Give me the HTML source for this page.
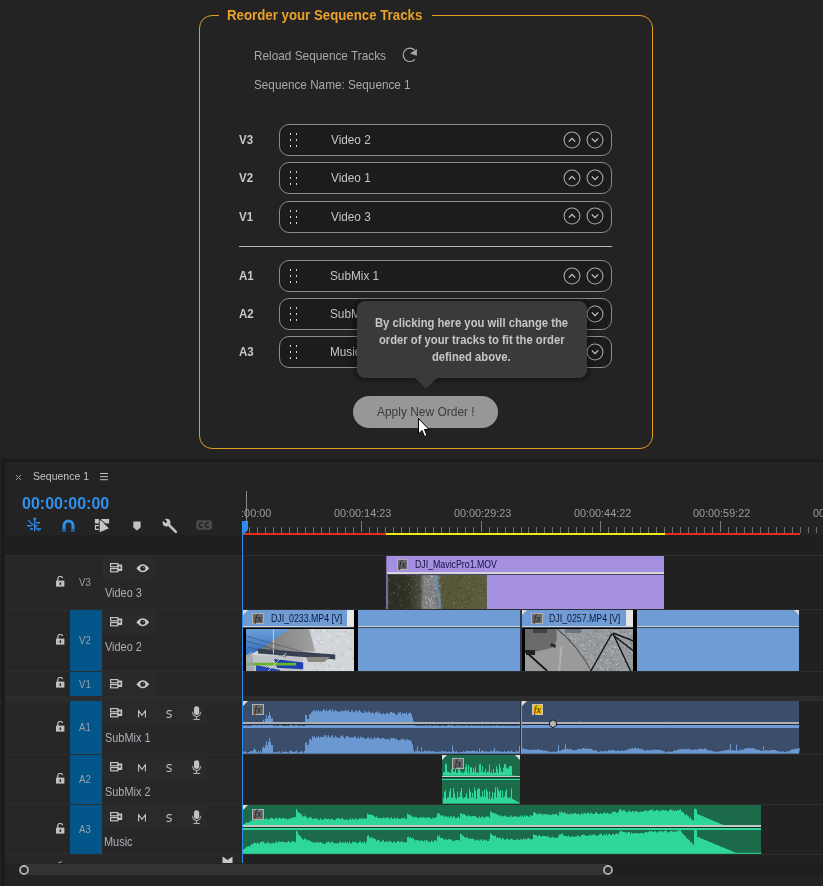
<!DOCTYPE html><html><head><meta charset="utf-8"><style>
*{margin:0;padding:0;box-sizing:border-box}
html,body{width:823px;height:886px;overflow:hidden;background:#232323;font-family:"Liberation Sans",sans-serif}
.a{position:absolute}
.t{position:absolute;white-space:nowrap;line-height:1}
</style></head><body><div class="a" style="left:199px;top:15px;width:454px;height:434px;border:1.4px solid #e49c22;border-radius:13px"></div>
<div class="a" style="left:218.5px;top:12px;width:213px;height:6px;background:#232323"></div>
<div class="t" style="left:227.37px;top:8.97px;font-size:13.91px;font-weight:700;color:#e8a12a;transform:scaleX(0.9533);transform-origin:0 0;">Reorder your Sequence Tracks</div>
<div class="t" style="left:253.85px;top:48.72px;font-size:13.62px;font-weight:400;color:#a8a8a8;transform:scaleX(0.8681);transform-origin:0 0;">Reload Sequence Tracks</div>
<svg class="a" style="left:402px;top:47px" width="17" height="17" viewBox="0 0 17 17"><path d="M12.5 3 A6.7 6.7 0 1 0 12.9 12.3" fill="none" stroke="#b2b2b2" stroke-width="1.1"/><path d="M8 6.5 L14.9 1.9 L14.9 8.7 Z" fill="#a8a8a8"/></svg>
<div class="t" style="left:254.21px;top:77.87px;font-size:13.33px;font-weight:400;color:#a8a8a8;transform:scaleX(0.8809);transform-origin:0 0;">Sequence Name: Sequence 1</div>
<div class="t" style="left:239.18px;top:134.36px;font-size:12.75px;font-weight:700;color:#c8c8c8;transform:scaleX(0.9037);transform-origin:0 0;">V3</div>
<div class="a" style="left:279px;top:124px;width:333px;height:32px;border:1.2px solid #8c8c8c;border-radius:10px;background:#1c1c1c"></div>
<div class="a" style="left:290px;top:133px;width:1.3px;height:2.1px;background:#d4d4d4"></div>
<div class="a" style="left:290px;top:139px;width:1.3px;height:2.1px;background:#d4d4d4"></div>
<div class="a" style="left:290px;top:145px;width:1.3px;height:2.1px;background:#d4d4d4"></div>
<div class="a" style="left:296.2px;top:133px;width:1.3px;height:2.1px;background:#d4d4d4"></div>
<div class="a" style="left:296.2px;top:139px;width:1.3px;height:2.1px;background:#d4d4d4"></div>
<div class="a" style="left:296.2px;top:145px;width:1.3px;height:2.1px;background:#d4d4d4"></div>
<div class="t" style="left:330.88px;top:132.87px;font-size:13.33px;font-weight:400;color:#c4c4c4;transform:scaleX(0.8837);transform-origin:0 0;">Video 2</div>
<svg class="a" style="left:562.4px;top:129.5px" width="20" height="20" viewBox="-10 -10 20 20"><circle cx="0" cy="0" r="7.95" fill="none" stroke="#a6a6a6" stroke-width="1.1"/><path d="M-3.2 1.6 L0 -1.6 L3.2 1.6" fill="none" stroke="#cacaca" stroke-width="1.25"/></svg>
<svg class="a" style="left:585.2px;top:129.5px" width="20" height="20" viewBox="-10 -10 20 20"><circle cx="0" cy="0" r="7.95" fill="none" stroke="#a6a6a6" stroke-width="1.1"/><path d="M-3.2 -1.6 L0 1.6 L3.2 -1.6" fill="none" stroke="#cacaca" stroke-width="1.25"/></svg>
<div class="t" style="left:239.18px;top:172.36px;font-size:12.75px;font-weight:700;color:#c8c8c8;transform:scaleX(0.9037);transform-origin:0 0;">V2</div>
<div class="a" style="left:279px;top:162px;width:333px;height:32px;border:1.2px solid #8c8c8c;border-radius:10px;background:#1c1c1c"></div>
<div class="a" style="left:290px;top:171px;width:1.3px;height:2.1px;background:#d4d4d4"></div>
<div class="a" style="left:290px;top:177px;width:1.3px;height:2.1px;background:#d4d4d4"></div>
<div class="a" style="left:290px;top:183px;width:1.3px;height:2.1px;background:#d4d4d4"></div>
<div class="a" style="left:296.2px;top:171px;width:1.3px;height:2.1px;background:#d4d4d4"></div>
<div class="a" style="left:296.2px;top:177px;width:1.3px;height:2.1px;background:#d4d4d4"></div>
<div class="a" style="left:296.2px;top:183px;width:1.3px;height:2.1px;background:#d4d4d4"></div>
<div class="t" style="left:330.88px;top:170.87px;font-size:13.33px;font-weight:400;color:#c4c4c4;transform:scaleX(0.8837);transform-origin:0 0;">Video 1</div>
<svg class="a" style="left:562.4px;top:167.5px" width="20" height="20" viewBox="-10 -10 20 20"><circle cx="0" cy="0" r="7.95" fill="none" stroke="#a6a6a6" stroke-width="1.1"/><path d="M-3.2 1.6 L0 -1.6 L3.2 1.6" fill="none" stroke="#cacaca" stroke-width="1.25"/></svg>
<svg class="a" style="left:585.2px;top:167.5px" width="20" height="20" viewBox="-10 -10 20 20"><circle cx="0" cy="0" r="7.95" fill="none" stroke="#a6a6a6" stroke-width="1.1"/><path d="M-3.2 -1.6 L0 1.6 L3.2 -1.6" fill="none" stroke="#cacaca" stroke-width="1.25"/></svg>
<div class="t" style="left:239.18px;top:210.86px;font-size:12.75px;font-weight:700;color:#c8c8c8;transform:scaleX(0.9037);transform-origin:0 0;">V1</div>
<div class="a" style="left:279px;top:200.5px;width:333px;height:32px;border:1.2px solid #8c8c8c;border-radius:10px;background:#1c1c1c"></div>
<div class="a" style="left:290px;top:209.5px;width:1.3px;height:2.1px;background:#d4d4d4"></div>
<div class="a" style="left:290px;top:215.5px;width:1.3px;height:2.1px;background:#d4d4d4"></div>
<div class="a" style="left:290px;top:221.5px;width:1.3px;height:2.1px;background:#d4d4d4"></div>
<div class="a" style="left:296.2px;top:209.5px;width:1.3px;height:2.1px;background:#d4d4d4"></div>
<div class="a" style="left:296.2px;top:215.5px;width:1.3px;height:2.1px;background:#d4d4d4"></div>
<div class="a" style="left:296.2px;top:221.5px;width:1.3px;height:2.1px;background:#d4d4d4"></div>
<div class="t" style="left:330.88px;top:210.37px;font-size:13.33px;font-weight:400;color:#c4c4c4;transform:scaleX(0.8837);transform-origin:0 0;">Video 3</div>
<svg class="a" style="left:562.4px;top:206.0px" width="20" height="20" viewBox="-10 -10 20 20"><circle cx="0" cy="0" r="7.95" fill="none" stroke="#a6a6a6" stroke-width="1.1"/><path d="M-3.2 1.6 L0 -1.6 L3.2 1.6" fill="none" stroke="#cacaca" stroke-width="1.25"/></svg>
<svg class="a" style="left:585.2px;top:206.0px" width="20" height="20" viewBox="-10 -10 20 20"><circle cx="0" cy="0" r="7.95" fill="none" stroke="#a6a6a6" stroke-width="1.1"/><path d="M-3.2 -1.6 L0 1.6 L3.2 -1.6" fill="none" stroke="#cacaca" stroke-width="1.25"/></svg>
<div class="t" style="left:238.95px;top:270.36px;font-size:12.75px;font-weight:700;color:#c8c8c8;transform:scaleX(0.9037);transform-origin:0 0;">A1</div>
<div class="a" style="left:279px;top:260px;width:333px;height:32px;border:1.2px solid #8c8c8c;border-radius:10px;background:#1c1c1c"></div>
<div class="a" style="left:290px;top:269px;width:1.3px;height:2.1px;background:#d4d4d4"></div>
<div class="a" style="left:290px;top:275px;width:1.3px;height:2.1px;background:#d4d4d4"></div>
<div class="a" style="left:290px;top:281px;width:1.3px;height:2.1px;background:#d4d4d4"></div>
<div class="a" style="left:296.2px;top:269px;width:1.3px;height:2.1px;background:#d4d4d4"></div>
<div class="a" style="left:296.2px;top:275px;width:1.3px;height:2.1px;background:#d4d4d4"></div>
<div class="a" style="left:296.2px;top:281px;width:1.3px;height:2.1px;background:#d4d4d4"></div>
<div class="t" style="left:330.41px;top:268.87px;font-size:13.33px;font-weight:400;color:#c4c4c4;transform:scaleX(0.8837);transform-origin:0 0;">SubMix 1</div>
<svg class="a" style="left:562.4px;top:265.5px" width="20" height="20" viewBox="-10 -10 20 20"><circle cx="0" cy="0" r="7.95" fill="none" stroke="#a6a6a6" stroke-width="1.1"/><path d="M-3.2 1.6 L0 -1.6 L3.2 1.6" fill="none" stroke="#cacaca" stroke-width="1.25"/></svg>
<svg class="a" style="left:585.2px;top:265.5px" width="20" height="20" viewBox="-10 -10 20 20"><circle cx="0" cy="0" r="7.95" fill="none" stroke="#a6a6a6" stroke-width="1.1"/><path d="M-3.2 -1.6 L0 1.6 L3.2 -1.6" fill="none" stroke="#cacaca" stroke-width="1.25"/></svg>
<div class="t" style="left:238.95px;top:308.36px;font-size:12.75px;font-weight:700;color:#c8c8c8;transform:scaleX(0.9037);transform-origin:0 0;">A2</div>
<div class="a" style="left:279px;top:298px;width:333px;height:32px;border:1.2px solid #8c8c8c;border-radius:10px;background:#1c1c1c"></div>
<div class="a" style="left:290px;top:307px;width:1.3px;height:2.1px;background:#d4d4d4"></div>
<div class="a" style="left:290px;top:313px;width:1.3px;height:2.1px;background:#d4d4d4"></div>
<div class="a" style="left:290px;top:319px;width:1.3px;height:2.1px;background:#d4d4d4"></div>
<div class="a" style="left:296.2px;top:307px;width:1.3px;height:2.1px;background:#d4d4d4"></div>
<div class="a" style="left:296.2px;top:313px;width:1.3px;height:2.1px;background:#d4d4d4"></div>
<div class="a" style="left:296.2px;top:319px;width:1.3px;height:2.1px;background:#d4d4d4"></div>
<div class="t" style="left:330.41px;top:306.87px;font-size:13.33px;font-weight:400;color:#c4c4c4;transform:scaleX(0.8837);transform-origin:0 0;">SubMix 2</div>
<svg class="a" style="left:562.4px;top:303.5px" width="20" height="20" viewBox="-10 -10 20 20"><circle cx="0" cy="0" r="7.95" fill="none" stroke="#a6a6a6" stroke-width="1.1"/><path d="M-3.2 1.6 L0 -1.6 L3.2 1.6" fill="none" stroke="#cacaca" stroke-width="1.25"/></svg>
<svg class="a" style="left:585.2px;top:303.5px" width="20" height="20" viewBox="-10 -10 20 20"><circle cx="0" cy="0" r="7.95" fill="none" stroke="#a6a6a6" stroke-width="1.1"/><path d="M-3.2 -1.6 L0 1.6 L3.2 -1.6" fill="none" stroke="#cacaca" stroke-width="1.25"/></svg>
<div class="t" style="left:238.95px;top:346.36px;font-size:12.75px;font-weight:700;color:#c8c8c8;transform:scaleX(0.9037);transform-origin:0 0;">A3</div>
<div class="a" style="left:279px;top:336px;width:333px;height:32px;border:1.2px solid #8c8c8c;border-radius:10px;background:#1c1c1c"></div>
<div class="a" style="left:290px;top:345px;width:1.3px;height:2.1px;background:#d4d4d4"></div>
<div class="a" style="left:290px;top:351px;width:1.3px;height:2.1px;background:#d4d4d4"></div>
<div class="a" style="left:290px;top:357px;width:1.3px;height:2.1px;background:#d4d4d4"></div>
<div class="a" style="left:296.2px;top:345px;width:1.3px;height:2.1px;background:#d4d4d4"></div>
<div class="a" style="left:296.2px;top:351px;width:1.3px;height:2.1px;background:#d4d4d4"></div>
<div class="a" style="left:296.2px;top:357px;width:1.3px;height:2.1px;background:#d4d4d4"></div>
<div class="t" style="left:330.06px;top:344.87px;font-size:13.33px;font-weight:400;color:#c4c4c4;transform:scaleX(0.8837);transform-origin:0 0;">Music</div>
<svg class="a" style="left:562.4px;top:341.5px" width="20" height="20" viewBox="-10 -10 20 20"><circle cx="0" cy="0" r="7.95" fill="none" stroke="#a6a6a6" stroke-width="1.1"/><path d="M-3.2 1.6 L0 -1.6 L3.2 1.6" fill="none" stroke="#cacaca" stroke-width="1.25"/></svg>
<svg class="a" style="left:585.2px;top:341.5px" width="20" height="20" viewBox="-10 -10 20 20"><circle cx="0" cy="0" r="7.95" fill="none" stroke="#a6a6a6" stroke-width="1.1"/><path d="M-3.2 -1.6 L0 1.6 L3.2 -1.6" fill="none" stroke="#cacaca" stroke-width="1.25"/></svg>
<div class="a" style="left:239px;top:245.8px;width:373px;height:1.1px;background:#b8b8b8"></div>
<div class="a" style="left:354px;top:299px;width:236px;height:82px;border-radius:10px;background:rgba(0,0,0,0.35);filter:blur(2.5px)"></div>
<div class="a" style="left:357px;top:301px;width:230px;height:77px;border-radius:8px;background:#3a3a3a"></div>
<svg class="a" style="left:412px;top:377px" width="28" height="13" viewBox="0 0 28 13"><path d="M2 0 L14 11.5 L26 0 Z" fill="#3a3a3a"/></svg>
<div class="t" style="left:374.66px;top:315.74px;font-size:13.48px;font-weight:700;color:#c6c6c6;transform:scaleX(0.8349);transform-origin:0 0;">By clicking here you will change the</div>
<div class="t" style="left:378.69px;top:332.74px;font-size:13.48px;font-weight:700;color:#c6c6c6;transform:scaleX(0.8349);transform-origin:0 0;">order of your tracks to fit the order</div>
<div class="t" style="left:432.38px;top:350.24px;font-size:13.48px;font-weight:700;color:#c6c6c6;transform:scaleX(0.8349);transform-origin:0 0;">defined above.</div>
<div class="a" style="left:353px;top:396px;width:145px;height:32px;border-radius:16px;background:#979797"></div>
<div class="t" style="left:377.20px;top:404.52px;font-size:13.62px;font-weight:400;color:#3c3c3c;transform:scaleX(0.8785);transform-origin:0 0;">Apply New Order !</div>
<svg class="a" style="left:417px;top:417px" width="14" height="22" viewBox="0 0 14 22"><path d="M1.5 1.5 L1.5 17 L5 13.5 L7.5 19.5 L10 18.5 L7.5 12.5 L12 12.5 Z" fill="#fff" stroke="#000" stroke-width="1"/></svg>
<div class="a" style="left:0;top:459px;width:823px;height:427px;background:#1b1b1b"></div>
<div class="a" style="left:0;top:459px;width:1px;height:427px;background:#222"></div>
<div class="a" style="left:5px;top:462px;width:818px;height:424px;background:#232323"></div>
<svg class="a" style="left:15px;top:474px" width="7" height="7" viewBox="0 0 7 7"><path d="M0.8 0.8 L6.2 6.2 M6.2 0.8 L0.8 6.2" stroke="#9a9a9a" stroke-width="1"/></svg>
<div class="t" style="left:32.68px;top:471.37px;font-size:11.45px;font-weight:400;color:#c4c4c4;transform:scaleX(0.9168);transform-origin:0 0;">Sequence 1</div>
<div class="a" style="left:100.3px;top:473.3px;width:8px;height:1.2px;background:#c0c0c0;box-shadow:0 3.1px 0 #c0c0c0,0 6.2px 0 #c0c0c0"></div>
<div class="t" style="left:22.46px;top:495.26px;font-size:17.10px;font-weight:700;color:#2f90ee;transform:scaleX(0.9365);transform-origin:0 0;">00:00:00:00</div>
<svg class="a" style="left:26px;top:517px" width="17" height="15" viewBox="0 0 17 15"><path d="M8.75 2 V14.2" stroke="#2f8fee" stroke-width="1.3"/><path d="M7.3 0.8 H10.2 V2.2 L8.75 3.4 L7.3 2.2 Z" fill="#2f8fee"/><path d="M10.2 5.7 H13.9 M1 8.7 H5.8 M10.2 8.7 H11.7 M4 12 H7 M11.7 12 H15" stroke="#2f8fee" stroke-width="1.5"/><path d="M2.2 3.2 L13.1 13.9" stroke="#2f8fee" stroke-width="1.15"/></svg><svg class="a" style="left:61.5px;top:518.5px" width="13" height="13" viewBox="0 0 13 13"><path d="M2 12.4 V6.4 A4.5 4.5 0 0 1 11 6.4 V12.4" fill="none" stroke="#2f8fee" stroke-width="3"/><path d="M0.5 9.8 H3.5 V12.4 H0.5 Z M9.5 9.8 H12.5 V12.4 H9.5 Z" fill="#1b5ea6"/></svg><svg class="a" style="left:94px;top:518px" width="16" height="15" viewBox="0 0 16 15"><rect x="0.9" y="1" width="4" height="4.5" fill="#c6c6c6"/><path d="M4.9 7.6 H1.4 V11.4 H4.9" fill="none" stroke="#c6c6c6" stroke-width="1.1"/><path d="M7 1 H15.1 V5.5 H7 Z" fill="#c6c6c6"/><path d="M5.7 1.8 V14.2 L15.1 10.2 Z" fill="#c6c6c6"/><path d="M6.5 1.2 L15 9.4" stroke="#232323" stroke-width="1"/></svg><svg class="a" style="left:132.5px;top:520.5px" width="8" height="10" viewBox="0 0 8 10"><path d="M0.3 0.4 H7.6 V6.4 L3.95 9.6 L0.3 6.4 Z" fill="#c0c0c0"/></svg><svg class="a" style="left:162px;top:517.5px" width="16" height="16" viewBox="0 0 16 16"><path d="M5.6 5.6 L13.8 13.8" stroke="#c4c4c4" stroke-width="2.6" stroke-linecap="round"/><circle cx="4.6" cy="4.6" r="3.9" fill="#c4c4c4"/><path d="M1.6 1.6 L4.4 4.4" stroke="#232323" stroke-width="2.3"/></svg><svg class="a" style="left:196px;top:520px" width="17" height="11" viewBox="0 0 17 11"><rect x="0.2" y="0.2" width="15.8" height="9.6" rx="2.4" fill="#4a4a4a"/><path d="M6.6 3.4 A2.1 2.1 0 1 0 6.6 6.6 M12.8 3.4 A2.1 2.1 0 1 0 12.8 6.6" fill="none" stroke="#232323" stroke-width="1.5"/></svg>
<div class="a" style="left:242px;top:462px;width:581px;height:73px;overflow:hidden"><div class="a" style="left:7.28px;top:65px;width:1px;height:5.7px;background:#6e6e6e"></div><div class="a" style="left:15.25px;top:65px;width:1px;height:5.7px;background:#6e6e6e"></div><div class="a" style="left:23.23px;top:65px;width:1px;height:5.7px;background:#6e6e6e"></div><div class="a" style="left:31.21px;top:65px;width:1px;height:5.7px;background:#6e6e6e"></div><div class="a" style="left:39.19px;top:65px;width:1px;height:5.7px;background:#6e6e6e"></div><div class="a" style="left:47.16px;top:65px;width:1px;height:5.7px;background:#6e6e6e"></div><div class="a" style="left:55.14px;top:65px;width:1px;height:5.7px;background:#6e6e6e"></div><div class="a" style="left:63.12px;top:65px;width:1px;height:5.7px;background:#6e6e6e"></div><div class="a" style="left:71.09px;top:65px;width:1px;height:5.7px;background:#6e6e6e"></div><div class="a" style="left:79.07px;top:65px;width:1px;height:5.7px;background:#6e6e6e"></div><div class="a" style="left:87.05px;top:65px;width:1px;height:5.7px;background:#6e6e6e"></div><div class="a" style="left:95.02px;top:65px;width:1px;height:5.7px;background:#6e6e6e"></div><div class="a" style="left:103.00px;top:65px;width:1px;height:5.7px;background:#6e6e6e"></div><div class="a" style="left:110.98px;top:65px;width:1px;height:5.7px;background:#6e6e6e"></div><div class="a" style="left:118.95px;top:59.3px;width:1px;height:11.2px;background:#7a7a7a"></div><div class="a" style="left:126.93px;top:65px;width:1px;height:5.7px;background:#6e6e6e"></div><div class="a" style="left:134.91px;top:65px;width:1px;height:5.7px;background:#6e6e6e"></div><div class="a" style="left:142.89px;top:65px;width:1px;height:5.7px;background:#6e6e6e"></div><div class="a" style="left:150.86px;top:65px;width:1px;height:5.7px;background:#6e6e6e"></div><div class="a" style="left:158.84px;top:65px;width:1px;height:5.7px;background:#6e6e6e"></div><div class="a" style="left:166.82px;top:65px;width:1px;height:5.7px;background:#6e6e6e"></div><div class="a" style="left:174.79px;top:65px;width:1px;height:5.7px;background:#6e6e6e"></div><div class="a" style="left:182.77px;top:65px;width:1px;height:5.7px;background:#6e6e6e"></div><div class="a" style="left:190.75px;top:65px;width:1px;height:5.7px;background:#6e6e6e"></div><div class="a" style="left:198.73px;top:65px;width:1px;height:5.7px;background:#6e6e6e"></div><div class="a" style="left:206.70px;top:65px;width:1px;height:5.7px;background:#6e6e6e"></div><div class="a" style="left:214.68px;top:65px;width:1px;height:5.7px;background:#6e6e6e"></div><div class="a" style="left:222.66px;top:65px;width:1px;height:5.7px;background:#6e6e6e"></div><div class="a" style="left:230.63px;top:65px;width:1px;height:5.7px;background:#6e6e6e"></div><div class="a" style="left:238.61px;top:59.3px;width:1px;height:11.2px;background:#7a7a7a"></div><div class="a" style="left:246.59px;top:65px;width:1px;height:5.7px;background:#6e6e6e"></div><div class="a" style="left:254.56px;top:65px;width:1px;height:5.7px;background:#6e6e6e"></div><div class="a" style="left:262.54px;top:65px;width:1px;height:5.7px;background:#6e6e6e"></div><div class="a" style="left:270.52px;top:65px;width:1px;height:5.7px;background:#6e6e6e"></div><div class="a" style="left:278.50px;top:65px;width:1px;height:5.7px;background:#6e6e6e"></div><div class="a" style="left:286.47px;top:65px;width:1px;height:5.7px;background:#6e6e6e"></div><div class="a" style="left:294.45px;top:65px;width:1px;height:5.7px;background:#6e6e6e"></div><div class="a" style="left:302.43px;top:65px;width:1px;height:5.7px;background:#6e6e6e"></div><div class="a" style="left:310.40px;top:65px;width:1px;height:5.7px;background:#6e6e6e"></div><div class="a" style="left:318.38px;top:65px;width:1px;height:5.7px;background:#6e6e6e"></div><div class="a" style="left:326.36px;top:65px;width:1px;height:5.7px;background:#6e6e6e"></div><div class="a" style="left:334.33px;top:65px;width:1px;height:5.7px;background:#6e6e6e"></div><div class="a" style="left:342.31px;top:65px;width:1px;height:5.7px;background:#6e6e6e"></div><div class="a" style="left:350.29px;top:65px;width:1px;height:5.7px;background:#6e6e6e"></div><div class="a" style="left:358.27px;top:59.3px;width:1px;height:11.2px;background:#7a7a7a"></div><div class="a" style="left:366.24px;top:65px;width:1px;height:5.7px;background:#6e6e6e"></div><div class="a" style="left:374.22px;top:65px;width:1px;height:5.7px;background:#6e6e6e"></div><div class="a" style="left:382.20px;top:65px;width:1px;height:5.7px;background:#6e6e6e"></div><div class="a" style="left:390.17px;top:65px;width:1px;height:5.7px;background:#6e6e6e"></div><div class="a" style="left:398.15px;top:65px;width:1px;height:5.7px;background:#6e6e6e"></div><div class="a" style="left:406.13px;top:65px;width:1px;height:5.7px;background:#6e6e6e"></div><div class="a" style="left:414.10px;top:65px;width:1px;height:5.7px;background:#6e6e6e"></div><div class="a" style="left:422.08px;top:65px;width:1px;height:5.7px;background:#6e6e6e"></div><div class="a" style="left:430.06px;top:65px;width:1px;height:5.7px;background:#6e6e6e"></div><div class="a" style="left:438.04px;top:65px;width:1px;height:5.7px;background:#6e6e6e"></div><div class="a" style="left:446.01px;top:65px;width:1px;height:5.7px;background:#6e6e6e"></div><div class="a" style="left:453.99px;top:65px;width:1px;height:5.7px;background:#6e6e6e"></div><div class="a" style="left:461.97px;top:65px;width:1px;height:5.7px;background:#6e6e6e"></div><div class="a" style="left:469.94px;top:65px;width:1px;height:5.7px;background:#6e6e6e"></div><div class="a" style="left:477.92px;top:59.3px;width:1px;height:11.2px;background:#7a7a7a"></div><div class="a" style="left:485.90px;top:65px;width:1px;height:5.7px;background:#6e6e6e"></div><div class="a" style="left:493.87px;top:65px;width:1px;height:5.7px;background:#6e6e6e"></div><div class="a" style="left:501.85px;top:65px;width:1px;height:5.7px;background:#6e6e6e"></div><div class="a" style="left:509.83px;top:65px;width:1px;height:5.7px;background:#6e6e6e"></div><div class="a" style="left:517.80px;top:65px;width:1px;height:5.7px;background:#6e6e6e"></div><div class="a" style="left:525.78px;top:65px;width:1px;height:5.7px;background:#6e6e6e"></div><div class="a" style="left:533.76px;top:65px;width:1px;height:5.7px;background:#6e6e6e"></div><div class="a" style="left:541.74px;top:65px;width:1px;height:5.7px;background:#6e6e6e"></div><div class="a" style="left:549.71px;top:65px;width:1px;height:5.7px;background:#6e6e6e"></div><div class="a" style="left:557.69px;top:65px;width:1px;height:5.7px;background:#6e6e6e"></div><div class="a" style="left:565.67px;top:65px;width:1px;height:5.7px;background:#6e6e6e"></div><div class="a" style="left:573.64px;top:65px;width:1px;height:5.7px;background:#6e6e6e"></div><div class="a" style="left:581.62px;top:65px;width:1px;height:5.7px;background:#6e6e6e"></div><div class="a" style="left:589.60px;top:65px;width:1px;height:5.7px;background:#6e6e6e"></div></div><div class="a" style="left:242px;top:462px;width:581px;height:73px;overflow:hidden"><div class="t" style="left:-27.93px;top:46.27px;font-size:11.45px;font-weight:400;color:#9c9c9c;transform:scaleX(0.9473);transform-origin:0 0;">00:00:00:00</div><div class="t" style="left:91.87px;top:46.27px;font-size:11.45px;font-weight:400;color:#9c9c9c;transform:scaleX(0.9473);transform-origin:0 0;">00:00:14:23</div><div class="t" style="left:211.67px;top:46.27px;font-size:11.45px;font-weight:400;color:#9c9c9c;transform:scaleX(0.9473);transform-origin:0 0;">00:00:29:23</div><div class="t" style="left:331.52px;top:46.27px;font-size:11.45px;font-weight:400;color:#9c9c9c;transform:scaleX(0.9473);transform-origin:0 0;">00:00:44:22</div><div class="t" style="left:451.32px;top:46.27px;font-size:11.45px;font-weight:400;color:#9c9c9c;transform:scaleX(0.9473);transform-origin:0 0;">00:00:59:22</div><div class="t" style="left:571.12px;top:46.27px;font-size:11.45px;font-weight:400;color:#9c9c9c;transform:scaleX(0.9473);transform-origin:0 0;">00:01:14:22</div><div class="a" style="left:0.8px;top:71px;width:143px;height:2.2px;background:#e52b1c"></div><div class="a" style="left:143.6px;top:71px;width:279.4px;height:2.2px;background:#eeea16"></div><div class="a" style="left:423px;top:71px;width:134.7px;height:2.2px;background:#e52b1c"></div></div><div class="a" style="left:246px;top:491px;width:1px;height:31px;background:#8c8c8c"></div><svg class="a" style="left:241px;top:520px" width="8" height="16" viewBox="0 0 8 16"><path d="M1 1 H7 V10 L1.8 15 H1 Z" fill="#2d8ceb"/></svg>
<div class="a" style="left:5px;top:535px;width:818px;height:20px;background:#1f1f1f"></div>
<div class="a" style="left:5px;top:555px;width:818px;height:1px;background:#2e2e2e"></div>
<div class="a" style="left:5px;top:556px;width:237px;height:53px;background:#282627"></div>
<div class="a" style="left:242px;top:556px;width:581px;height:53px;background:#212121"></div>
<div class="a" style="left:5px;top:609px;width:818px;height:1px;background:#2d2d2d"></div>
<svg class="a" style="left:55.8px;top:576.4px" width="10" height="11" viewBox="0 0 10 11"><path d="M1.9 5 V3.3 A2.4 2.4 0 0 1 6.6 2.2" fill="none" stroke="#bdbdbd" stroke-width="1.3"/><rect x="0" y="4.6" width="8.4" height="6" fill="#c0c0c0"/><rect x="3.6" y="6.4" width="1.5" height="2.6" fill="#282627"/></svg>
<div class="t" style="left:78.75px;top:578.35px;font-size:10.29px;font-weight:400;color:#98a2ac;transform:scaleX(0.9386);transform-origin:0 0;">V3</div>
<div class="a" style="left:102px;top:557px;width:53px;height:23px;background:#2a2a2a"></div>
<svg class="a" style="left:109.6px;top:563.2px" width="14" height="10" viewBox="0 0 14 10"><rect x="0.6" y="0.6" width="7.2" height="3.2" fill="none" stroke="#c4c4c4" stroke-width="1.2"/><rect x="0.6" y="5.6" width="7.2" height="3.2" fill="none" stroke="#c4c4c4" stroke-width="1.2"/><path d="M7.8 1.4 H12.2 V8 H7.8 Z M8.6 3.6 V5.8 H10.6 V3.6 Z" fill="#c4c4c4" fill-rule="evenodd"/></svg>
<svg class="a" style="left:135.9px;top:564.3px" width="15" height="10" viewBox="0 0 15 10"><path d="M0.4 4.3 Q6.8 -3.6 13.2 4.3 Q6.8 12.2 0.4 4.3 Z" fill="#c8c8c8"/><circle cx="6.8" cy="4.3" r="2.5" fill="#262626"/><circle cx="7.6" cy="3.6" r="0.7" fill="#9a9a9a"/></svg>
<div class="t" style="left:105.09px;top:586.73px;font-size:12.32px;font-weight:400;color:#a9b0b6;transform:scaleX(0.8876);transform-origin:0 0;">Video 3</div>
<div class="a" style="left:5px;top:610px;width:237px;height:61px;background:#282627"></div>
<div class="a" style="left:242px;top:610px;width:581px;height:61px;background:#212121"></div>
<div class="a" style="left:5px;top:671px;width:818px;height:1px;background:#2d2d2d"></div>
<div class="a" style="left:70px;top:610px;width:32px;height:61px;background:#02568a"></div>
<svg class="a" style="left:55.8px;top:634.4px" width="10" height="11" viewBox="0 0 10 11"><path d="M1.9 5 V3.3 A2.4 2.4 0 0 1 6.6 2.2" fill="none" stroke="#bdbdbd" stroke-width="1.3"/><rect x="0" y="4.6" width="8.4" height="6" fill="#c0c0c0"/><rect x="3.6" y="6.4" width="1.5" height="2.6" fill="#282627"/></svg>
<div class="t" style="left:78.80px;top:636.35px;font-size:10.29px;font-weight:400;color:#98a2ac;transform:scaleX(0.9386);transform-origin:0 0;">V2</div>
<div class="a" style="left:102px;top:611px;width:53px;height:23px;background:#2a2a2a"></div>
<svg class="a" style="left:109.6px;top:617.2px" width="14" height="10" viewBox="0 0 14 10"><rect x="0.6" y="0.6" width="7.2" height="3.2" fill="none" stroke="#c4c4c4" stroke-width="1.2"/><rect x="0.6" y="5.6" width="7.2" height="3.2" fill="none" stroke="#c4c4c4" stroke-width="1.2"/><path d="M7.8 1.4 H12.2 V8 H7.8 Z M8.6 3.6 V5.8 H10.6 V3.6 Z" fill="#c4c4c4" fill-rule="evenodd"/></svg>
<svg class="a" style="left:135.9px;top:618.3px" width="15" height="10" viewBox="0 0 15 10"><path d="M0.4 4.3 Q6.8 -3.6 13.2 4.3 Q6.8 12.2 0.4 4.3 Z" fill="#c8c8c8"/><circle cx="6.8" cy="4.3" r="2.5" fill="#262626"/><circle cx="7.6" cy="3.6" r="0.7" fill="#9a9a9a"/></svg>
<div class="t" style="left:105.09px;top:640.73px;font-size:12.32px;font-weight:400;color:#a9b0b6;transform:scaleX(0.8876);transform-origin:0 0;">Video 2</div>
<div class="a" style="left:5px;top:672px;width:237px;height:24px;background:#282627"></div>
<div class="a" style="left:242px;top:672px;width:581px;height:24px;background:#212121"></div>
<div class="a" style="left:5px;top:696px;width:818px;height:1px;background:#2d2d2d"></div>
<div class="a" style="left:70px;top:672px;width:32px;height:24px;background:#02568a"></div>
<svg class="a" style="left:55.8px;top:677px" width="10" height="11" viewBox="0 0 10 11"><path d="M1.9 5 V3.3 A2.4 2.4 0 0 1 6.6 2.2" fill="none" stroke="#bdbdbd" stroke-width="1.3"/><rect x="0" y="4.6" width="8.4" height="6" fill="#c0c0c0"/><rect x="3.6" y="6.4" width="1.5" height="2.6" fill="#282627"/></svg>
<div class="t" style="left:78.80px;top:680.35px;font-size:10.29px;font-weight:400;color:#98a2ac;transform:scaleX(0.9386);transform-origin:0 0;">V1</div>
<div class="a" style="left:102px;top:673px;width:53px;height:23px;background:#2a2a2a"></div>
<svg class="a" style="left:109.6px;top:679.2px" width="14" height="10" viewBox="0 0 14 10"><rect x="0.6" y="0.6" width="7.2" height="3.2" fill="none" stroke="#c4c4c4" stroke-width="1.2"/><rect x="0.6" y="5.6" width="7.2" height="3.2" fill="none" stroke="#c4c4c4" stroke-width="1.2"/><path d="M7.8 1.4 H12.2 V8 H7.8 Z M8.6 3.6 V5.8 H10.6 V3.6 Z" fill="#c4c4c4" fill-rule="evenodd"/></svg>
<svg class="a" style="left:135.9px;top:680.3px" width="15" height="10" viewBox="0 0 15 10"><path d="M0.4 4.3 Q6.8 -3.6 13.2 4.3 Q6.8 12.2 0.4 4.3 Z" fill="#c8c8c8"/><circle cx="6.8" cy="4.3" r="2.5" fill="#262626"/><circle cx="7.6" cy="3.6" r="0.7" fill="#9a9a9a"/></svg>
<div class="a" style="left:5px;top:701px;width:237px;height:53px;background:#282627"></div>
<div class="a" style="left:242px;top:701px;width:581px;height:53px;background:#212121"></div>
<div class="a" style="left:5px;top:754px;width:818px;height:1px;background:#2d2d2d"></div>
<div class="a" style="left:70px;top:701px;width:32px;height:53px;background:#02568a"></div>
<svg class="a" style="left:55.8px;top:721.4px" width="10" height="11" viewBox="0 0 10 11"><path d="M1.9 5 V3.3 A2.4 2.4 0 0 1 6.6 2.2" fill="none" stroke="#bdbdbd" stroke-width="1.3"/><rect x="0" y="4.6" width="8.4" height="6" fill="#c0c0c0"/><rect x="3.6" y="6.4" width="1.5" height="2.6" fill="#282627"/></svg>
<div class="t" style="left:78.85px;top:723.35px;font-size:10.29px;font-weight:400;color:#98a2ac;transform:scaleX(0.9386);transform-origin:0 0;">A1</div>
<div class="a" style="left:102px;top:702px;width:104px;height:23px;background:#2a2a2a"></div>
<svg class="a" style="left:109.6px;top:707.8px" width="14" height="10" viewBox="0 0 14 10"><rect x="0.6" y="0.6" width="7.2" height="3.2" fill="none" stroke="#c4c4c4" stroke-width="1.2"/><rect x="0.6" y="5.6" width="7.2" height="3.2" fill="none" stroke="#c4c4c4" stroke-width="1.2"/><path d="M7.8 1.4 H12.2 V8 H7.8 Z M8.6 3.6 V5.8 H10.6 V3.6 Z" fill="#c4c4c4" fill-rule="evenodd"/></svg>
<svg class="a" style="left:138.2px;top:710.2px" width="9" height="8" viewBox="0 0 9 8"><path d="M0.6 7.6 V0.7 L4 5.4 L7.4 0.7 V7.6" fill="none" stroke="#c6c6c6" stroke-width="1.05"/></svg>
<svg class="a" style="left:166.3px;top:710.2px" width="7" height="8" viewBox="0 0 7 8"><path d="M5.6 1.2 Q4.8 0.5 3 0.5 Q0.8 0.6 0.8 2.2 Q0.9 3.6 3 3.9 Q5.4 4.3 5.4 5.8 Q5.3 7.4 3 7.5 Q1.2 7.5 0.5 6.8" fill="none" stroke="#c6c6c6" stroke-width="1.05"/></svg>
<svg class="a" style="left:192px;top:706.4px" width="10" height="15" viewBox="0 0 10 15"><rect x="2" y="0.3" width="5.2" height="8.6" rx="2.6" fill="#c0c0c0"/><path d="M0.6 5.8 V6.6 A4 4 0 0 0 8.6 6.6 V5.8" fill="none" stroke="#c0c0c0" stroke-width="1"/><path d="M4.6 10.6 V13 M1.4 13.4 H7.8" stroke="#c0c0c0" stroke-width="1"/></svg>
<div class="t" style="left:104.65px;top:731.73px;font-size:12.32px;font-weight:400;color:#a9b0b6;transform:scaleX(0.8876);transform-origin:0 0;">SubMix 1</div>
<div class="a" style="left:5px;top:755px;width:237px;height:49px;background:#282627"></div>
<div class="a" style="left:242px;top:755px;width:581px;height:49px;background:#212121"></div>
<div class="a" style="left:5px;top:804px;width:818px;height:1px;background:#2d2d2d"></div>
<div class="a" style="left:70px;top:755px;width:32px;height:49px;background:#02568a"></div>
<svg class="a" style="left:55.8px;top:773.4px" width="10" height="11" viewBox="0 0 10 11"><path d="M1.9 5 V3.3 A2.4 2.4 0 0 1 6.6 2.2" fill="none" stroke="#bdbdbd" stroke-width="1.3"/><rect x="0" y="4.6" width="8.4" height="6" fill="#c0c0c0"/><rect x="3.6" y="6.4" width="1.5" height="2.6" fill="#282627"/></svg>
<div class="t" style="left:78.85px;top:775.35px;font-size:10.29px;font-weight:400;color:#98a2ac;transform:scaleX(0.9386);transform-origin:0 0;">A2</div>
<div class="a" style="left:102px;top:756px;width:104px;height:23px;background:#2a2a2a"></div>
<svg class="a" style="left:109.6px;top:761.8px" width="14" height="10" viewBox="0 0 14 10"><rect x="0.6" y="0.6" width="7.2" height="3.2" fill="none" stroke="#c4c4c4" stroke-width="1.2"/><rect x="0.6" y="5.6" width="7.2" height="3.2" fill="none" stroke="#c4c4c4" stroke-width="1.2"/><path d="M7.8 1.4 H12.2 V8 H7.8 Z M8.6 3.6 V5.8 H10.6 V3.6 Z" fill="#c4c4c4" fill-rule="evenodd"/></svg>
<svg class="a" style="left:138.2px;top:764.2px" width="9" height="8" viewBox="0 0 9 8"><path d="M0.6 7.6 V0.7 L4 5.4 L7.4 0.7 V7.6" fill="none" stroke="#c6c6c6" stroke-width="1.05"/></svg>
<svg class="a" style="left:166.3px;top:764.2px" width="7" height="8" viewBox="0 0 7 8"><path d="M5.6 1.2 Q4.8 0.5 3 0.5 Q0.8 0.6 0.8 2.2 Q0.9 3.6 3 3.9 Q5.4 4.3 5.4 5.8 Q5.3 7.4 3 7.5 Q1.2 7.5 0.5 6.8" fill="none" stroke="#c6c6c6" stroke-width="1.05"/></svg>
<svg class="a" style="left:192px;top:760.4px" width="10" height="15" viewBox="0 0 10 15"><rect x="2" y="0.3" width="5.2" height="8.6" rx="2.6" fill="#c0c0c0"/><path d="M0.6 5.8 V6.6 A4 4 0 0 0 8.6 6.6 V5.8" fill="none" stroke="#c0c0c0" stroke-width="1"/><path d="M4.6 10.6 V13 M1.4 13.4 H7.8" stroke="#c0c0c0" stroke-width="1"/></svg>
<div class="t" style="left:104.65px;top:785.73px;font-size:12.32px;font-weight:400;color:#a9b0b6;transform:scaleX(0.8876);transform-origin:0 0;">SubMix 2</div>
<div class="a" style="left:5px;top:805px;width:237px;height:49px;background:#282627"></div>
<div class="a" style="left:242px;top:805px;width:581px;height:49px;background:#212121"></div>
<div class="a" style="left:5px;top:854px;width:818px;height:1px;background:#2d2d2d"></div>
<div class="a" style="left:70px;top:805px;width:32px;height:49px;background:#02568a"></div>
<svg class="a" style="left:55.8px;top:823.4px" width="10" height="11" viewBox="0 0 10 11"><path d="M1.9 5 V3.3 A2.4 2.4 0 0 1 6.6 2.2" fill="none" stroke="#bdbdbd" stroke-width="1.3"/><rect x="0" y="4.6" width="8.4" height="6" fill="#c0c0c0"/><rect x="3.6" y="6.4" width="1.5" height="2.6" fill="#282627"/></svg>
<div class="t" style="left:78.80px;top:825.35px;font-size:10.29px;font-weight:400;color:#98a2ac;transform:scaleX(0.9386);transform-origin:0 0;">A3</div>
<div class="a" style="left:102px;top:806px;width:104px;height:23px;background:#2a2a2a"></div>
<svg class="a" style="left:109.6px;top:811.8px" width="14" height="10" viewBox="0 0 14 10"><rect x="0.6" y="0.6" width="7.2" height="3.2" fill="none" stroke="#c4c4c4" stroke-width="1.2"/><rect x="0.6" y="5.6" width="7.2" height="3.2" fill="none" stroke="#c4c4c4" stroke-width="1.2"/><path d="M7.8 1.4 H12.2 V8 H7.8 Z M8.6 3.6 V5.8 H10.6 V3.6 Z" fill="#c4c4c4" fill-rule="evenodd"/></svg>
<svg class="a" style="left:138.2px;top:814.2px" width="9" height="8" viewBox="0 0 9 8"><path d="M0.6 7.6 V0.7 L4 5.4 L7.4 0.7 V7.6" fill="none" stroke="#c6c6c6" stroke-width="1.05"/></svg>
<svg class="a" style="left:166.3px;top:814.2px" width="7" height="8" viewBox="0 0 7 8"><path d="M5.6 1.2 Q4.8 0.5 3 0.5 Q0.8 0.6 0.8 2.2 Q0.9 3.6 3 3.9 Q5.4 4.3 5.4 5.8 Q5.3 7.4 3 7.5 Q1.2 7.5 0.5 6.8" fill="none" stroke="#c6c6c6" stroke-width="1.05"/></svg>
<svg class="a" style="left:192px;top:810.4px" width="10" height="15" viewBox="0 0 10 15"><rect x="2" y="0.3" width="5.2" height="8.6" rx="2.6" fill="#c0c0c0"/><path d="M0.6 5.8 V6.6 A4 4 0 0 0 8.6 6.6 V5.8" fill="none" stroke="#c0c0c0" stroke-width="1"/><path d="M4.6 10.6 V13 M1.4 13.4 H7.8" stroke="#c0c0c0" stroke-width="1"/></svg>
<div class="t" style="left:104.33px;top:835.73px;font-size:12.32px;font-weight:400;color:#a9b0b6;transform:scaleX(0.8876);transform-origin:0 0;">Music</div>
<div class="a" style="left:5px;top:855px;width:237px;height:8px;background:#282627"></div>
<div class="a" style="left:242px;top:855px;width:581px;height:8px;background:#212121"></div>
<div class="a" style="left:5px;top:863px;width:818px;height:1px;background:#2d2d2d"></div>
<svg class="a" style="left:57px;top:860.5px" width="6" height="3"><path d="M0.8 2.8 Q2 1 4.8 0.8" fill="none" stroke="#bbb" stroke-width="1.1"/></svg>
<svg class="a" style="left:222px;top:856px" width="12" height="7"><path d="M0.5 0.5 L5.5 4 L10.5 0.5 V7 H0.5 Z" fill="#c8c8c8"/></svg>
<div class="a" style="left:5px;top:696px;width:818px;height:5px;background:#2c2c2c"></div>
<div class="a" style="left:386px;top:556px;width:278px;height:53px;background:#a48fe1"></div><div class="a" style="left:386px;top:556px;width:1px;height:53px;background:#7f72a8"></div><div class="a" style="left:387px;top:572px;width:277px;height:1.6px;background:#d6d6da"></div><div class="a" style="left:387px;top:573.6px;width:277px;height:1px;background:#4a4560"></div><svg class="a" style="left:387px;top:574.5px" width="100" height="34.5" viewBox="0 0 100 34" preserveAspectRatio="none"><defs><linearGradient id="g3" x1="0" x2="1" y1="0" y2="0"><stop offset="0" stop-color="#2b2d22"/><stop offset="0.2" stop-color="#303226"/><stop offset="0.25" stop-color="#3c3d31"/><stop offset="0.33" stop-color="#4a4c42"/><stop offset="0.36" stop-color="#7a7c7c"/><stop offset="0.47" stop-color="#84868a"/><stop offset="0.53" stop-color="#5e604c"/><stop offset="0.56" stop-color="#55573a"/><stop offset="1" stop-color="#5a5c3a"/></linearGradient></defs><rect width="100" height="34" fill="url(#g3)"/><rect x="49.3" y="27.9" width="1.0" height="1.0" fill="#9a9a9a" opacity="0.7"/><rect x="48.7" y="1.3" width="1.0" height="1.0" fill="#e0e0e0" opacity="0.7"/><rect x="46.9" y="16.0" width="1.0" height="1.0" fill="#505050" opacity="0.7"/><rect x="40.7" y="0.7" width="1.0" height="1.0" fill="#9a9a9a" opacity="0.7"/><rect x="49.4" y="24.8" width="1.0" height="1.0" fill="#9a9a9a" opacity="0.7"/><rect x="51.4" y="18.3" width="1.0" height="1.0" fill="#c8c8c8" opacity="0.7"/><rect x="38.5" y="18.8" width="1.0" height="1.0" fill="#505050" opacity="0.7"/><rect x="46.9" y="20.7" width="1.0" height="1.0" fill="#c8c8c8" opacity="0.7"/><rect x="50.2" y="11.4" width="1.0" height="1.0" fill="#c8c8c8" opacity="0.7"/><rect x="41.5" y="13.9" width="1.0" height="1.0" fill="#505050" opacity="0.7"/><rect x="43.0" y="3.2" width="1.0" height="1.0" fill="#e0e0e0" opacity="0.7"/><rect x="47.6" y="27.1" width="1.0" height="1.0" fill="#c8c8c8" opacity="0.7"/><rect x="52.1" y="20.0" width="1.0" height="1.0" fill="#e0e0e0" opacity="0.7"/><rect x="49.9" y="31.0" width="1.0" height="1.0" fill="#9a9a9a" opacity="0.7"/><rect x="51.8" y="30.9" width="1.0" height="1.0" fill="#c8c8c8" opacity="0.7"/><rect x="46.4" y="8.3" width="1.0" height="1.0" fill="#9a9a9a" opacity="0.7"/><rect x="40.5" y="20.0" width="1.0" height="1.0" fill="#c8c8c8" opacity="0.7"/><rect x="44.0" y="23.1" width="1.0" height="1.0" fill="#e0e0e0" opacity="0.7"/><rect x="37.1" y="22.5" width="1.0" height="1.0" fill="#505050" opacity="0.7"/><rect x="47.9" y="12.9" width="1.0" height="1.0" fill="#e0e0e0" opacity="0.7"/><rect x="37.5" y="7.1" width="1.0" height="1.0" fill="#c8c8c8" opacity="0.7"/><rect x="38.4" y="5.8" width="1.0" height="1.0" fill="#505050" opacity="0.7"/><rect x="45.0" y="22.8" width="1.0" height="1.0" fill="#505050" opacity="0.7"/><rect x="41.7" y="17.9" width="1.0" height="1.0" fill="#505050" opacity="0.7"/><rect x="37.3" y="34.0" width="1.0" height="1.0" fill="#c8c8c8" opacity="0.7"/><rect x="38.3" y="20.2" width="1.0" height="1.0" fill="#9a9a9a" opacity="0.7"/><rect x="36.7" y="15.0" width="1.0" height="1.0" fill="#c8c8c8" opacity="0.7"/><rect x="51.1" y="22.8" width="1.0" height="1.0" fill="#9a9a9a" opacity="0.7"/><rect x="43.0" y="28.3" width="1.0" height="1.0" fill="#c8c8c8" opacity="0.7"/><rect x="44.3" y="16.0" width="1.0" height="1.0" fill="#9a9a9a" opacity="0.7"/><rect x="51.9" y="6.5" width="1.0" height="1.0" fill="#505050" opacity="0.7"/><rect x="43.1" y="24.6" width="1.0" height="1.0" fill="#e0e0e0" opacity="0.7"/><rect x="35.3" y="18.3" width="1.0" height="1.0" fill="#505050" opacity="0.7"/><rect x="45.6" y="12.3" width="1.0" height="1.0" fill="#505050" opacity="0.7"/><rect x="44.0" y="11.2" width="1.0" height="1.0" fill="#505050" opacity="0.7"/><rect x="52.7" y="31.5" width="1.0" height="1.0" fill="#9a9a9a" opacity="0.7"/><rect x="46.0" y="9.1" width="1.0" height="1.0" fill="#9a9a9a" opacity="0.7"/><rect x="46.8" y="16.7" width="1.0" height="1.0" fill="#9a9a9a" opacity="0.7"/><rect x="43.9" y="21.6" width="1.0" height="1.0" fill="#9a9a9a" opacity="0.7"/><rect x="40.8" y="22.4" width="1.0" height="1.0" fill="#9a9a9a" opacity="0.7"/><rect x="47.5" y="9.0" width="1.0" height="1.0" fill="#9a9a9a" opacity="0.7"/><rect x="52.6" y="24.8" width="1.0" height="1.0" fill="#e0e0e0" opacity="0.7"/><rect x="51.9" y="9.9" width="1.0" height="1.0" fill="#c8c8c8" opacity="0.7"/><rect x="46.2" y="32.8" width="1.0" height="1.0" fill="#e0e0e0" opacity="0.7"/><rect x="35.5" y="26.3" width="1.0" height="1.0" fill="#c8c8c8" opacity="0.7"/><rect x="47.3" y="12.6" width="1.0" height="1.0" fill="#9a9a9a" opacity="0.7"/><rect x="50.4" y="2.1" width="1.0" height="1.0" fill="#e0e0e0" opacity="0.7"/><rect x="37.8" y="9.2" width="1.0" height="1.0" fill="#c8c8c8" opacity="0.7"/><rect x="42.6" y="26.6" width="1.0" height="1.0" fill="#9a9a9a" opacity="0.7"/><rect x="36.4" y="7.9" width="1.0" height="1.0" fill="#505050" opacity="0.7"/><rect x="41.5" y="4.9" width="1.0" height="1.0" fill="#e0e0e0" opacity="0.7"/><rect x="45.9" y="4.9" width="1.0" height="1.0" fill="#c8c8c8" opacity="0.7"/><rect x="47.9" y="1.5" width="1.0" height="1.0" fill="#9a9a9a" opacity="0.7"/><rect x="43.3" y="30.6" width="1.0" height="1.0" fill="#c8c8c8" opacity="0.7"/><rect x="47.6" y="4.3" width="1.0" height="1.0" fill="#c8c8c8" opacity="0.7"/><rect x="37.9" y="21.5" width="1.0" height="1.0" fill="#505050" opacity="0.7"/><rect x="51.3" y="30.4" width="1.0" height="1.0" fill="#9a9a9a" opacity="0.7"/><rect x="44.0" y="0.7" width="1.0" height="1.0" fill="#e0e0e0" opacity="0.7"/><rect x="49.7" y="6.4" width="1.0" height="1.0" fill="#9a9a9a" opacity="0.7"/><rect x="43.6" y="14.9" width="1.0" height="1.0" fill="#505050" opacity="0.7"/><rect x="43.6" y="19.7" width="1.0" height="1.0" fill="#505050" opacity="0.7"/><rect x="52.6" y="9.7" width="1.0" height="1.0" fill="#c8c8c8" opacity="0.7"/><rect x="36.5" y="29.2" width="1.0" height="1.0" fill="#505050" opacity="0.7"/><rect x="39.9" y="16.1" width="1.0" height="1.0" fill="#9a9a9a" opacity="0.7"/><rect x="51.6" y="1.1" width="1.0" height="1.0" fill="#c8c8c8" opacity="0.7"/><rect x="39.5" y="20.6" width="1.0" height="1.0" fill="#e0e0e0" opacity="0.7"/><rect x="44.6" y="1.1" width="1.0" height="1.0" fill="#e0e0e0" opacity="0.7"/><rect x="41.1" y="1.1" width="1.0" height="1.0" fill="#e0e0e0" opacity="0.7"/><rect x="47.6" y="11.7" width="1.0" height="1.0" fill="#c8c8c8" opacity="0.7"/><rect x="37.8" y="23.0" width="1.0" height="1.0" fill="#9a9a9a" opacity="0.7"/><rect x="44.8" y="15.8" width="1.0" height="1.0" fill="#9a9a9a" opacity="0.7"/><rect x="46.5" y="4.4" width="1.0" height="1.0" fill="#505050" opacity="0.7"/><rect x="44.4" y="1.0" width="1.0" height="1.0" fill="#e0e0e0" opacity="0.7"/><rect x="38.3" y="25.1" width="1.0" height="1.0" fill="#9a9a9a" opacity="0.7"/><rect x="49.3" y="32.1" width="1.0" height="1.0" fill="#e0e0e0" opacity="0.7"/><rect x="42.5" y="5.5" width="1.0" height="1.0" fill="#505050" opacity="0.7"/><rect x="52.9" y="19.1" width="1.0" height="1.0" fill="#c8c8c8" opacity="0.7"/><rect x="49.2" y="19.3" width="1.0" height="1.0" fill="#e0e0e0" opacity="0.7"/><rect x="48.7" y="29.1" width="1.0" height="1.0" fill="#9a9a9a" opacity="0.7"/><rect x="35.2" y="28.7" width="1.0" height="1.0" fill="#e0e0e0" opacity="0.7"/><rect x="47.9" y="21.9" width="1.0" height="1.0" fill="#505050" opacity="0.7"/><rect x="39.9" y="6.3" width="1.0" height="1.0" fill="#e0e0e0" opacity="0.7"/><rect x="38.0" y="21.3" width="1.0" height="1.0" fill="#9a9a9a" opacity="0.7"/><rect x="36.3" y="0.4" width="1.0" height="1.0" fill="#9a9a9a" opacity="0.7"/><rect x="48.7" y="3.9" width="1.0" height="1.0" fill="#c8c8c8" opacity="0.7"/><rect x="47.1" y="20.3" width="1.0" height="1.0" fill="#c8c8c8" opacity="0.7"/><rect x="44.8" y="26.7" width="1.0" height="1.0" fill="#e0e0e0" opacity="0.7"/><rect x="48.7" y="23.4" width="1.0" height="1.0" fill="#505050" opacity="0.7"/><rect x="36.7" y="2.6" width="1.0" height="1.0" fill="#c8c8c8" opacity="0.7"/><rect x="38.0" y="22.5" width="1.0" height="1.0" fill="#c8c8c8" opacity="0.7"/><rect x="52.2" y="23.9" width="1.0" height="1.0" fill="#e0e0e0" opacity="0.7"/><rect x="35.9" y="31.3" width="1.0" height="1.0" fill="#9a9a9a" opacity="0.7"/><rect x="46.7" y="9.8" width="1.0" height="1.0" fill="#9a9a9a" opacity="0.7"/><rect x="39.2" y="27.7" width="1.0" height="1.0" fill="#e0e0e0" opacity="0.7"/><rect x="40.0" y="0.4" width="1.0" height="1.0" fill="#505050" opacity="0.7"/><rect x="49.0" y="3.2" width="1.0" height="1.0" fill="#c8c8c8" opacity="0.7"/><rect x="41.5" y="23.5" width="1.0" height="1.0" fill="#e0e0e0" opacity="0.7"/><rect x="52.1" y="1.0" width="1.0" height="1.0" fill="#505050" opacity="0.7"/><rect x="42.8" y="28.3" width="1.0" height="1.0" fill="#c8c8c8" opacity="0.7"/><rect x="41.2" y="1.0" width="1.0" height="1.0" fill="#505050" opacity="0.7"/><rect x="36.2" y="0.1" width="1.0" height="1.0" fill="#505050" opacity="0.7"/><rect x="36.6" y="20.1" width="1.0" height="1.0" fill="#505050" opacity="0.7"/><rect x="39.1" y="4.3" width="1.0" height="1.0" fill="#e0e0e0" opacity="0.7"/><rect x="39.4" y="22.5" width="1.0" height="1.0" fill="#9a9a9a" opacity="0.7"/><rect x="45.1" y="21.3" width="1.0" height="1.0" fill="#9a9a9a" opacity="0.7"/><rect x="51.7" y="8.6" width="1.0" height="1.0" fill="#505050" opacity="0.7"/><rect x="51.0" y="6.5" width="1.0" height="1.0" fill="#9a9a9a" opacity="0.7"/><rect x="36.9" y="6.0" width="1.0" height="1.0" fill="#c8c8c8" opacity="0.7"/><rect x="52.1" y="27.5" width="1.0" height="1.0" fill="#e0e0e0" opacity="0.7"/><rect x="37.2" y="20.2" width="1.0" height="1.0" fill="#9a9a9a" opacity="0.7"/><rect x="43.8" y="29.6" width="1.0" height="1.0" fill="#9a9a9a" opacity="0.7"/><rect x="38.9" y="21.9" width="1.0" height="1.0" fill="#9a9a9a" opacity="0.7"/><rect x="37.8" y="31.3" width="1.0" height="1.0" fill="#c8c8c8" opacity="0.7"/><rect x="41.1" y="8.6" width="1.0" height="1.0" fill="#e0e0e0" opacity="0.7"/><rect x="40.1" y="20.0" width="1.0" height="1.0" fill="#505050" opacity="0.7"/><rect x="39.0" y="26.5" width="1.0" height="1.0" fill="#e0e0e0" opacity="0.7"/><rect x="36.5" y="21.2" width="1.0" height="1.0" fill="#e0e0e0" opacity="0.7"/><rect x="51.7" y="3.0" width="1.0" height="1.0" fill="#9a9a9a" opacity="0.7"/><rect x="42.4" y="25.6" width="1.0" height="1.0" fill="#e0e0e0" opacity="0.7"/><rect x="44.4" y="32.4" width="1.0" height="1.0" fill="#9a9a9a" opacity="0.7"/><path d="M46.5 0 Q48.5 10 49.5 17 Q51.5 25 52 34 L54.5 34 Q53.5 24 52.5 16 Q50.5 8 49.5 0 Z" fill="#6a92b4" opacity="0.8"/><rect x="21.8" y="25.2" width="1.0" height="1.0" fill="#1e2018" opacity="0.6"/><rect x="29.4" y="26.4" width="1.0" height="1.0" fill="#6e6c4c" opacity="0.6"/><rect x="22.7" y="30.6" width="1.0" height="1.0" fill="#1e2018" opacity="0.6"/><rect x="13.0" y="29.5" width="1.0" height="1.0" fill="#3a3c28" opacity="0.6"/><rect x="19.0" y="19.5" width="1.0" height="1.0" fill="#1e2018" opacity="0.6"/><rect x="25.6" y="13.9" width="1.0" height="1.0" fill="#6e6c4c" opacity="0.6"/><rect x="32.1" y="26.0" width="1.0" height="1.0" fill="#6e6c4c" opacity="0.6"/><rect x="26.7" y="2.4" width="1.0" height="1.0" fill="#3a3c28" opacity="0.6"/><rect x="4.4" y="0.1" width="1.0" height="1.0" fill="#1e2018" opacity="0.6"/><rect x="7.3" y="7.3" width="1.0" height="1.0" fill="#6e6c4c" opacity="0.6"/><rect x="30.5" y="9.8" width="1.0" height="1.0" fill="#6e6c4c" opacity="0.6"/><rect x="18.9" y="23.0" width="1.0" height="1.0" fill="#6e6c4c" opacity="0.6"/><rect x="6.4" y="32.9" width="1.0" height="1.0" fill="#6e6c4c" opacity="0.6"/><rect x="33.8" y="30.4" width="1.0" height="1.0" fill="#8a8a6a" opacity="0.6"/><rect x="0.8" y="14.1" width="1.0" height="1.0" fill="#6e6c4c" opacity="0.6"/><rect x="9.2" y="11.3" width="1.0" height="1.0" fill="#1e2018" opacity="0.6"/><rect x="20.9" y="24.1" width="1.0" height="1.0" fill="#1e2018" opacity="0.6"/><rect x="10.8" y="27.8" width="1.0" height="1.0" fill="#3a3c28" opacity="0.6"/><rect x="24.4" y="6.3" width="1.0" height="1.0" fill="#3a3c28" opacity="0.6"/><rect x="24.7" y="1.9" width="1.0" height="1.0" fill="#1e2018" opacity="0.6"/><rect x="33.2" y="12.2" width="1.0" height="1.0" fill="#3a3c28" opacity="0.6"/><rect x="0.6" y="26.8" width="1.0" height="1.0" fill="#8a8a6a" opacity="0.6"/><rect x="13.2" y="28.6" width="1.0" height="1.0" fill="#3a3c28" opacity="0.6"/><rect x="1.6" y="6.2" width="1.0" height="1.0" fill="#6e6c4c" opacity="0.6"/><rect x="4.2" y="8.4" width="1.0" height="1.0" fill="#3a3c28" opacity="0.6"/><rect x="12.1" y="12.1" width="1.0" height="1.0" fill="#8a8a6a" opacity="0.6"/><rect x="27.1" y="3.7" width="1.0" height="1.0" fill="#8a8a6a" opacity="0.6"/><rect x="30.1" y="1.2" width="1.0" height="1.0" fill="#1e2018" opacity="0.6"/><rect x="7.3" y="17.4" width="1.0" height="1.0" fill="#8a8a6a" opacity="0.6"/><rect x="32.1" y="11.6" width="1.0" height="1.0" fill="#1e2018" opacity="0.6"/><rect x="10.9" y="10.8" width="1.0" height="1.0" fill="#6e6c4c" opacity="0.6"/><rect x="28.0" y="21.3" width="1.0" height="1.0" fill="#8a8a6a" opacity="0.6"/><rect x="34.9" y="5.5" width="1.0" height="1.0" fill="#1e2018" opacity="0.6"/><rect x="2.8" y="20.4" width="1.0" height="1.0" fill="#3a3c28" opacity="0.6"/><rect x="1.1" y="25.2" width="1.0" height="1.0" fill="#8a8a6a" opacity="0.6"/><rect x="28.9" y="15.5" width="1.0" height="1.0" fill="#3a3c28" opacity="0.6"/><rect x="5.1" y="33.3" width="1.0" height="1.0" fill="#1e2018" opacity="0.6"/><rect x="28.1" y="11.4" width="1.0" height="1.0" fill="#6e6c4c" opacity="0.6"/><rect x="4.6" y="24.9" width="1.0" height="1.0" fill="#6e6c4c" opacity="0.6"/><rect x="22.1" y="26.8" width="1.0" height="1.0" fill="#1e2018" opacity="0.6"/><rect x="5.9" y="12.7" width="1.0" height="1.0" fill="#1e2018" opacity="0.6"/><rect x="29.6" y="10.0" width="1.0" height="1.0" fill="#3a3c28" opacity="0.6"/><rect x="32.3" y="21.1" width="1.0" height="1.0" fill="#6e6c4c" opacity="0.6"/><rect x="34.2" y="15.4" width="1.0" height="1.0" fill="#3a3c28" opacity="0.6"/><rect x="24.1" y="10.8" width="1.0" height="1.0" fill="#8a8a6a" opacity="0.6"/><rect x="10.2" y="13.7" width="1.0" height="1.0" fill="#6e6c4c" opacity="0.6"/><rect x="3.9" y="27.9" width="1.0" height="1.0" fill="#6e6c4c" opacity="0.6"/><rect x="21.9" y="17.0" width="1.0" height="1.0" fill="#8a8a6a" opacity="0.6"/><rect x="6.3" y="16.7" width="1.0" height="1.0" fill="#8a8a6a" opacity="0.6"/><rect x="2.2" y="27.0" width="1.0" height="1.0" fill="#8a8a6a" opacity="0.6"/><rect x="24.3" y="22.6" width="1.0" height="1.0" fill="#8a8a6a" opacity="0.6"/><rect x="12.7" y="24.0" width="1.0" height="1.0" fill="#8a8a6a" opacity="0.6"/><rect x="29.2" y="9.0" width="1.0" height="1.0" fill="#8a8a6a" opacity="0.6"/><rect x="33.5" y="11.6" width="1.0" height="1.0" fill="#6e6c4c" opacity="0.6"/><rect x="20.3" y="0.4" width="1.0" height="1.0" fill="#8a8a6a" opacity="0.6"/><rect x="11.4" y="9.3" width="1.0" height="1.0" fill="#8a8a6a" opacity="0.6"/><rect x="28.6" y="22.0" width="1.0" height="1.0" fill="#8a8a6a" opacity="0.6"/><rect x="12.2" y="21.9" width="1.0" height="1.0" fill="#3a3c28" opacity="0.6"/><rect x="12.3" y="28.7" width="1.0" height="1.0" fill="#3a3c28" opacity="0.6"/><rect x="34.2" y="32.5" width="1.0" height="1.0" fill="#6e6c4c" opacity="0.6"/><rect x="18.5" y="5.6" width="1.0" height="1.0" fill="#8a8a6a" opacity="0.6"/><rect x="32.8" y="16.2" width="1.0" height="1.0" fill="#1e2018" opacity="0.6"/><rect x="25.2" y="24.8" width="1.0" height="1.0" fill="#6e6c4c" opacity="0.6"/><rect x="21.6" y="31.8" width="1.0" height="1.0" fill="#3a3c28" opacity="0.6"/><rect x="10.6" y="18.8" width="1.0" height="1.0" fill="#8a8a6a" opacity="0.6"/><rect x="25.2" y="0.9" width="1.0" height="1.0" fill="#6e6c4c" opacity="0.6"/><rect x="20.5" y="21.2" width="1.0" height="1.0" fill="#6e6c4c" opacity="0.6"/><rect x="7.7" y="23.3" width="1.0" height="1.0" fill="#1e2018" opacity="0.6"/><rect x="34.5" y="33.3" width="1.0" height="1.0" fill="#6e6c4c" opacity="0.6"/><rect x="1.9" y="4.5" width="1.0" height="1.0" fill="#8a8a6a" opacity="0.6"/><rect x="33.9" y="16.4" width="1.0" height="1.0" fill="#1e2018" opacity="0.6"/><rect x="14.5" y="11.9" width="1.0" height="1.0" fill="#1e2018" opacity="0.6"/><rect x="20.7" y="8.1" width="1.0" height="1.0" fill="#8a8a6a" opacity="0.6"/><rect x="0.0" y="13.8" width="1.0" height="1.0" fill="#8a8a6a" opacity="0.6"/><rect x="30.0" y="29.5" width="1.0" height="1.0" fill="#8a8a6a" opacity="0.6"/><rect x="33.8" y="18.7" width="1.0" height="1.0" fill="#8a8a6a" opacity="0.6"/><rect x="3.3" y="18.5" width="1.0" height="1.0" fill="#8a8a6a" opacity="0.6"/><rect x="33.3" y="10.0" width="1.0" height="1.0" fill="#8a8a6a" opacity="0.6"/><rect x="28.6" y="14.2" width="1.0" height="1.0" fill="#8a8a6a" opacity="0.6"/><rect x="16.4" y="5.3" width="1.0" height="1.0" fill="#3a3c28" opacity="0.6"/><rect x="19.7" y="32.5" width="1.0" height="1.0" fill="#6e6c4c" opacity="0.6"/><rect x="21.3" y="11.9" width="1.0" height="1.0" fill="#1e2018" opacity="0.6"/><rect x="13.4" y="11.1" width="1.0" height="1.0" fill="#6e6c4c" opacity="0.6"/><rect x="11.4" y="29.8" width="1.0" height="1.0" fill="#3a3c28" opacity="0.6"/><rect x="15.0" y="33.2" width="1.0" height="1.0" fill="#3a3c28" opacity="0.6"/><rect x="10.2" y="33.1" width="1.0" height="1.0" fill="#3a3c28" opacity="0.6"/><rect x="13.4" y="29.1" width="1.0" height="1.0" fill="#6e6c4c" opacity="0.6"/><rect x="20.9" y="8.8" width="1.0" height="1.0" fill="#8a8a6a" opacity="0.6"/><rect x="17.4" y="14.1" width="1.0" height="1.0" fill="#8a8a6a" opacity="0.6"/><rect x="33.1" y="10.5" width="1.0" height="1.0" fill="#8a8a6a" opacity="0.6"/><rect x="5.0" y="0.8" width="1.0" height="1.0" fill="#3a3c28" opacity="0.6"/><rect x="8.6" y="1.4" width="1.0" height="1.0" fill="#6e6c4c" opacity="0.6"/><rect x="28.9" y="0.4" width="1.0" height="1.0" fill="#8a8a6a" opacity="0.6"/><rect x="8.5" y="16.1" width="1.0" height="1.0" fill="#1e2018" opacity="0.6"/><rect x="8.6" y="9.1" width="1.0" height="1.0" fill="#6e6c4c" opacity="0.6"/><rect x="25.3" y="9.7" width="1.0" height="1.0" fill="#3a3c28" opacity="0.6"/><rect x="21.3" y="16.1" width="1.0" height="1.0" fill="#1e2018" opacity="0.6"/><rect x="0.6" y="4.3" width="1.0" height="1.0" fill="#8a8a6a" opacity="0.6"/><rect x="18.7" y="11.4" width="1.0" height="1.0" fill="#8a8a6a" opacity="0.6"/><rect x="25.6" y="0.9" width="1.0" height="1.0" fill="#8a8a6a" opacity="0.6"/><rect x="12.6" y="25.3" width="1.0" height="1.0" fill="#6e6c4c" opacity="0.6"/><rect x="1.3" y="8.6" width="1.0" height="1.0" fill="#3a3c28" opacity="0.6"/><rect x="24.0" y="3.7" width="1.0" height="1.0" fill="#6e6c4c" opacity="0.6"/><rect x="0.5" y="26.5" width="1.0" height="1.0" fill="#3a3c28" opacity="0.6"/><rect x="20.8" y="23.4" width="1.0" height="1.0" fill="#3a3c28" opacity="0.6"/><rect x="30.1" y="28.6" width="1.0" height="1.0" fill="#3a3c28" opacity="0.6"/><rect x="13.7" y="29.0" width="1.0" height="1.0" fill="#6e6c4c" opacity="0.6"/><rect x="31.5" y="15.8" width="1.0" height="1.0" fill="#1e2018" opacity="0.6"/><rect x="10.6" y="0.1" width="1.0" height="1.0" fill="#3a3c28" opacity="0.6"/><rect x="20.4" y="22.0" width="1.0" height="1.0" fill="#3a3c28" opacity="0.6"/><rect x="68.2" y="5.1" width="1.0" height="1.0" fill="#2e3020" opacity="0.6"/><rect x="56.4" y="18.2" width="1.0" height="1.0" fill="#8e8e6a" opacity="0.6"/><rect x="80.4" y="30.9" width="1.0" height="1.0" fill="#7a7850" opacity="0.6"/><rect x="54.8" y="14.7" width="1.0" height="1.0" fill="#2e3020" opacity="0.6"/><rect x="64.3" y="18.7" width="1.0" height="1.0" fill="#2e3020" opacity="0.6"/><rect x="91.9" y="4.2" width="1.0" height="1.0" fill="#7a7850" opacity="0.6"/><rect x="82.6" y="19.8" width="1.0" height="1.0" fill="#2e3020" opacity="0.6"/><rect x="80.1" y="13.5" width="1.0" height="1.0" fill="#7a7850" opacity="0.6"/><rect x="55.2" y="29.2" width="1.0" height="1.0" fill="#8e8e6a" opacity="0.6"/><rect x="72.7" y="18.4" width="1.0" height="1.0" fill="#6c6a48" opacity="0.6"/><rect x="67.5" y="27.7" width="1.0" height="1.0" fill="#7a7850" opacity="0.6"/><rect x="57.8" y="19.4" width="1.0" height="1.0" fill="#7a7850" opacity="0.6"/><rect x="70.5" y="18.6" width="1.0" height="1.0" fill="#2e3020" opacity="0.6"/><rect x="79.5" y="21.0" width="1.0" height="1.0" fill="#3a3c28" opacity="0.6"/><rect x="85.0" y="14.5" width="1.0" height="1.0" fill="#8e8e6a" opacity="0.6"/><rect x="74.9" y="31.4" width="1.0" height="1.0" fill="#8e8e6a" opacity="0.6"/><rect x="67.1" y="27.0" width="1.0" height="1.0" fill="#7a7850" opacity="0.6"/><rect x="56.8" y="10.2" width="1.0" height="1.0" fill="#3a3c28" opacity="0.6"/><rect x="94.1" y="24.8" width="1.0" height="1.0" fill="#8e8e6a" opacity="0.6"/><rect x="81.6" y="2.5" width="1.0" height="1.0" fill="#6c6a48" opacity="0.6"/><rect x="72.7" y="25.7" width="1.0" height="1.0" fill="#7a7850" opacity="0.6"/><rect x="96.9" y="14.3" width="1.0" height="1.0" fill="#2e3020" opacity="0.6"/><rect x="88.9" y="19.5" width="1.0" height="1.0" fill="#8e8e6a" opacity="0.6"/><rect x="69.0" y="11.9" width="1.0" height="1.0" fill="#3a3c28" opacity="0.6"/><rect x="80.3" y="15.5" width="1.0" height="1.0" fill="#2e3020" opacity="0.6"/><rect x="97.4" y="16.1" width="1.0" height="1.0" fill="#2e3020" opacity="0.6"/><rect x="55.9" y="23.9" width="1.0" height="1.0" fill="#6c6a48" opacity="0.6"/><rect x="99.7" y="27.9" width="1.0" height="1.0" fill="#8e8e6a" opacity="0.6"/><rect x="86.7" y="30.2" width="1.0" height="1.0" fill="#8e8e6a" opacity="0.6"/><rect x="54.1" y="15.7" width="1.0" height="1.0" fill="#7a7850" opacity="0.6"/><rect x="81.7" y="16.8" width="1.0" height="1.0" fill="#7a7850" opacity="0.6"/><rect x="89.1" y="4.4" width="1.0" height="1.0" fill="#7a7850" opacity="0.6"/><rect x="71.7" y="31.2" width="1.0" height="1.0" fill="#3a3c28" opacity="0.6"/><rect x="56.8" y="15.3" width="1.0" height="1.0" fill="#6c6a48" opacity="0.6"/><rect x="66.1" y="4.7" width="1.0" height="1.0" fill="#3a3c28" opacity="0.6"/><rect x="93.6" y="9.5" width="1.0" height="1.0" fill="#3a3c28" opacity="0.6"/><rect x="99.4" y="23.2" width="1.0" height="1.0" fill="#3a3c28" opacity="0.6"/><rect x="98.0" y="5.1" width="1.0" height="1.0" fill="#7a7850" opacity="0.6"/><rect x="60.1" y="22.4" width="1.0" height="1.0" fill="#2e3020" opacity="0.6"/><rect x="75.8" y="20.0" width="1.0" height="1.0" fill="#8e8e6a" opacity="0.6"/><rect x="66.3" y="5.0" width="1.0" height="1.0" fill="#6c6a48" opacity="0.6"/><rect x="70.4" y="19.3" width="1.0" height="1.0" fill="#7a7850" opacity="0.6"/><rect x="85.5" y="17.5" width="1.0" height="1.0" fill="#6c6a48" opacity="0.6"/><rect x="83.8" y="25.2" width="1.0" height="1.0" fill="#3a3c28" opacity="0.6"/><rect x="95.3" y="26.5" width="1.0" height="1.0" fill="#6c6a48" opacity="0.6"/><rect x="71.4" y="13.6" width="1.0" height="1.0" fill="#2e3020" opacity="0.6"/><rect x="75.6" y="13.6" width="1.0" height="1.0" fill="#7a7850" opacity="0.6"/><rect x="56.2" y="7.1" width="1.0" height="1.0" fill="#7a7850" opacity="0.6"/><rect x="58.2" y="20.4" width="1.0" height="1.0" fill="#2e3020" opacity="0.6"/><rect x="53.0" y="5.1" width="1.0" height="1.0" fill="#2e3020" opacity="0.6"/><rect x="97.6" y="20.9" width="1.0" height="1.0" fill="#2e3020" opacity="0.6"/><rect x="94.1" y="20.9" width="1.0" height="1.0" fill="#7a7850" opacity="0.6"/><rect x="82.8" y="32.5" width="1.0" height="1.0" fill="#6c6a48" opacity="0.6"/><rect x="70.1" y="4.2" width="1.0" height="1.0" fill="#3a3c28" opacity="0.6"/><rect x="99.7" y="15.8" width="1.0" height="1.0" fill="#3a3c28" opacity="0.6"/><rect x="67.7" y="4.9" width="1.0" height="1.0" fill="#8e8e6a" opacity="0.6"/><rect x="87.8" y="16.3" width="1.0" height="1.0" fill="#7a7850" opacity="0.6"/><rect x="77.3" y="7.0" width="1.0" height="1.0" fill="#6c6a48" opacity="0.6"/><rect x="70.0" y="23.5" width="1.0" height="1.0" fill="#2e3020" opacity="0.6"/><rect x="88.6" y="10.1" width="1.0" height="1.0" fill="#2e3020" opacity="0.6"/><rect x="85.7" y="8.9" width="1.0" height="1.0" fill="#8e8e6a" opacity="0.6"/><rect x="95.7" y="12.1" width="1.0" height="1.0" fill="#7a7850" opacity="0.6"/><rect x="78.0" y="26.5" width="1.0" height="1.0" fill="#8e8e6a" opacity="0.6"/><rect x="82.9" y="20.8" width="1.0" height="1.0" fill="#7a7850" opacity="0.6"/><rect x="90.9" y="27.8" width="1.0" height="1.0" fill="#7a7850" opacity="0.6"/><rect x="62.4" y="16.8" width="1.0" height="1.0" fill="#2e3020" opacity="0.6"/><rect x="99.5" y="26.9" width="1.0" height="1.0" fill="#3a3c28" opacity="0.6"/><rect x="65.2" y="23.5" width="1.0" height="1.0" fill="#8e8e6a" opacity="0.6"/><rect x="74.0" y="31.9" width="1.0" height="1.0" fill="#8e8e6a" opacity="0.6"/><rect x="97.9" y="12.4" width="1.0" height="1.0" fill="#7a7850" opacity="0.6"/><rect x="57.8" y="16.0" width="1.0" height="1.0" fill="#8e8e6a" opacity="0.6"/><rect x="62.6" y="21.2" width="1.0" height="1.0" fill="#6c6a48" opacity="0.6"/><rect x="92.5" y="16.3" width="1.0" height="1.0" fill="#8e8e6a" opacity="0.6"/><rect x="90.6" y="2.9" width="1.0" height="1.0" fill="#2e3020" opacity="0.6"/><rect x="95.8" y="26.6" width="1.0" height="1.0" fill="#7a7850" opacity="0.6"/><rect x="75.5" y="6.1" width="1.0" height="1.0" fill="#8e8e6a" opacity="0.6"/><rect x="57.1" y="32.2" width="1.0" height="1.0" fill="#3a3c28" opacity="0.6"/><rect x="74.8" y="25.3" width="1.0" height="1.0" fill="#2e3020" opacity="0.6"/><rect x="87.1" y="5.8" width="1.0" height="1.0" fill="#7a7850" opacity="0.6"/><rect x="54.3" y="20.1" width="1.0" height="1.0" fill="#3a3c28" opacity="0.6"/><rect x="90.9" y="5.0" width="1.0" height="1.0" fill="#6c6a48" opacity="0.6"/><rect x="99.1" y="22.3" width="1.0" height="1.0" fill="#8e8e6a" opacity="0.6"/><rect x="60.3" y="18.6" width="1.0" height="1.0" fill="#2e3020" opacity="0.6"/><rect x="53.7" y="33.0" width="1.0" height="1.0" fill="#2e3020" opacity="0.6"/><rect x="77.7" y="31.7" width="1.0" height="1.0" fill="#3a3c28" opacity="0.6"/><rect x="99.4" y="6.6" width="1.0" height="1.0" fill="#7a7850" opacity="0.6"/><rect x="54.3" y="7.2" width="1.0" height="1.0" fill="#6c6a48" opacity="0.6"/><rect x="64.3" y="19.9" width="1.0" height="1.0" fill="#8e8e6a" opacity="0.6"/><rect x="78.6" y="28.4" width="1.0" height="1.0" fill="#2e3020" opacity="0.6"/><rect x="95.8" y="12.0" width="1.0" height="1.0" fill="#3a3c28" opacity="0.6"/><rect x="84.1" y="27.7" width="1.0" height="1.0" fill="#6c6a48" opacity="0.6"/><rect x="72.8" y="31.2" width="1.0" height="1.0" fill="#6c6a48" opacity="0.6"/><rect x="59.1" y="5.2" width="1.0" height="1.0" fill="#6c6a48" opacity="0.6"/><rect x="53.9" y="15.0" width="1.0" height="1.0" fill="#7a7850" opacity="0.6"/><rect x="81.6" y="26.4" width="1.0" height="1.0" fill="#7a7850" opacity="0.6"/><rect x="61.1" y="16.1" width="1.0" height="1.0" fill="#2e3020" opacity="0.6"/><rect x="79.2" y="11.1" width="1.0" height="1.0" fill="#6c6a48" opacity="0.6"/><rect x="77.9" y="16.4" width="1.0" height="1.0" fill="#2e3020" opacity="0.6"/><rect x="94.5" y="1.9" width="1.0" height="1.0" fill="#7a7850" opacity="0.6"/><rect x="66.0" y="26.3" width="1.0" height="1.0" fill="#6c6a48" opacity="0.6"/><rect x="74.3" y="0.9" width="1.0" height="1.0" fill="#2e3020" opacity="0.6"/><rect x="73.8" y="20.8" width="1.0" height="1.0" fill="#6c6a48" opacity="0.6"/><rect x="81.5" y="6.8" width="1.0" height="1.0" fill="#8e8e6a" opacity="0.6"/><rect x="74.3" y="18.1" width="1.0" height="1.0" fill="#3a3c28" opacity="0.6"/><rect x="76.9" y="8.4" width="1.0" height="1.0" fill="#6c6a48" opacity="0.6"/><rect x="94.2" y="32.0" width="1.0" height="1.0" fill="#8e8e6a" opacity="0.6"/><rect x="96.4" y="30.4" width="1.0" height="1.0" fill="#7a7850" opacity="0.6"/><rect x="92.5" y="4.7" width="1.0" height="1.0" fill="#2e3020" opacity="0.6"/><rect x="71.4" y="10.7" width="1.0" height="1.0" fill="#7a7850" opacity="0.6"/><rect x="73.1" y="7.2" width="1.0" height="1.0" fill="#8e8e6a" opacity="0.6"/><rect x="89.8" y="30.5" width="1.0" height="1.0" fill="#7a7850" opacity="0.6"/><rect x="97.2" y="21.9" width="1.0" height="1.0" fill="#8e8e6a" opacity="0.6"/><rect x="59.7" y="30.0" width="1.0" height="1.0" fill="#3a3c28" opacity="0.6"/><rect x="63.3" y="32.4" width="1.0" height="1.0" fill="#3a3c28" opacity="0.6"/><rect x="94.6" y="5.5" width="1.0" height="1.0" fill="#7a7850" opacity="0.6"/><rect x="60.6" y="14.7" width="1.0" height="1.0" fill="#6c6a48" opacity="0.6"/><rect x="72.0" y="14.3" width="1.0" height="1.0" fill="#8e8e6a" opacity="0.6"/><rect x="68.0" y="24.6" width="1.0" height="1.0" fill="#2e3020" opacity="0.6"/><rect x="68.9" y="15.6" width="1.0" height="1.0" fill="#2e3020" opacity="0.6"/><rect x="71.1" y="17.6" width="1.0" height="1.0" fill="#8e8e6a" opacity="0.6"/><rect x="77.1" y="2.2" width="1.0" height="1.0" fill="#7a7850" opacity="0.6"/><rect x="98.7" y="3.6" width="1.0" height="1.0" fill="#8e8e6a" opacity="0.6"/><rect x="65.8" y="30.8" width="1.0" height="1.0" fill="#7a7850" opacity="0.6"/><rect x="65.7" y="4.4" width="1.0" height="1.0" fill="#3a3c28" opacity="0.6"/><rect x="92.9" y="23.0" width="1.0" height="1.0" fill="#8e8e6a" opacity="0.6"/><rect x="72.1" y="18.2" width="1.0" height="1.0" fill="#6c6a48" opacity="0.6"/><rect x="79.8" y="23.8" width="1.0" height="1.0" fill="#2e3020" opacity="0.6"/><rect x="66.1" y="27.2" width="1.0" height="1.0" fill="#7a7850" opacity="0.6"/><rect x="73.0" y="2.5" width="1.0" height="1.0" fill="#2e3020" opacity="0.6"/><rect x="82.8" y="27.3" width="1.0" height="1.0" fill="#2e3020" opacity="0.6"/><rect x="81.6" y="7.6" width="1.0" height="1.0" fill="#8e8e6a" opacity="0.6"/><rect x="93.6" y="15.4" width="1.0" height="1.0" fill="#8e8e6a" opacity="0.6"/><rect x="99.7" y="14.2" width="1.0" height="1.0" fill="#8e8e6a" opacity="0.6"/><rect x="82.2" y="1.5" width="1.0" height="1.0" fill="#7a7850" opacity="0.6"/><rect x="97.1" y="33.0" width="1.0" height="1.0" fill="#8e8e6a" opacity="0.6"/><rect x="55.4" y="6.9" width="1.0" height="1.0" fill="#8e8e6a" opacity="0.6"/><rect x="82.5" y="18.1" width="1.0" height="1.0" fill="#7a7850" opacity="0.6"/><rect x="66.6" y="17.0" width="1.0" height="1.0" fill="#7a7850" opacity="0.6"/><rect x="65.7" y="27.3" width="1.0" height="1.0" fill="#8e8e6a" opacity="0.6"/><rect x="54.7" y="0.6" width="1.0" height="1.0" fill="#6c6a48" opacity="0.6"/><rect x="78.9" y="6.4" width="1.0" height="1.0" fill="#3a3c28" opacity="0.6"/><rect x="64.5" y="15.2" width="1.0" height="1.0" fill="#3a3c28" opacity="0.6"/><rect x="83.9" y="18.6" width="1.0" height="1.0" fill="#3a3c28" opacity="0.6"/><rect x="98.6" y="10.5" width="1.0" height="1.0" fill="#7a7850" opacity="0.6"/><rect x="99.2" y="11.7" width="1.0" height="1.0" fill="#7a7850" opacity="0.6"/><rect x="72.0" y="11.8" width="1.0" height="1.0" fill="#2e3020" opacity="0.6"/><rect x="92.3" y="0.5" width="1.0" height="1.0" fill="#8e8e6a" opacity="0.6"/><rect x="73.2" y="1.9" width="1.0" height="1.0" fill="#3a3c28" opacity="0.6"/><rect x="93.9" y="22.8" width="1.0" height="1.0" fill="#8e8e6a" opacity="0.6"/><rect x="81.1" y="23.6" width="1.0" height="1.0" fill="#2e3020" opacity="0.6"/><rect x="74.6" y="5.4" width="1.0" height="1.0" fill="#3a3c28" opacity="0.6"/><rect x="53.2" y="12.4" width="1.0" height="1.0" fill="#8e8e6a" opacity="0.6"/><rect x="98.7" y="18.6" width="1.0" height="1.0" fill="#7a7850" opacity="0.6"/><rect x="54.6" y="30.0" width="1.0" height="1.0" fill="#7a7850" opacity="0.6"/><rect x="69.8" y="0.0" width="1.0" height="1.0" fill="#3a3c28" opacity="0.6"/><rect x="56.9" y="9.5" width="1.0" height="1.0" fill="#7a7850" opacity="0.6"/><rect x="64.7" y="26.4" width="1.0" height="1.0" fill="#2e3020" opacity="0.6"/><rect x="65.4" y="3.1" width="1.0" height="1.0" fill="#3a3c28" opacity="0.6"/><rect x="80.6" y="13.4" width="1.0" height="1.0" fill="#8e8e6a" opacity="0.6"/><rect x="67.3" y="7.9" width="1.0" height="1.0" fill="#6c6a48" opacity="0.6"/><rect x="98.0" y="29.0" width="1.0" height="1.0" fill="#7a7850" opacity="0.6"/><rect x="83.9" y="24.3" width="1.0" height="1.0" fill="#6c6a48" opacity="0.6"/><rect x="71.3" y="11.1" width="1.0" height="1.0" fill="#3a3c28" opacity="0.6"/><rect x="60.0" y="24.6" width="1.0" height="1.0" fill="#7a7850" opacity="0.6"/><rect x="55.1" y="28.4" width="1.0" height="1.0" fill="#6c6a48" opacity="0.6"/><rect x="82.5" y="25.0" width="1.0" height="1.0" fill="#6c6a48" opacity="0.6"/><rect x="59.5" y="17.8" width="1.0" height="1.0" fill="#6c6a48" opacity="0.6"/><rect x="79.7" y="27.6" width="1.0" height="1.0" fill="#2e3020" opacity="0.6"/><rect x="91.8" y="19.9" width="1.0" height="1.0" fill="#7a7850" opacity="0.6"/><rect x="57.0" y="1.4" width="1.0" height="1.0" fill="#8e8e6a" opacity="0.6"/><rect x="98.1" y="12.8" width="1.0" height="1.0" fill="#3a3c28" opacity="0.6"/><rect x="79.3" y="21.3" width="1.0" height="1.0" fill="#6c6a48" opacity="0.6"/><rect x="85.0" y="16.6" width="1.0" height="1.0" fill="#2e3020" opacity="0.6"/><rect x="74.5" y="2.4" width="1.0" height="1.0" fill="#6c6a48" opacity="0.6"/><rect x="95.2" y="3.1" width="1.0" height="1.0" fill="#6c6a48" opacity="0.6"/><rect x="56.1" y="25.1" width="1.0" height="1.0" fill="#8e8e6a" opacity="0.6"/><rect x="91.0" y="28.8" width="1.0" height="1.0" fill="#7a7850" opacity="0.6"/><rect x="87.3" y="7.0" width="1.0" height="1.0" fill="#3a3c28" opacity="0.6"/><rect x="76.2" y="13.0" width="1.0" height="1.0" fill="#3a3c28" opacity="0.6"/><rect x="95.8" y="9.8" width="1.0" height="1.0" fill="#2e3020" opacity="0.6"/><rect x="82.0" y="21.9" width="1.0" height="1.0" fill="#2e3020" opacity="0.6"/><rect x="81.2" y="11.3" width="1.0" height="1.0" fill="#8e8e6a" opacity="0.6"/><rect x="82.2" y="4.5" width="1.0" height="1.0" fill="#3a3c28" opacity="0.6"/><rect x="55.9" y="9.1" width="1.0" height="1.0" fill="#2e3020" opacity="0.6"/><rect x="85.5" y="23.0" width="1.0" height="1.0" fill="#8e8e6a" opacity="0.6"/><rect x="86.3" y="9.7" width="1.0" height="1.0" fill="#3a3c28" opacity="0.6"/><rect x="74.9" y="4.0" width="1.0" height="1.0" fill="#6c6a48" opacity="0.6"/><rect x="62.4" y="33.3" width="1.0" height="1.0" fill="#3a3c28" opacity="0.6"/><rect x="53.8" y="15.6" width="1.0" height="1.0" fill="#6c6a48" opacity="0.6"/><rect x="98.5" y="15.3" width="1.0" height="1.0" fill="#8e8e6a" opacity="0.6"/><rect x="71.2" y="31.2" width="1.0" height="1.0" fill="#7a7850" opacity="0.6"/><rect x="56.5" y="3.1" width="1.0" height="1.0" fill="#6c6a48" opacity="0.6"/><rect x="65.3" y="12.2" width="1.0" height="1.0" fill="#6c6a48" opacity="0.6"/><rect x="91.6" y="17.3" width="1.0" height="1.0" fill="#2e3020" opacity="0.6"/><rect x="86.1" y="7.9" width="1.0" height="1.0" fill="#3a3c28" opacity="0.6"/><rect x="71.5" y="5.4" width="1.0" height="1.0" fill="#3a3c28" opacity="0.6"/><rect x="85.0" y="13.8" width="1.0" height="1.0" fill="#7a7850" opacity="0.6"/><rect x="72.6" y="12.8" width="1.0" height="1.0" fill="#2e3020" opacity="0.6"/><rect x="92.5" y="0.1" width="1.0" height="1.0" fill="#8e8e6a" opacity="0.6"/><rect x="92.4" y="4.1" width="1.0" height="1.0" fill="#7a7850" opacity="0.6"/><rect x="0" y="0" width="1.2" height="34" fill="#6a6a6a"/></svg><div class="a" style="left:396.5px;top:559.2px;width:11.8px;height:11px;background:#6a6a6a;border:1px solid #b0b0b0"></div><div class="t" style="left:398.8px;top:559.8000000000001px;font-size:10px;font-style:italic;color:#1e1e1e;font-family:'Liberation Serif'">fx</div><div class="t" style="left:414.60px;top:560.33px;font-size:10.43px;font-weight:400;color:#12123e;transform:scaleX(0.8423);transform-origin:0 0;">DJI_MavicPro1.MOV</div><div class="a" style="left:242.7px;top:610px;width:277.3px;height:61px;background:#709cd5"></div><div class="a" style="left:347.3px;top:610px;width:7px;height:15.5px;background:#e4e6e8"></div><div class="a" style="left:242.7px;top:625.8px;width:277.3px;height:1.6px;background:#cfd3d8"></div><div class="a" style="left:242.7px;top:627.4px;width:277.3px;height:1px;background:#3c4a5c"></div><div class="a" style="left:242.7px;top:628px;width:115.30000000000001px;height:43px;background:#000"></div><div class="a" style="left:354.3px;top:610px;width:3.7px;height:61px;background:#000"></div><svg class="a" style="left:246px;top:628.5px" width="108.3" height="42" viewBox="0 0 108 42" preserveAspectRatio="none"><defs><linearGradient id="sl" x1="0" x2="1"><stop offset="0" stop-color="#767676"/><stop offset="1" stop-color="#a2a2a2"/></linearGradient><linearGradient id="sk" x1="0" x2="0" y1="0" y2="1"><stop offset="0" stop-color="#6a9ed6"/><stop offset="1" stop-color="#2f6cc0"/></linearGradient></defs><rect width="108" height="42" fill="#d2d6da"/><rect x="73.7" y="22.9" width="2" height="2" fill="#eceef0" opacity="0.6"/><rect x="104.2" y="19.9" width="2" height="2" fill="#c0c4c8" opacity="0.6"/><rect x="65.9" y="0.6" width="2" height="2" fill="#eceef0" opacity="0.6"/><rect x="74.7" y="9.8" width="2" height="2" fill="#c0c4c8" opacity="0.6"/><rect x="84.2" y="35.1" width="2" height="2" fill="#eceef0" opacity="0.6"/><rect x="80.9" y="36.2" width="2" height="2" fill="#b4b8bc" opacity="0.6"/><rect x="91.6" y="36.5" width="2" height="2" fill="#c0c4c8" opacity="0.6"/><rect x="80.5" y="0.6" width="2" height="2" fill="#b4b8bc" opacity="0.6"/><rect x="70.2" y="40.2" width="2" height="2" fill="#b4b8bc" opacity="0.6"/><rect x="76.6" y="1.3" width="2" height="2" fill="#eceef0" opacity="0.6"/><rect x="84.3" y="30.2" width="2" height="2" fill="#eceef0" opacity="0.6"/><rect x="95.1" y="38.7" width="2" height="2" fill="#eceef0" opacity="0.6"/><rect x="95.8" y="24.2" width="2" height="2" fill="#b4b8bc" opacity="0.6"/><rect x="102.5" y="4.1" width="2" height="2" fill="#b4b8bc" opacity="0.6"/><rect x="85.3" y="10.8" width="2" height="2" fill="#c0c4c8" opacity="0.6"/><rect x="82.6" y="26.3" width="2" height="2" fill="#eceef0" opacity="0.6"/><rect x="82.0" y="35.0" width="2" height="2" fill="#c0c4c8" opacity="0.6"/><rect x="78.8" y="24.6" width="2" height="2" fill="#c0c4c8" opacity="0.6"/><rect x="73.5" y="14.1" width="2" height="2" fill="#b4b8bc" opacity="0.6"/><rect x="101.5" y="41.6" width="2" height="2" fill="#c0c4c8" opacity="0.6"/><rect x="94.3" y="29.3" width="2" height="2" fill="#eceef0" opacity="0.6"/><rect x="106.4" y="38.0" width="2" height="2" fill="#c0c4c8" opacity="0.6"/><rect x="67.7" y="27.5" width="2" height="2" fill="#c0c4c8" opacity="0.6"/><rect x="100.4" y="24.1" width="2" height="2" fill="#eceef0" opacity="0.6"/><rect x="68.6" y="20.2" width="2" height="2" fill="#c0c4c8" opacity="0.6"/><rect x="107.5" y="3.7" width="2" height="2" fill="#b4b8bc" opacity="0.6"/><rect x="81.5" y="6.3" width="2" height="2" fill="#eceef0" opacity="0.6"/><rect x="82.2" y="17.4" width="2" height="2" fill="#b4b8bc" opacity="0.6"/><rect x="65.0" y="25.8" width="2" height="2" fill="#b4b8bc" opacity="0.6"/><rect x="80.0" y="24.6" width="2" height="2" fill="#c0c4c8" opacity="0.6"/><rect x="102.6" y="41.2" width="2" height="2" fill="#c0c4c8" opacity="0.6"/><rect x="73.6" y="1.5" width="2" height="2" fill="#b4b8bc" opacity="0.6"/><rect x="66.5" y="25.2" width="2" height="2" fill="#b4b8bc" opacity="0.6"/><rect x="105.7" y="40.8" width="2" height="2" fill="#eceef0" opacity="0.6"/><rect x="90.5" y="6.6" width="2" height="2" fill="#b4b8bc" opacity="0.6"/><rect x="107.1" y="14.3" width="2" height="2" fill="#eceef0" opacity="0.6"/><rect x="106.1" y="37.7" width="2" height="2" fill="#eceef0" opacity="0.6"/><rect x="80.0" y="36.5" width="2" height="2" fill="#eceef0" opacity="0.6"/><rect x="92.0" y="25.0" width="2" height="2" fill="#c0c4c8" opacity="0.6"/><rect x="67.6" y="40.9" width="2" height="2" fill="#c0c4c8" opacity="0.6"/><rect x="75.2" y="26.6" width="2" height="2" fill="#c0c4c8" opacity="0.6"/><rect x="73.7" y="12.6" width="2" height="2" fill="#eceef0" opacity="0.6"/><rect x="86.5" y="23.0" width="2" height="2" fill="#b4b8bc" opacity="0.6"/><rect x="98.5" y="41.5" width="2" height="2" fill="#eceef0" opacity="0.6"/><rect x="63.9" y="25.9" width="2" height="2" fill="#c0c4c8" opacity="0.6"/><rect x="69.0" y="26.6" width="2" height="2" fill="#eceef0" opacity="0.6"/><rect x="84.0" y="28.5" width="2" height="2" fill="#eceef0" opacity="0.6"/><rect x="90.4" y="11.7" width="2" height="2" fill="#eceef0" opacity="0.6"/><rect x="64.0" y="2.5" width="2" height="2" fill="#c0c4c8" opacity="0.6"/><rect x="64.0" y="15.5" width="2" height="2" fill="#c0c4c8" opacity="0.6"/><rect x="83.5" y="24.9" width="2" height="2" fill="#eceef0" opacity="0.6"/><rect x="71.0" y="7.8" width="2" height="2" fill="#eceef0" opacity="0.6"/><rect x="101.0" y="11.1" width="2" height="2" fill="#eceef0" opacity="0.6"/><rect x="67.7" y="34.1" width="2" height="2" fill="#c0c4c8" opacity="0.6"/><rect x="93.8" y="5.5" width="2" height="2" fill="#c0c4c8" opacity="0.6"/><rect x="73.0" y="33.8" width="2" height="2" fill="#b4b8bc" opacity="0.6"/><rect x="77.8" y="28.5" width="2" height="2" fill="#c0c4c8" opacity="0.6"/><rect x="94.4" y="4.3" width="2" height="2" fill="#eceef0" opacity="0.6"/><rect x="105.7" y="28.3" width="2" height="2" fill="#b4b8bc" opacity="0.6"/><rect x="82.7" y="35.9" width="2" height="2" fill="#b4b8bc" opacity="0.6"/><rect x="66.6" y="31.2" width="2" height="2" fill="#b4b8bc" opacity="0.6"/><rect x="102.8" y="18.9" width="2" height="2" fill="#b4b8bc" opacity="0.6"/><rect x="98.4" y="1.4" width="2" height="2" fill="#b4b8bc" opacity="0.6"/><rect x="77.2" y="35.1" width="2" height="2" fill="#c0c4c8" opacity="0.6"/><rect x="71.3" y="11.7" width="2" height="2" fill="#c0c4c8" opacity="0.6"/><rect x="66.8" y="26.0" width="2" height="2" fill="#c0c4c8" opacity="0.6"/><rect x="68.8" y="12.3" width="2" height="2" fill="#eceef0" opacity="0.6"/><rect x="83.9" y="26.6" width="2" height="2" fill="#eceef0" opacity="0.6"/><rect x="81.9" y="17.2" width="2" height="2" fill="#eceef0" opacity="0.6"/><rect x="70.0" y="0.2" width="2" height="2" fill="#c0c4c8" opacity="0.6"/><path d="M0 0 H46 L26 16 L0 27 Z" fill="url(#sk)"/><path d="M42.7 0 H63 L69 22.5 H12 Z" fill="url(#sl)"/><path d="M0 26 L57 27 V42 H0 Z" fill="#bec2c6"/><path d="M12 19.5 L89 25.5 V30.5 L12 24.5 Z" fill="#3a4256"/><path d="M60 28 H84 L78 33 L62 33 Z" fill="#8a8a80"/><path d="M28 30 L57 33.5 V40.2 L31 38.8 Z" fill="#1d3db2"/><path d="M10 36 L34 41 V42 H10 Z" fill="#2446b0"/><path d="M0 33.8 H50 V36.6 H0 Z" fill="#6ab52e"/><path d="M27.4 0 V34" stroke="#c6c6be" stroke-width="1.1"/><path d="M0 7 L68 26 M0 12 L52 27 M2 18 L40 28" stroke="#2a2a2a" stroke-width="0.6" stroke-dasharray="1.2 0.8"/><path d="M22 42 L40 24" stroke="#d8d8d0" stroke-width="0.9"/><path d="M0 26 L6 22 L8 42 H0 Z" fill="#9aa0a6" opacity="0.7"/></svg><div class="a" style="left:252.2px;top:613.2px;width:11.8px;height:11px;background:#6a6a6a;border:1px solid #b0b0b0"></div><div class="t" style="left:254.5px;top:613.8000000000001px;font-size:10px;font-style:italic;color:#1e1e1e;font-family:'Liberation Serif'">fx</div><div class="t" style="left:270.80px;top:614.23px;font-size:10.43px;font-weight:400;color:#0e1838;transform:scaleX(0.8428);transform-origin:0 0;">DJI_0233.MP4 [V]</div><div class="a" style="left:520px;top:610px;width:279.20000000000005px;height:61px;background:#709cd5"></div><div class="a" style="left:626.2px;top:610px;width:7px;height:15.5px;background:#e4e6e8"></div><div class="a" style="left:520px;top:625.8px;width:279.20000000000005px;height:1.6px;background:#cfd3d8"></div><div class="a" style="left:520px;top:627.4px;width:279.20000000000005px;height:1px;background:#3c4a5c"></div><div class="a" style="left:521.3000000000001px;top:628px;width:115.60000000000002px;height:43px;background:#000"></div><div class="a" style="left:633.2px;top:610px;width:3.7px;height:61px;background:#000"></div><svg class="a" style="left:524.6px;top:628.5px" width="108.6" height="42" viewBox="0 0 108 42" preserveAspectRatio="none"><rect width="108" height="42" fill="#96999c"/><rect x="71.5" y="15.7" width="1.0" height="1.0" fill="#50545a" opacity="0.6"/><rect x="52.7" y="28.4" width="1.0" height="1.0" fill="#eef0f2" opacity="0.6"/><rect x="74.2" y="37.7" width="1.0" height="1.0" fill="#d8dcdf" opacity="0.6"/><rect x="62.7" y="39.3" width="1.0" height="1.0" fill="#d8dcdf" opacity="0.6"/><rect x="89.5" y="7.1" width="1.0" height="1.0" fill="#6e7276" opacity="0.6"/><rect x="104.7" y="17.7" width="1.0" height="1.0" fill="#50545a" opacity="0.6"/><rect x="56.2" y="4.7" width="1.0" height="1.0" fill="#b8bcc0" opacity="0.6"/><rect x="99.3" y="41.6" width="1.0" height="1.0" fill="#d8dcdf" opacity="0.6"/><rect x="92.6" y="16.1" width="1.0" height="1.0" fill="#d8dcdf" opacity="0.6"/><rect x="102.5" y="8.6" width="1.0" height="1.0" fill="#50545a" opacity="0.6"/><rect x="89.3" y="17.7" width="1.0" height="1.0" fill="#d8dcdf" opacity="0.6"/><rect x="92.5" y="38.3" width="1.0" height="1.0" fill="#6e7276" opacity="0.6"/><rect x="59.1" y="34.0" width="1.0" height="1.0" fill="#50545a" opacity="0.6"/><rect x="88.2" y="0.2" width="1.0" height="1.0" fill="#6e7276" opacity="0.6"/><rect x="43.7" y="15.9" width="1.0" height="1.0" fill="#6e7276" opacity="0.6"/><rect x="49.5" y="9.9" width="1.0" height="1.0" fill="#d8dcdf" opacity="0.6"/><rect x="105.6" y="0.2" width="1.0" height="1.0" fill="#b8bcc0" opacity="0.6"/><rect x="53.4" y="35.8" width="1.0" height="1.0" fill="#eef0f2" opacity="0.6"/><rect x="40.6" y="3.5" width="1.0" height="1.0" fill="#b8bcc0" opacity="0.6"/><rect x="102.4" y="21.0" width="1.0" height="1.0" fill="#b8bcc0" opacity="0.6"/><rect x="73.8" y="38.7" width="1.0" height="1.0" fill="#6e7276" opacity="0.6"/><rect x="44.7" y="8.1" width="1.0" height="1.0" fill="#d8dcdf" opacity="0.6"/><rect x="87.7" y="6.1" width="1.0" height="1.0" fill="#b8bcc0" opacity="0.6"/><rect x="88.9" y="1.7" width="1.0" height="1.0" fill="#eef0f2" opacity="0.6"/><rect x="77.7" y="25.5" width="1.0" height="1.0" fill="#50545a" opacity="0.6"/><rect x="90.7" y="30.9" width="1.0" height="1.0" fill="#b8bcc0" opacity="0.6"/><rect x="107.9" y="5.1" width="1.0" height="1.0" fill="#6e7276" opacity="0.6"/><rect x="104.7" y="9.9" width="1.0" height="1.0" fill="#b8bcc0" opacity="0.6"/><rect x="74.3" y="30.9" width="1.0" height="1.0" fill="#b8bcc0" opacity="0.6"/><rect x="80.1" y="32.5" width="1.0" height="1.0" fill="#d8dcdf" opacity="0.6"/><rect x="99.0" y="4.6" width="1.0" height="1.0" fill="#b8bcc0" opacity="0.6"/><rect x="64.9" y="8.8" width="1.0" height="1.0" fill="#50545a" opacity="0.6"/><rect x="107.1" y="24.1" width="1.0" height="1.0" fill="#d8dcdf" opacity="0.6"/><rect x="65.8" y="25.5" width="1.0" height="1.0" fill="#d8dcdf" opacity="0.6"/><rect x="69.5" y="9.0" width="1.0" height="1.0" fill="#6e7276" opacity="0.6"/><rect x="58.3" y="34.2" width="1.0" height="1.0" fill="#eef0f2" opacity="0.6"/><rect x="82.8" y="4.3" width="1.0" height="1.0" fill="#d8dcdf" opacity="0.6"/><rect x="41.7" y="32.8" width="1.0" height="1.0" fill="#6e7276" opacity="0.6"/><rect x="73.8" y="29.8" width="1.0" height="1.0" fill="#50545a" opacity="0.6"/><rect x="78.5" y="2.8" width="1.0" height="1.0" fill="#50545a" opacity="0.6"/><rect x="46.5" y="32.0" width="1.0" height="1.0" fill="#b8bcc0" opacity="0.6"/><rect x="65.4" y="36.1" width="1.0" height="1.0" fill="#eef0f2" opacity="0.6"/><rect x="49.5" y="12.2" width="1.0" height="1.0" fill="#eef0f2" opacity="0.6"/><rect x="42.0" y="39.5" width="1.0" height="1.0" fill="#50545a" opacity="0.6"/><rect x="57.9" y="6.9" width="1.0" height="1.0" fill="#d8dcdf" opacity="0.6"/><rect x="81.2" y="0.5" width="1.0" height="1.0" fill="#d8dcdf" opacity="0.6"/><rect x="70.6" y="33.0" width="1.0" height="1.0" fill="#eef0f2" opacity="0.6"/><rect x="81.6" y="40.6" width="1.0" height="1.0" fill="#eef0f2" opacity="0.6"/><rect x="59.4" y="20.2" width="1.0" height="1.0" fill="#eef0f2" opacity="0.6"/><rect x="49.3" y="3.6" width="1.0" height="1.0" fill="#b8bcc0" opacity="0.6"/><rect x="60.1" y="5.0" width="1.0" height="1.0" fill="#6e7276" opacity="0.6"/><rect x="70.7" y="29.6" width="1.0" height="1.0" fill="#6e7276" opacity="0.6"/><rect x="80.0" y="33.7" width="1.0" height="1.0" fill="#eef0f2" opacity="0.6"/><rect x="92.5" y="37.0" width="1.0" height="1.0" fill="#6e7276" opacity="0.6"/><rect x="63.7" y="38.8" width="1.0" height="1.0" fill="#eef0f2" opacity="0.6"/><rect x="76.0" y="7.3" width="1.0" height="1.0" fill="#d8dcdf" opacity="0.6"/><rect x="51.0" y="33.2" width="1.0" height="1.0" fill="#d8dcdf" opacity="0.6"/><rect x="53.8" y="19.9" width="1.0" height="1.0" fill="#b8bcc0" opacity="0.6"/><rect x="78.0" y="16.3" width="1.0" height="1.0" fill="#50545a" opacity="0.6"/><rect x="77.3" y="24.9" width="1.0" height="1.0" fill="#eef0f2" opacity="0.6"/><rect x="76.4" y="39.5" width="1.0" height="1.0" fill="#d8dcdf" opacity="0.6"/><rect x="79.5" y="24.6" width="1.0" height="1.0" fill="#6e7276" opacity="0.6"/><rect x="77.0" y="22.0" width="1.0" height="1.0" fill="#b8bcc0" opacity="0.6"/><rect x="83.6" y="33.4" width="1.0" height="1.0" fill="#b8bcc0" opacity="0.6"/><rect x="76.9" y="12.6" width="1.0" height="1.0" fill="#50545a" opacity="0.6"/><rect x="89.0" y="4.3" width="1.0" height="1.0" fill="#6e7276" opacity="0.6"/><rect x="70.8" y="20.6" width="1.0" height="1.0" fill="#d8dcdf" opacity="0.6"/><rect x="86.2" y="1.2" width="1.0" height="1.0" fill="#50545a" opacity="0.6"/><rect x="99.8" y="9.7" width="1.0" height="1.0" fill="#b8bcc0" opacity="0.6"/><rect x="82.5" y="36.8" width="1.0" height="1.0" fill="#d8dcdf" opacity="0.6"/><rect x="82.3" y="3.6" width="1.0" height="1.0" fill="#d8dcdf" opacity="0.6"/><rect x="86.1" y="17.1" width="1.0" height="1.0" fill="#d8dcdf" opacity="0.6"/><rect x="45.5" y="1.4" width="1.0" height="1.0" fill="#50545a" opacity="0.6"/><rect x="45.7" y="1.3" width="1.0" height="1.0" fill="#b8bcc0" opacity="0.6"/><rect x="72.0" y="22.5" width="1.0" height="1.0" fill="#d8dcdf" opacity="0.6"/><rect x="87.8" y="3.2" width="1.0" height="1.0" fill="#d8dcdf" opacity="0.6"/><rect x="93.2" y="0.4" width="1.0" height="1.0" fill="#6e7276" opacity="0.6"/><rect x="80.1" y="41.0" width="1.0" height="1.0" fill="#6e7276" opacity="0.6"/><rect x="96.6" y="4.5" width="1.0" height="1.0" fill="#eef0f2" opacity="0.6"/><rect x="85.6" y="19.0" width="1.0" height="1.0" fill="#50545a" opacity="0.6"/><rect x="53.1" y="9.3" width="1.0" height="1.0" fill="#d8dcdf" opacity="0.6"/><rect x="43.6" y="3.1" width="1.0" height="1.0" fill="#d8dcdf" opacity="0.6"/><rect x="65.3" y="31.1" width="1.0" height="1.0" fill="#6e7276" opacity="0.6"/><rect x="82.6" y="8.4" width="1.0" height="1.0" fill="#d8dcdf" opacity="0.6"/><rect x="56.1" y="10.8" width="1.0" height="1.0" fill="#b8bcc0" opacity="0.6"/><rect x="86.4" y="0.7" width="1.0" height="1.0" fill="#eef0f2" opacity="0.6"/><rect x="104.2" y="0.9" width="1.0" height="1.0" fill="#d8dcdf" opacity="0.6"/><rect x="75.3" y="17.5" width="1.0" height="1.0" fill="#eef0f2" opacity="0.6"/><rect x="72.3" y="13.2" width="1.0" height="1.0" fill="#50545a" opacity="0.6"/><rect x="83.4" y="28.6" width="1.0" height="1.0" fill="#50545a" opacity="0.6"/><rect x="60.4" y="33.6" width="1.0" height="1.0" fill="#eef0f2" opacity="0.6"/><rect x="93.5" y="37.9" width="1.0" height="1.0" fill="#d8dcdf" opacity="0.6"/><rect x="99.6" y="38.6" width="1.0" height="1.0" fill="#d8dcdf" opacity="0.6"/><rect x="42.0" y="18.5" width="1.0" height="1.0" fill="#6e7276" opacity="0.6"/><rect x="81.1" y="20.7" width="1.0" height="1.0" fill="#eef0f2" opacity="0.6"/><rect x="99.9" y="37.5" width="1.0" height="1.0" fill="#6e7276" opacity="0.6"/><rect x="54.2" y="11.6" width="1.0" height="1.0" fill="#6e7276" opacity="0.6"/><rect x="71.7" y="38.8" width="1.0" height="1.0" fill="#6e7276" opacity="0.6"/><rect x="69.9" y="7.8" width="1.0" height="1.0" fill="#6e7276" opacity="0.6"/><rect x="44.0" y="3.9" width="1.0" height="1.0" fill="#eef0f2" opacity="0.6"/><rect x="77.0" y="7.9" width="1.0" height="1.0" fill="#eef0f2" opacity="0.6"/><rect x="84.8" y="5.8" width="1.0" height="1.0" fill="#d8dcdf" opacity="0.6"/><rect x="63.0" y="18.8" width="1.0" height="1.0" fill="#b8bcc0" opacity="0.6"/><rect x="80.8" y="39.5" width="1.0" height="1.0" fill="#6e7276" opacity="0.6"/><rect x="54.4" y="22.8" width="1.0" height="1.0" fill="#eef0f2" opacity="0.6"/><rect x="45.2" y="28.1" width="1.0" height="1.0" fill="#6e7276" opacity="0.6"/><rect x="72.0" y="36.4" width="1.0" height="1.0" fill="#eef0f2" opacity="0.6"/><rect x="91.9" y="33.6" width="1.0" height="1.0" fill="#b8bcc0" opacity="0.6"/><rect x="46.7" y="30.1" width="1.0" height="1.0" fill="#eef0f2" opacity="0.6"/><rect x="102.4" y="8.6" width="1.0" height="1.0" fill="#50545a" opacity="0.6"/><rect x="40.7" y="38.7" width="1.0" height="1.0" fill="#d8dcdf" opacity="0.6"/><rect x="46.2" y="13.8" width="1.0" height="1.0" fill="#d8dcdf" opacity="0.6"/><rect x="74.7" y="33.2" width="1.0" height="1.0" fill="#6e7276" opacity="0.6"/><rect x="84.1" y="16.6" width="1.0" height="1.0" fill="#b8bcc0" opacity="0.6"/><rect x="74.4" y="5.7" width="1.0" height="1.0" fill="#eef0f2" opacity="0.6"/><rect x="64.4" y="11.3" width="1.0" height="1.0" fill="#eef0f2" opacity="0.6"/><rect x="102.2" y="23.8" width="1.0" height="1.0" fill="#b8bcc0" opacity="0.6"/><rect x="92.8" y="7.5" width="1.0" height="1.0" fill="#50545a" opacity="0.6"/><rect x="40.6" y="28.7" width="1.0" height="1.0" fill="#d8dcdf" opacity="0.6"/><rect x="58.9" y="21.9" width="1.0" height="1.0" fill="#6e7276" opacity="0.6"/><rect x="101.8" y="31.7" width="1.0" height="1.0" fill="#eef0f2" opacity="0.6"/><rect x="59.4" y="21.7" width="1.0" height="1.0" fill="#6e7276" opacity="0.6"/><rect x="86.2" y="9.7" width="1.0" height="1.0" fill="#eef0f2" opacity="0.6"/><rect x="50.0" y="28.5" width="1.0" height="1.0" fill="#b8bcc0" opacity="0.6"/><rect x="43.5" y="11.7" width="1.0" height="1.0" fill="#eef0f2" opacity="0.6"/><rect x="41.8" y="7.8" width="1.0" height="1.0" fill="#d8dcdf" opacity="0.6"/><rect x="70.8" y="14.3" width="1.0" height="1.0" fill="#b8bcc0" opacity="0.6"/><rect x="49.1" y="17.8" width="1.0" height="1.0" fill="#b8bcc0" opacity="0.6"/><rect x="53.8" y="28.8" width="1.0" height="1.0" fill="#6e7276" opacity="0.6"/><rect x="40.7" y="23.3" width="1.0" height="1.0" fill="#d8dcdf" opacity="0.6"/><rect x="103.7" y="30.1" width="1.0" height="1.0" fill="#6e7276" opacity="0.6"/><rect x="65.3" y="15.6" width="1.0" height="1.0" fill="#6e7276" opacity="0.6"/><rect x="100.3" y="18.4" width="1.0" height="1.0" fill="#50545a" opacity="0.6"/><rect x="77.8" y="38.6" width="1.0" height="1.0" fill="#b8bcc0" opacity="0.6"/><rect x="45.8" y="14.9" width="1.0" height="1.0" fill="#50545a" opacity="0.6"/><rect x="92.2" y="40.7" width="1.0" height="1.0" fill="#50545a" opacity="0.6"/><rect x="91.7" y="0.5" width="1.0" height="1.0" fill="#b8bcc0" opacity="0.6"/><rect x="62.8" y="9.4" width="1.0" height="1.0" fill="#50545a" opacity="0.6"/><rect x="41.9" y="30.1" width="1.0" height="1.0" fill="#b8bcc0" opacity="0.6"/><rect x="79.5" y="8.4" width="1.0" height="1.0" fill="#eef0f2" opacity="0.6"/><rect x="59.3" y="5.5" width="1.0" height="1.0" fill="#eef0f2" opacity="0.6"/><rect x="66.9" y="3.2" width="1.0" height="1.0" fill="#50545a" opacity="0.6"/><rect x="70.9" y="40.5" width="1.0" height="1.0" fill="#d8dcdf" opacity="0.6"/><rect x="61.4" y="35.2" width="1.0" height="1.0" fill="#b8bcc0" opacity="0.6"/><rect x="88.3" y="26.8" width="1.0" height="1.0" fill="#b8bcc0" opacity="0.6"/><rect x="102.9" y="16.0" width="1.0" height="1.0" fill="#b8bcc0" opacity="0.6"/><rect x="50.3" y="15.9" width="1.0" height="1.0" fill="#6e7276" opacity="0.6"/><rect x="49.5" y="17.5" width="1.0" height="1.0" fill="#50545a" opacity="0.6"/><rect x="96.9" y="28.0" width="1.0" height="1.0" fill="#b8bcc0" opacity="0.6"/><rect x="46.4" y="40.5" width="1.0" height="1.0" fill="#b8bcc0" opacity="0.6"/><rect x="57.7" y="15.7" width="1.0" height="1.0" fill="#eef0f2" opacity="0.6"/><rect x="76.5" y="41.9" width="1.0" height="1.0" fill="#d8dcdf" opacity="0.6"/><rect x="84.0" y="19.5" width="1.0" height="1.0" fill="#d8dcdf" opacity="0.6"/><rect x="54.0" y="0.6" width="1.0" height="1.0" fill="#6e7276" opacity="0.6"/><rect x="89.0" y="10.7" width="1.0" height="1.0" fill="#eef0f2" opacity="0.6"/><rect x="55.3" y="7.5" width="1.0" height="1.0" fill="#6e7276" opacity="0.6"/><rect x="103.7" y="15.5" width="1.0" height="1.0" fill="#eef0f2" opacity="0.6"/><rect x="62.0" y="38.4" width="1.0" height="1.0" fill="#b8bcc0" opacity="0.6"/><rect x="86.3" y="5.6" width="1.0" height="1.0" fill="#50545a" opacity="0.6"/><rect x="46.1" y="8.8" width="1.0" height="1.0" fill="#eef0f2" opacity="0.6"/><rect x="97.1" y="29.8" width="1.0" height="1.0" fill="#eef0f2" opacity="0.6"/><rect x="64.0" y="32.4" width="1.0" height="1.0" fill="#d8dcdf" opacity="0.6"/><rect x="46.4" y="17.1" width="1.0" height="1.0" fill="#6e7276" opacity="0.6"/><rect x="104.1" y="2.5" width="1.0" height="1.0" fill="#b8bcc0" opacity="0.6"/><rect x="50.6" y="24.1" width="1.0" height="1.0" fill="#6e7276" opacity="0.6"/><rect x="64.8" y="27.8" width="1.0" height="1.0" fill="#eef0f2" opacity="0.6"/><rect x="89.2" y="21.7" width="1.0" height="1.0" fill="#6e7276" opacity="0.6"/><rect x="42.3" y="40.9" width="1.0" height="1.0" fill="#eef0f2" opacity="0.6"/><rect x="58.8" y="12.2" width="1.0" height="1.0" fill="#6e7276" opacity="0.6"/><rect x="94.2" y="22.4" width="1.0" height="1.0" fill="#d8dcdf" opacity="0.6"/><rect x="43.9" y="15.1" width="1.0" height="1.0" fill="#50545a" opacity="0.6"/><rect x="68.1" y="15.3" width="1.0" height="1.0" fill="#eef0f2" opacity="0.6"/><rect x="44.4" y="40.1" width="1.0" height="1.0" fill="#6e7276" opacity="0.6"/><rect x="74.6" y="30.7" width="1.0" height="1.0" fill="#d8dcdf" opacity="0.6"/><rect x="84.1" y="33.5" width="1.0" height="1.0" fill="#eef0f2" opacity="0.6"/><rect x="68.8" y="0.8" width="1.0" height="1.0" fill="#6e7276" opacity="0.6"/><rect x="45.4" y="10.9" width="1.0" height="1.0" fill="#50545a" opacity="0.6"/><rect x="106.2" y="40.2" width="1.0" height="1.0" fill="#6e7276" opacity="0.6"/><rect x="51.5" y="1.2" width="1.0" height="1.0" fill="#eef0f2" opacity="0.6"/><rect x="88.3" y="21.8" width="1.0" height="1.0" fill="#b8bcc0" opacity="0.6"/><rect x="79.2" y="8.4" width="1.0" height="1.0" fill="#b8bcc0" opacity="0.6"/><rect x="46.9" y="21.3" width="1.0" height="1.0" fill="#50545a" opacity="0.6"/><rect x="106.1" y="3.1" width="1.0" height="1.0" fill="#b8bcc0" opacity="0.6"/><rect x="85.1" y="6.0" width="1.0" height="1.0" fill="#6e7276" opacity="0.6"/><rect x="100.5" y="8.3" width="1.0" height="1.0" fill="#6e7276" opacity="0.6"/><rect x="59.3" y="30.6" width="1.0" height="1.0" fill="#b8bcc0" opacity="0.6"/><rect x="83.8" y="13.2" width="1.0" height="1.0" fill="#b8bcc0" opacity="0.6"/><rect x="92.6" y="19.5" width="1.0" height="1.0" fill="#b8bcc0" opacity="0.6"/><rect x="76.1" y="29.8" width="1.0" height="1.0" fill="#d8dcdf" opacity="0.6"/><rect x="45.5" y="31.7" width="1.0" height="1.0" fill="#eef0f2" opacity="0.6"/><rect x="45.0" y="20.1" width="1.0" height="1.0" fill="#b8bcc0" opacity="0.6"/><rect x="104.8" y="25.6" width="1.0" height="1.0" fill="#6e7276" opacity="0.6"/><rect x="87.4" y="22.5" width="1.0" height="1.0" fill="#d8dcdf" opacity="0.6"/><rect x="79.3" y="0.5" width="1.0" height="1.0" fill="#eef0f2" opacity="0.6"/><rect x="69.8" y="24.5" width="1.0" height="1.0" fill="#b8bcc0" opacity="0.6"/><rect x="87.5" y="32.1" width="1.0" height="1.0" fill="#50545a" opacity="0.6"/><rect x="58.7" y="35.5" width="1.0" height="1.0" fill="#eef0f2" opacity="0.6"/><rect x="74.7" y="18.6" width="1.0" height="1.0" fill="#b8bcc0" opacity="0.6"/><rect x="104.8" y="42.0" width="1.0" height="1.0" fill="#eef0f2" opacity="0.6"/><rect x="92.5" y="6.8" width="1.0" height="1.0" fill="#eef0f2" opacity="0.6"/><rect x="87.3" y="13.4" width="1.0" height="1.0" fill="#6e7276" opacity="0.6"/><rect x="45.6" y="32.9" width="1.0" height="1.0" fill="#eef0f2" opacity="0.6"/><rect x="101.8" y="40.3" width="1.0" height="1.0" fill="#eef0f2" opacity="0.6"/><rect x="60.4" y="2.5" width="1.0" height="1.0" fill="#6e7276" opacity="0.6"/><rect x="95.0" y="2.9" width="1.0" height="1.0" fill="#6e7276" opacity="0.6"/><rect x="55.8" y="12.4" width="1.0" height="1.0" fill="#6e7276" opacity="0.6"/><rect x="70.7" y="1.8" width="1.0" height="1.0" fill="#50545a" opacity="0.6"/><rect x="51.2" y="28.8" width="1.0" height="1.0" fill="#d8dcdf" opacity="0.6"/><rect x="79.0" y="3.4" width="1.0" height="1.0" fill="#eef0f2" opacity="0.6"/><rect x="40.6" y="37.3" width="1.0" height="1.0" fill="#d8dcdf" opacity="0.6"/><rect x="70.4" y="7.2" width="1.0" height="1.0" fill="#d8dcdf" opacity="0.6"/><rect x="58.1" y="41.4" width="1.0" height="1.0" fill="#d8dcdf" opacity="0.6"/><rect x="91.7" y="34.2" width="1.0" height="1.0" fill="#eef0f2" opacity="0.6"/><rect x="82.8" y="10.9" width="1.0" height="1.0" fill="#50545a" opacity="0.6"/><rect x="88.2" y="40.9" width="1.0" height="1.0" fill="#50545a" opacity="0.6"/><rect x="73.5" y="22.6" width="1.0" height="1.0" fill="#6e7276" opacity="0.6"/><rect x="105.7" y="27.9" width="1.0" height="1.0" fill="#6e7276" opacity="0.6"/><rect x="56.7" y="29.2" width="1.0" height="1.0" fill="#eef0f2" opacity="0.6"/><rect x="58.1" y="6.4" width="1.0" height="1.0" fill="#50545a" opacity="0.6"/><rect x="91.1" y="25.4" width="1.0" height="1.0" fill="#6e7276" opacity="0.6"/><rect x="49.1" y="21.0" width="1.0" height="1.0" fill="#b8bcc0" opacity="0.6"/><rect x="47.2" y="25.9" width="1.0" height="1.0" fill="#6e7276" opacity="0.6"/><rect x="77.1" y="34.2" width="1.0" height="1.0" fill="#50545a" opacity="0.6"/><rect x="55.0" y="33.9" width="1.0" height="1.0" fill="#50545a" opacity="0.6"/><rect x="64.4" y="39.1" width="1.0" height="1.0" fill="#d8dcdf" opacity="0.6"/><rect x="47.3" y="0.0" width="1.0" height="1.0" fill="#b8bcc0" opacity="0.6"/><rect x="71.6" y="15.4" width="1.0" height="1.0" fill="#50545a" opacity="0.6"/><rect x="86.1" y="22.9" width="1.0" height="1.0" fill="#d8dcdf" opacity="0.6"/><rect x="82.6" y="10.8" width="1.0" height="1.0" fill="#b8bcc0" opacity="0.6"/><rect x="63.1" y="15.5" width="1.0" height="1.0" fill="#eef0f2" opacity="0.6"/><rect x="94.1" y="11.2" width="1.0" height="1.0" fill="#50545a" opacity="0.6"/><rect x="67.5" y="35.3" width="1.0" height="1.0" fill="#d8dcdf" opacity="0.6"/><rect x="56.1" y="6.4" width="1.0" height="1.0" fill="#d8dcdf" opacity="0.6"/><rect x="86.3" y="7.6" width="1.0" height="1.0" fill="#d8dcdf" opacity="0.6"/><rect x="82.6" y="16.9" width="1.0" height="1.0" fill="#6e7276" opacity="0.6"/><rect x="88.6" y="29.0" width="1.0" height="1.0" fill="#b8bcc0" opacity="0.6"/><rect x="84.4" y="3.1" width="1.0" height="1.0" fill="#50545a" opacity="0.6"/><rect x="59.1" y="27.2" width="1.0" height="1.0" fill="#50545a" opacity="0.6"/><rect x="49.7" y="22.3" width="1.0" height="1.0" fill="#d8dcdf" opacity="0.6"/><rect x="65.0" y="37.4" width="1.0" height="1.0" fill="#b8bcc0" opacity="0.6"/><rect x="79.3" y="11.8" width="1.0" height="1.0" fill="#d8dcdf" opacity="0.6"/><rect x="40.1" y="32.9" width="1.0" height="1.0" fill="#b8bcc0" opacity="0.6"/><rect x="90.7" y="21.9" width="1.0" height="1.0" fill="#eef0f2" opacity="0.6"/><rect x="104.2" y="11.6" width="1.0" height="1.0" fill="#50545a" opacity="0.6"/><rect x="86.0" y="28.0" width="1.0" height="1.0" fill="#50545a" opacity="0.6"/><rect x="97.7" y="8.0" width="1.0" height="1.0" fill="#6e7276" opacity="0.6"/><rect x="88.2" y="30.5" width="1.0" height="1.0" fill="#d8dcdf" opacity="0.6"/><rect x="97.8" y="29.9" width="1.0" height="1.0" fill="#d8dcdf" opacity="0.6"/><rect x="90.5" y="35.2" width="1.0" height="1.0" fill="#eef0f2" opacity="0.6"/><rect x="94.8" y="27.0" width="1.0" height="1.0" fill="#b8bcc0" opacity="0.6"/><rect x="44.9" y="23.1" width="1.0" height="1.0" fill="#50545a" opacity="0.6"/><rect x="85.7" y="21.5" width="1.0" height="1.0" fill="#d8dcdf" opacity="0.6"/><rect x="46.4" y="9.1" width="1.0" height="1.0" fill="#d8dcdf" opacity="0.6"/><rect x="71.2" y="27.9" width="1.0" height="1.0" fill="#b8bcc0" opacity="0.6"/><rect x="85.1" y="24.9" width="1.0" height="1.0" fill="#d8dcdf" opacity="0.6"/><rect x="93.4" y="23.1" width="1.0" height="1.0" fill="#eef0f2" opacity="0.6"/><rect x="92.2" y="10.8" width="1.0" height="1.0" fill="#d8dcdf" opacity="0.6"/><rect x="42.8" y="29.2" width="1.0" height="1.0" fill="#50545a" opacity="0.6"/><rect x="92.0" y="29.3" width="1.0" height="1.0" fill="#eef0f2" opacity="0.6"/><rect x="103.0" y="23.8" width="1.0" height="1.0" fill="#50545a" opacity="0.6"/><rect x="41.7" y="2.2" width="1.0" height="1.0" fill="#d8dcdf" opacity="0.6"/><rect x="88.2" y="14.7" width="1.0" height="1.0" fill="#d8dcdf" opacity="0.6"/><rect x="48.9" y="41.7" width="1.0" height="1.0" fill="#b8bcc0" opacity="0.6"/><rect x="86.8" y="22.4" width="1.0" height="1.0" fill="#eef0f2" opacity="0.6"/><rect x="107.6" y="25.2" width="1.0" height="1.0" fill="#b8bcc0" opacity="0.6"/><rect x="73.6" y="8.3" width="1.0" height="1.0" fill="#eef0f2" opacity="0.6"/><rect x="70.1" y="19.8" width="1.0" height="1.0" fill="#50545a" opacity="0.6"/><rect x="49.6" y="6.7" width="1.0" height="1.0" fill="#d8dcdf" opacity="0.6"/><rect x="68.9" y="31.3" width="1.0" height="1.0" fill="#eef0f2" opacity="0.6"/><rect x="71.6" y="4.0" width="1.0" height="1.0" fill="#d8dcdf" opacity="0.6"/><rect x="49.2" y="34.6" width="1.0" height="1.0" fill="#d8dcdf" opacity="0.6"/><rect x="105.7" y="21.6" width="1.0" height="1.0" fill="#eef0f2" opacity="0.6"/><rect x="48.1" y="11.6" width="1.0" height="1.0" fill="#6e7276" opacity="0.6"/><rect x="54.5" y="33.0" width="1.0" height="1.0" fill="#6e7276" opacity="0.6"/><rect x="54.8" y="26.9" width="1.0" height="1.0" fill="#b8bcc0" opacity="0.6"/><rect x="101.2" y="14.8" width="1.0" height="1.0" fill="#50545a" opacity="0.6"/><rect x="44.7" y="1.9" width="1.0" height="1.0" fill="#d8dcdf" opacity="0.6"/><rect x="62.6" y="37.5" width="1.0" height="1.0" fill="#d8dcdf" opacity="0.6"/><rect x="93.6" y="19.0" width="1.0" height="1.0" fill="#6e7276" opacity="0.6"/><rect x="82.9" y="30.0" width="1.0" height="1.0" fill="#b8bcc0" opacity="0.6"/><rect x="85.2" y="31.3" width="1.0" height="1.0" fill="#50545a" opacity="0.6"/><rect x="91.7" y="39.5" width="1.0" height="1.0" fill="#eef0f2" opacity="0.6"/><rect x="43.8" y="2.0" width="1.0" height="1.0" fill="#eef0f2" opacity="0.6"/><rect x="71.1" y="1.1" width="1.0" height="1.0" fill="#6e7276" opacity="0.6"/><rect x="43.5" y="18.0" width="1.0" height="1.0" fill="#eef0f2" opacity="0.6"/><rect x="43.8" y="17.0" width="1.0" height="1.0" fill="#6e7276" opacity="0.6"/><rect x="81.1" y="38.8" width="1.0" height="1.0" fill="#eef0f2" opacity="0.6"/><rect x="63.4" y="0.8" width="1.0" height="1.0" fill="#6e7276" opacity="0.6"/><rect x="98.9" y="17.3" width="1.0" height="1.0" fill="#d8dcdf" opacity="0.6"/><rect x="91.1" y="18.0" width="1.0" height="1.0" fill="#eef0f2" opacity="0.6"/><rect x="59.9" y="23.2" width="1.0" height="1.0" fill="#d8dcdf" opacity="0.6"/><rect x="82.6" y="39.9" width="1.0" height="1.0" fill="#6e7276" opacity="0.6"/><rect x="63.2" y="40.0" width="1.0" height="1.0" fill="#d8dcdf" opacity="0.6"/><rect x="61.4" y="9.9" width="1.0" height="1.0" fill="#6e7276" opacity="0.6"/><rect x="107.8" y="30.2" width="1.0" height="1.0" fill="#b8bcc0" opacity="0.6"/><rect x="83.0" y="14.6" width="1.0" height="1.0" fill="#6e7276" opacity="0.6"/><rect x="85.1" y="40.6" width="1.0" height="1.0" fill="#50545a" opacity="0.6"/><rect x="105.1" y="15.5" width="1.0" height="1.0" fill="#6e7276" opacity="0.6"/><rect x="56.7" y="23.8" width="1.0" height="1.0" fill="#eef0f2" opacity="0.6"/><rect x="99.7" y="4.8" width="1.0" height="1.0" fill="#eef0f2" opacity="0.6"/><rect x="44.6" y="24.9" width="1.0" height="1.0" fill="#eef0f2" opacity="0.6"/><rect x="71.5" y="39.6" width="1.0" height="1.0" fill="#6e7276" opacity="0.6"/><rect x="54.0" y="28.6" width="1.0" height="1.0" fill="#6e7276" opacity="0.6"/><rect x="80.0" y="22.9" width="1.0" height="1.0" fill="#50545a" opacity="0.6"/><rect x="92.4" y="3.2" width="1.0" height="1.0" fill="#d8dcdf" opacity="0.6"/><rect x="96.5" y="14.2" width="1.0" height="1.0" fill="#50545a" opacity="0.6"/><rect x="101.4" y="32.9" width="1.0" height="1.0" fill="#50545a" opacity="0.6"/><rect x="79.3" y="39.3" width="1.0" height="1.0" fill="#50545a" opacity="0.6"/><rect x="79.0" y="25.0" width="1.0" height="1.0" fill="#eef0f2" opacity="0.6"/><rect x="102.6" y="7.0" width="1.0" height="1.0" fill="#d8dcdf" opacity="0.6"/><rect x="74.0" y="37.6" width="1.0" height="1.0" fill="#d8dcdf" opacity="0.6"/><rect x="97.9" y="40.5" width="1.0" height="1.0" fill="#b8bcc0" opacity="0.6"/><rect x="55.7" y="27.1" width="1.0" height="1.0" fill="#6e7276" opacity="0.6"/><rect x="55.1" y="2.6" width="1.0" height="1.0" fill="#d8dcdf" opacity="0.6"/><rect x="66.1" y="30.4" width="1.0" height="1.0" fill="#eef0f2" opacity="0.6"/><rect x="93.1" y="35.8" width="1.0" height="1.0" fill="#6e7276" opacity="0.6"/><rect x="55.4" y="15.3" width="1.0" height="1.0" fill="#eef0f2" opacity="0.6"/><rect x="91.3" y="2.0" width="1.0" height="1.0" fill="#eef0f2" opacity="0.6"/><rect x="60.7" y="27.4" width="1.0" height="1.0" fill="#b8bcc0" opacity="0.6"/><rect x="40.2" y="4.7" width="1.0" height="1.0" fill="#50545a" opacity="0.6"/><rect x="61.2" y="27.7" width="1.0" height="1.0" fill="#d8dcdf" opacity="0.6"/><rect x="92.7" y="41.8" width="1.0" height="1.0" fill="#eef0f2" opacity="0.6"/><rect x="71.0" y="41.0" width="1.0" height="1.0" fill="#6e7276" opacity="0.6"/><rect x="56.8" y="21.6" width="1.0" height="1.0" fill="#b8bcc0" opacity="0.6"/><rect x="61.5" y="0.6" width="1.0" height="1.0" fill="#d8dcdf" opacity="0.6"/><rect x="88.9" y="2.1" width="1.0" height="1.0" fill="#b8bcc0" opacity="0.6"/><rect x="95.9" y="0.2" width="1.0" height="1.0" fill="#d8dcdf" opacity="0.6"/><rect x="47.3" y="29.7" width="1.0" height="1.0" fill="#d8dcdf" opacity="0.6"/><rect x="62.5" y="4.9" width="1.0" height="1.0" fill="#50545a" opacity="0.6"/><rect x="103.4" y="23.0" width="1.0" height="1.0" fill="#6e7276" opacity="0.6"/><rect x="81.2" y="9.1" width="1.0" height="1.0" fill="#b8bcc0" opacity="0.6"/><rect x="58.0" y="41.6" width="1.0" height="1.0" fill="#b8bcc0" opacity="0.6"/><rect x="107.0" y="30.3" width="1.0" height="1.0" fill="#50545a" opacity="0.6"/><rect x="43.7" y="10.0" width="1.0" height="1.0" fill="#6e7276" opacity="0.6"/><rect x="45.8" y="23.2" width="1.0" height="1.0" fill="#50545a" opacity="0.6"/><rect x="100.6" y="20.9" width="1.0" height="1.0" fill="#6e7276" opacity="0.6"/><rect x="45.6" y="11.9" width="1.0" height="1.0" fill="#d8dcdf" opacity="0.6"/><rect x="104.0" y="3.8" width="1.0" height="1.0" fill="#eef0f2" opacity="0.6"/><rect x="61.5" y="30.1" width="1.0" height="1.0" fill="#50545a" opacity="0.6"/><rect x="66.1" y="3.0" width="1.0" height="1.0" fill="#d8dcdf" opacity="0.6"/><rect x="82.4" y="4.9" width="1.0" height="1.0" fill="#6e7276" opacity="0.6"/><rect x="92.3" y="5.1" width="1.0" height="1.0" fill="#b8bcc0" opacity="0.6"/><rect x="50.9" y="27.6" width="1.0" height="1.0" fill="#b8bcc0" opacity="0.6"/><rect x="94.9" y="41.0" width="1.0" height="1.0" fill="#d8dcdf" opacity="0.6"/><rect x="98.3" y="3.1" width="1.0" height="1.0" fill="#6e7276" opacity="0.6"/><rect x="105.1" y="38.2" width="1.0" height="1.0" fill="#50545a" opacity="0.6"/><rect x="75.2" y="39.4" width="1.0" height="1.0" fill="#eef0f2" opacity="0.6"/><rect x="87.9" y="17.6" width="1.0" height="1.0" fill="#eef0f2" opacity="0.6"/><rect x="104.8" y="3.8" width="1.0" height="1.0" fill="#d8dcdf" opacity="0.6"/><rect x="62.5" y="15.1" width="1.0" height="1.0" fill="#50545a" opacity="0.6"/><rect x="60.4" y="28.7" width="1.0" height="1.0" fill="#50545a" opacity="0.6"/><rect x="71.2" y="20.8" width="1.0" height="1.0" fill="#b8bcc0" opacity="0.6"/><rect x="63.4" y="9.0" width="1.0" height="1.0" fill="#d8dcdf" opacity="0.6"/><rect x="57.8" y="0.9" width="1.0" height="1.0" fill="#b8bcc0" opacity="0.6"/><rect x="46.7" y="33.7" width="1.0" height="1.0" fill="#d8dcdf" opacity="0.6"/><rect x="69.1" y="25.6" width="1.0" height="1.0" fill="#50545a" opacity="0.6"/><rect x="95.7" y="21.6" width="1.0" height="1.0" fill="#d8dcdf" opacity="0.6"/><rect x="91.0" y="32.3" width="1.0" height="1.0" fill="#6e7276" opacity="0.6"/><rect x="68.1" y="0.6" width="1.0" height="1.0" fill="#b8bcc0" opacity="0.6"/><rect x="105.2" y="13.3" width="1.0" height="1.0" fill="#50545a" opacity="0.6"/><rect x="46.1" y="40.8" width="1.0" height="1.0" fill="#d8dcdf" opacity="0.6"/><rect x="44.3" y="29.4" width="1.0" height="1.0" fill="#6e7276" opacity="0.6"/><rect x="69.6" y="24.6" width="1.0" height="1.0" fill="#6e7276" opacity="0.6"/><rect x="76.2" y="14.9" width="1.0" height="1.0" fill="#eef0f2" opacity="0.6"/><rect x="92.8" y="23.3" width="1.0" height="1.0" fill="#50545a" opacity="0.6"/><rect x="92.6" y="21.0" width="1.0" height="1.0" fill="#6e7276" opacity="0.6"/><rect x="99.9" y="6.1" width="1.0" height="1.0" fill="#b8bcc0" opacity="0.6"/><rect x="89.4" y="17.3" width="1.0" height="1.0" fill="#d8dcdf" opacity="0.6"/><rect x="103.2" y="37.9" width="1.0" height="1.0" fill="#50545a" opacity="0.6"/><rect x="84.0" y="6.4" width="1.0" height="1.0" fill="#6e7276" opacity="0.6"/><rect x="94.4" y="6.2" width="1.0" height="1.0" fill="#eef0f2" opacity="0.6"/><rect x="106.6" y="22.2" width="1.0" height="1.0" fill="#b8bcc0" opacity="0.6"/><rect x="106.2" y="7.3" width="1.0" height="1.0" fill="#50545a" opacity="0.6"/><rect x="97.2" y="17.9" width="1.0" height="1.0" fill="#6e7276" opacity="0.6"/><rect x="79.1" y="27.4" width="1.0" height="1.0" fill="#50545a" opacity="0.6"/><rect x="76.5" y="0.3" width="1.0" height="1.0" fill="#b8bcc0" opacity="0.6"/><rect x="99.5" y="33.9" width="1.0" height="1.0" fill="#d8dcdf" opacity="0.6"/><rect x="52.9" y="23.7" width="1.0" height="1.0" fill="#d8dcdf" opacity="0.6"/><rect x="42.2" y="37.1" width="1.0" height="1.0" fill="#50545a" opacity="0.6"/><rect x="105.9" y="38.4" width="1.0" height="1.0" fill="#d8dcdf" opacity="0.6"/><rect x="60.2" y="27.4" width="1.0" height="1.0" fill="#eef0f2" opacity="0.6"/><rect x="40.5" y="3.1" width="1.0" height="1.0" fill="#d8dcdf" opacity="0.6"/><rect x="87.9" y="33.3" width="1.0" height="1.0" fill="#50545a" opacity="0.6"/><rect x="56.6" y="15.8" width="1.0" height="1.0" fill="#eef0f2" opacity="0.6"/><rect x="84.0" y="5.2" width="1.0" height="1.0" fill="#6e7276" opacity="0.6"/><rect x="63.6" y="34.7" width="1.0" height="1.0" fill="#b8bcc0" opacity="0.6"/><rect x="81.4" y="30.9" width="1.0" height="1.0" fill="#eef0f2" opacity="0.6"/><rect x="89.0" y="17.0" width="1.0" height="1.0" fill="#b8bcc0" opacity="0.6"/><rect x="86.8" y="9.4" width="1.0" height="1.0" fill="#eef0f2" opacity="0.6"/><rect x="58.5" y="39.1" width="1.0" height="1.0" fill="#6e7276" opacity="0.6"/><rect x="98.8" y="33.0" width="1.0" height="1.0" fill="#50545a" opacity="0.6"/><rect x="102.7" y="11.6" width="1.0" height="1.0" fill="#d8dcdf" opacity="0.6"/><rect x="66.9" y="7.2" width="1.0" height="1.0" fill="#b8bcc0" opacity="0.6"/><rect x="62.9" y="14.9" width="1.0" height="1.0" fill="#eef0f2" opacity="0.6"/><rect x="78.9" y="6.3" width="1.0" height="1.0" fill="#b8bcc0" opacity="0.6"/><rect x="40.4" y="9.1" width="1.0" height="1.0" fill="#d8dcdf" opacity="0.6"/><rect x="69.7" y="31.7" width="1.0" height="1.0" fill="#b8bcc0" opacity="0.6"/><rect x="71.1" y="41.0" width="1.0" height="1.0" fill="#50545a" opacity="0.6"/><rect x="86.7" y="36.4" width="1.0" height="1.0" fill="#b8bcc0" opacity="0.6"/><rect x="94.5" y="40.7" width="1.0" height="1.0" fill="#b8bcc0" opacity="0.6"/><rect x="86.0" y="14.9" width="1.0" height="1.0" fill="#6e7276" opacity="0.6"/><rect x="85.7" y="3.0" width="1.0" height="1.0" fill="#b8bcc0" opacity="0.6"/><rect x="62.9" y="17.8" width="1.0" height="1.0" fill="#6e7276" opacity="0.6"/><rect x="80.6" y="25.8" width="1.0" height="1.0" fill="#6e7276" opacity="0.6"/><rect x="66.8" y="28.3" width="1.0" height="1.0" fill="#b8bcc0" opacity="0.6"/><rect x="46.0" y="36.0" width="1.0" height="1.0" fill="#b8bcc0" opacity="0.6"/><rect x="69.9" y="1.6" width="1.0" height="1.0" fill="#6e7276" opacity="0.6"/><rect x="84.6" y="37.1" width="1.0" height="1.0" fill="#6e7276" opacity="0.6"/><rect x="74.3" y="26.3" width="1.0" height="1.0" fill="#b8bcc0" opacity="0.6"/><rect x="92.2" y="22.9" width="1.0" height="1.0" fill="#d8dcdf" opacity="0.6"/><rect x="105.2" y="7.9" width="1.0" height="1.0" fill="#6e7276" opacity="0.6"/><rect x="81.2" y="12.8" width="1.0" height="1.0" fill="#b8bcc0" opacity="0.6"/><rect x="47.1" y="38.2" width="1.0" height="1.0" fill="#50545a" opacity="0.6"/><rect x="97.9" y="4.3" width="1.0" height="1.0" fill="#b8bcc0" opacity="0.6"/><rect x="96.1" y="16.8" width="1.0" height="1.0" fill="#6e7276" opacity="0.6"/><rect x="101.6" y="26.5" width="1.0" height="1.0" fill="#50545a" opacity="0.6"/><rect x="63.7" y="11.6" width="1.0" height="1.0" fill="#d8dcdf" opacity="0.6"/><rect x="83.6" y="18.8" width="1.0" height="1.0" fill="#d8dcdf" opacity="0.6"/><rect x="58.3" y="19.4" width="1.0" height="1.0" fill="#eef0f2" opacity="0.6"/><rect x="57.4" y="9.3" width="1.0" height="1.0" fill="#d8dcdf" opacity="0.6"/><path d="M0 0 H32 Q52 16 66 42 H0 Z" fill="#9a9a9a"/><path d="M0 0 H31 Q34 14 26 19 Q12 23 0 24 Z" fill="#6a6a6a"/><path d="M32 0 Q52 16 66 42" fill="none" stroke="#505050" stroke-width="1"/><path d="M36 18 L34 42" stroke="#b2b2b2" stroke-width="2"/><path d="M0 22 L22 42" stroke="#151515" stroke-width="1.8"/><path d="M1 21 H10 V26 H1 Z" fill="#222"/><path d="M26 14 L31 16 L30 19 L25 17 Z" fill="#2a2a2a"/><path d="M86.5 4.5 L65.5 42 M87.5 4.5 L105 42 M87.5 4 L108 12 M87.5 6 L108 22" stroke="#141414" stroke-width="1.4"/><path d="M8 0 H22 V4 H8 Z" fill="#3a3a3a" opacity="0.8"/><path d="M40 0 H56 V4 H40 Z" fill="#4a5a70" opacity="0.6"/></svg><div class="a" style="left:531.3px;top:613.2px;width:11.8px;height:11px;background:#6a6a6a;border:1px solid #b0b0b0"></div><div class="t" style="left:533.5999999999999px;top:613.8000000000001px;font-size:10px;font-style:italic;color:#1e1e1e;font-family:'Liberation Serif'">fx</div><div class="t" style="left:549.40px;top:614.23px;font-size:10.43px;font-weight:400;color:#0e1838;transform:scaleX(0.8428);transform-origin:0 0;">DJI_0257.MP4 [V]</div><div class="a" style="left:520px;top:610px;width:1.6px;height:61px;background:#2f3a4a"></div><svg class="a" style="left:243px;top:610px" width="5" height="5"><path d="M0 0 H5 L0 5 Z" fill="#dcdcdc"/></svg><svg class="a" style="left:521.5px;top:610px" width="5" height="5"><path d="M0 0 H5 L0 5 Z" fill="#dcdcdc"/></svg><svg class="a" style="left:794.2px;top:610px" width="5" height="5"><path d="M0 0 H5 V5 Z" fill="#dcdcdc"/></svg><div class="a" style="left:242.7px;top:701px;width:556.5px;height:53px;background:#3a4e6b"></div><svg class="a" style="left:0;top:0" width="823" height="886"><path d="M243 726.8L243.0 725.8L244.0 725.8L244.0 725.7L245.0 725.7L245.0 725.1L246.0 725.1L246.0 725.8L247.0 725.8L247.0 725.7L248.0 725.7L248.0 725.6L249.0 725.6L249.0 726.2L250.0 726.2L250.0 725.7L251.0 725.7L251.0 725.6L252.0 725.6L252.0 725.3L253.0 725.3L253.0 723.5L254.0 723.5L254.0 721.8L255.0 721.8L255.0 723.5L256.0 723.5L256.0 725.3L257.0 725.3L257.0 725.5L258.0 725.5L258.0 723.8L259.0 723.8L259.0 725.0L260.0 725.0L260.0 725.1L261.0 725.1L261.0 725.5L262.0 725.5L262.0 721.5L263.0 721.5L263.0 719.8L264.0 719.8L264.0 721.5L265.0 721.5L265.0 718.8L266.0 718.8L266.0 714.8L267.0 714.8L267.0 718.8L268.0 718.8L268.0 715.8L269.0 715.8L269.0 711.8L270.0 711.8L270.0 715.8L271.0 715.8L271.0 718.5L272.0 718.5L272.0 718.5L273.0 718.5L273.0 725.7L274.0 725.7L274.0 725.5L275.0 725.5L275.0 725.8L276.0 725.8L276.0 725.5L277.0 725.5L277.0 725.8L278.0 725.8L278.0 726.1L279.0 726.1L279.0 725.0L280.0 725.0L280.0 725.0L281.0 725.0L281.0 725.2L282.0 725.2L282.0 725.4L283.0 725.4L283.0 726.0L284.0 726.0L284.0 726.2L285.0 726.2L285.0 726.1L286.0 726.1L286.0 726.4L287.0 726.4L287.0 725.4L288.0 725.4L288.0 725.9L289.0 725.9L289.0 725.2L290.0 725.2L290.0 723.8L291.0 723.8L291.0 725.1L292.0 725.1L292.0 725.2L293.0 725.2L293.0 726.5L294.0 726.5L294.0 726.2L295.0 726.2L295.0 725.1L296.0 725.1L296.0 723.8L297.0 723.8L297.0 725.0L298.0 725.0L298.0 725.9L299.0 725.9L299.0 726.4L300.0 726.4L300.0 725.6L301.0 725.6L301.0 725.3L302.0 725.3L302.0 726.1L303.0 726.1L303.0 726.4L304.0 726.4L304.0 726.0L305.0 726.0L305.0 714.7L306.0 714.7L306.0 715.3L307.0 715.3L307.0 719.1L308.0 719.1L308.0 718.7L309.0 718.7L309.0 714.1L310.0 714.1L310.0 714.2L311.0 714.2L311.0 712.2L312.0 712.2L312.0 711.4L313.0 711.4L313.0 710.3L314.0 710.3L314.0 710.6L315.0 710.6L315.0 711.4L316.0 711.4L316.0 709.9L317.0 709.9L317.0 711.5L318.0 711.5L318.0 710.1L319.0 710.1L319.0 711.6L320.0 711.6L320.0 710.7L321.0 710.7L321.0 711.3L322.0 711.3L322.0 711.1L323.0 711.1L323.0 709.2L324.0 709.2L324.0 709.7L325.0 709.7L325.0 711.0L326.0 711.0L326.0 709.4L327.0 709.4L327.0 711.3L328.0 711.3L328.0 710.8L329.0 710.8L329.0 709.5L330.0 709.5L330.0 710.1L331.0 710.1L331.0 711.6L332.0 711.6L332.0 709.1L333.0 709.1L333.0 711.3L334.0 711.3L334.0 711.2L335.0 711.2L335.0 709.7L336.0 709.7L336.0 711.0L337.0 711.0L337.0 711.2L338.0 711.2L338.0 711.8L339.0 711.8L339.0 711.8L340.0 711.8L340.0 710.5L341.0 710.5L341.0 711.5L342.0 711.5L342.0 710.6L343.0 710.6L343.0 711.3L344.0 711.3L344.0 711.1L345.0 711.1L345.0 709.7L346.0 709.7L346.0 711.1L347.0 711.1L347.0 710.9L348.0 710.9L348.0 710.1L349.0 710.1L349.0 712.1L350.0 712.1L350.0 712.2L351.0 712.2L351.0 710.2L352.0 710.2L352.0 710.5L353.0 710.5L353.0 712.1L354.0 712.1L354.0 712.3L355.0 712.3L355.0 710.8L356.0 710.8L356.0 710.3L357.0 710.3L357.0 712.4L358.0 712.4L358.0 710.4L359.0 710.4L359.0 710.6L360.0 710.6L360.0 711.5L361.0 711.5L361.0 712.0L362.0 712.0L362.0 713.0L363.0 713.0L363.0 713.2L364.0 713.2L364.0 710.7L365.0 710.7L365.0 712.7L366.0 712.7L366.0 711.5L367.0 711.5L367.0 712.8L368.0 712.8L368.0 711.2L369.0 711.2L369.0 711.9L370.0 711.9L370.0 712.8L371.0 712.8L371.0 713.2L372.0 713.2L372.0 711.7L373.0 711.7L373.0 713.6L374.0 713.6L374.0 713.2L375.0 713.2L375.0 712.3L376.0 712.3L376.0 711.6L377.0 711.6L377.0 712.3L378.0 712.3L378.0 713.3L379.0 713.3L379.0 711.5L380.0 711.5L380.0 713.6L381.0 713.6L381.0 714.2L382.0 714.2L382.0 713.5L383.0 713.5L383.0 713.0L384.0 713.0L384.0 714.2L385.0 714.2L385.0 713.9L386.0 713.9L386.0 713.3L387.0 713.3L387.0 712.8L388.0 712.8L388.0 714.1L389.0 714.1L389.0 713.5L390.0 713.5L390.0 712.0L391.0 712.0L391.0 711.8L392.0 711.8L392.0 712.7L393.0 712.7L393.0 712.7L394.0 712.7L394.0 713.0L395.0 713.0L395.0 714.3L396.0 714.3L396.0 714.6L397.0 714.6L397.0 714.7L398.0 714.7L398.0 712.2L399.0 712.2L399.0 712.8L400.0 712.8L400.0 712.1L401.0 712.1L401.0 714.8L402.0 714.8L402.0 713.1L403.0 713.1L403.0 713.5L404.0 713.5L404.0 712.9L405.0 712.9L405.0 714.1L406.0 714.1L406.0 712.2L407.0 712.2L407.0 714.8L408.0 714.8L408.0 713.5L409.0 713.5L409.0 713.0L410.0 713.0L410.0 712.6L411.0 712.6L411.0 714.4L412.0 714.4L412.0 717.8L413.0 717.8L413.0 720.9L414.0 720.9L414.0 725.3L415.0 725.3L415.0 725.6L416.0 725.6L416.0 725.4L417.0 725.4L417.0 725.5L418.0 725.5L418.0 725.8L419.0 725.8L419.0 726.0L420.0 726.0L420.0 725.7L421.0 725.7L421.0 725.7L422.0 725.7L422.0 725.4L423.0 725.4L423.0 726.0L424.0 726.0L424.0 725.7L425.0 725.7L425.0 725.4L426.0 725.4L426.0 722.0L427.0 722.0L427.0 725.9L428.0 725.9L428.0 725.6L429.0 725.6L429.0 725.7L430.0 725.7L430.0 722.9L431.0 722.9L431.0 725.6L432.0 725.6L432.0 726.3L433.0 726.3L433.0 725.6L434.0 725.6L434.0 725.3L435.0 725.3L435.0 725.6L436.0 725.6L436.0 725.9L437.0 725.9L437.0 725.3L438.0 725.3L438.0 726.0L439.0 726.0L439.0 726.1L440.0 726.1L440.0 725.9L441.0 725.9L441.0 725.4L442.0 725.4L442.0 725.3L443.0 725.3L443.0 726.3L444.0 726.3L444.0 726.1L445.0 726.1L445.0 726.0L446.0 726.0L446.0 725.9L447.0 725.9L447.0 725.4L448.0 725.4L448.0 723.7L449.0 723.7L449.0 721.7L450.0 721.7L450.0 725.8L451.0 725.8L451.0 723.4L452.0 723.4L452.0 721.3L453.0 721.3L453.0 726.2L454.0 726.2L454.0 726.4L455.0 726.4L455.0 725.9L456.0 725.9L456.0 725.6L457.0 725.6L457.0 725.3L458.0 725.3L458.0 726.2L459.0 726.2L459.0 722.4L460.0 722.4L460.0 725.6L461.0 725.6L461.0 726.1L462.0 726.1L462.0 725.6L463.0 725.6L463.0 725.7L464.0 725.7L464.0 726.0L465.0 726.0L465.0 725.3L466.0 725.3L466.0 725.3L467.0 725.3L467.0 726.3L468.0 726.3L468.0 725.7L469.0 725.7L469.0 726.0L470.0 726.0L470.0 725.4L471.0 725.4L471.0 725.3L472.0 725.3L472.0 725.7L473.0 725.7L473.0 725.6L474.0 725.6L474.0 725.7L475.0 725.7L475.0 726.2L476.0 726.2L476.0 725.2L477.0 725.2L477.0 725.8L478.0 725.8L478.0 726.1L479.0 726.1L479.0 725.4L480.0 725.4L480.0 726.4L481.0 726.4L481.0 725.8L482.0 725.8L482.0 721.4L483.0 721.4L483.0 726.4L484.0 726.4L484.0 726.3L485.0 726.3L485.0 725.5L486.0 725.5L486.0 726.3L487.0 726.3L487.0 725.6L488.0 725.6L488.0 725.6L489.0 725.6L489.0 725.9L490.0 725.9L490.0 726.4L491.0 726.4L491.0 725.8L492.0 725.8L492.0 725.6L493.0 725.6L493.0 725.8L494.0 725.8L494.0 725.8L495.0 725.8L495.0 726.0L496.0 726.0L496.0 725.3L497.0 725.3L497.0 725.4L498.0 725.4L498.0 725.8L499.0 725.8L499.0 726.2L500.0 726.2L500.0 725.8L501.0 725.8L501.0 726.5L502.0 726.5L502.0 725.8L503.0 725.8L503.0 725.5L504.0 725.5L504.0 725.9L505.0 725.9L505.0 726.4L506.0 726.4L506.0 726.0L507.0 726.0L507.0 725.3L508.0 725.3L508.0 725.9L509.0 725.9L509.0 725.9L510.0 725.9L510.0 725.3L511.0 725.3L511.0 726.1L512.0 726.1L512.0 725.7L513.0 725.7L513.0 726.3L514.0 726.3L514.0 726.5L515.0 726.5L515.0 726.2L516.0 726.2L516.0 726.1L517.0 726.1L517.0 725.7L518.0 725.7L518.0 725.5L519.0 725.5L519.0 725.8L520.0 725.8L520.0 726.6L521.0 726.6L521.0 726.5L522.0 726.5L522.0 726.5L523.0 726.5L523.0 726.7L524.0 726.7L524.0 726.3L525.0 726.3L525.0 726.4L526.0 726.4L526.0 726.3L527.0 726.3L527.0 726.6L528.0 726.6L528.0 726.2L529.0 726.2L529.0 726.5L530.0 726.5L530.0 726.1L531.0 726.1L531.0 726.0L532.0 726.0L532.0 726.7L533.0 726.7L533.0 726.2L534.0 726.2L534.0 726.7L535.0 726.7L535.0 726.5L536.0 726.5L536.0 726.7L537.0 726.7L537.0 723.0L538.0 723.0L538.0 726.3L539.0 726.3L539.0 726.0L540.0 726.0L540.0 726.4L541.0 726.4L541.0 726.4L542.0 726.4L542.0 726.6L543.0 726.6L543.0 726.7L544.0 726.7L544.0 726.4L545.0 726.4L545.0 726.3L546.0 726.3L546.0 726.7L547.0 726.7L547.0 726.1L548.0 726.1L548.0 726.1L549.0 726.1L549.0 726.8L550.0 726.8L550.0 726.4L551.0 726.4L551.0 726.5L552.0 726.5L552.0 726.4L553.0 726.4L553.0 721.0L554.0 721.0L554.0 726.1L555.0 726.1L555.0 726.4L556.0 726.4L556.0 726.5L557.0 726.5L557.0 726.7L558.0 726.7L558.0 726.8L559.0 726.8L559.0 726.2L560.0 726.2L560.0 726.1L561.0 726.1L561.0 726.5L562.0 726.5L562.0 726.4L563.0 726.4L563.0 726.2L564.0 726.2L564.0 726.1L565.0 726.1L565.0 726.2L566.0 726.2L566.0 726.5L567.0 726.5L567.0 726.1L568.0 726.1L568.0 726.2L569.0 726.2L569.0 726.5L570.0 726.5L570.0 726.7L571.0 726.7L571.0 722.4L572.0 722.4L572.0 726.3L573.0 726.3L573.0 726.6L574.0 726.6L574.0 726.3L575.0 726.3L575.0 726.3L576.0 726.3L576.0 726.4L577.0 726.4L577.0 726.0L578.0 726.0L578.0 726.2L579.0 726.2L579.0 721.3L580.0 721.3L580.0 726.2L581.0 726.2L581.0 726.5L582.0 726.5L582.0 726.6L583.0 726.6L583.0 726.7L584.0 726.7L584.0 726.1L585.0 726.1L585.0 726.4L586.0 726.4L586.0 726.3L587.0 726.3L587.0 726.3L588.0 726.3L588.0 726.7L589.0 726.7L589.0 726.2L590.0 726.2L590.0 726.1L591.0 726.1L591.0 726.4L592.0 726.4L592.0 726.4L593.0 726.4L593.0 726.8L594.0 726.8L594.0 726.5L595.0 726.5L595.0 726.3L596.0 726.3L596.0 726.6L597.0 726.6L597.0 726.4L598.0 726.4L598.0 726.2L599.0 726.2L599.0 726.8L600.0 726.8L600.0 726.8L601.0 726.8L601.0 726.2L602.0 726.2L602.0 726.1L603.0 726.1L603.0 726.8L604.0 726.8L604.0 726.0L605.0 726.0L605.0 726.1L606.0 726.1L606.0 726.4L607.0 726.4L607.0 726.6L608.0 726.6L608.0 726.1L609.0 726.1L609.0 726.4L610.0 726.4L610.0 726.1L611.0 726.1L611.0 726.7L612.0 726.7L612.0 726.4L613.0 726.4L613.0 726.8L614.0 726.8L614.0 726.7L615.0 726.7L615.0 726.3L616.0 726.3L616.0 726.6L617.0 726.6L617.0 726.5L618.0 726.5L618.0 726.4L619.0 726.4L619.0 726.0L620.0 726.0L620.0 726.6L621.0 726.6L621.0 726.1L622.0 726.1L622.0 726.3L623.0 726.3L623.0 726.6L624.0 726.6L624.0 726.3L625.0 726.3L625.0 726.3L626.0 726.3L626.0 726.6L627.0 726.6L627.0 726.0L628.0 726.0L628.0 726.1L629.0 726.1L629.0 726.8L630.0 726.8L630.0 726.5L631.0 726.5L631.0 726.7L632.0 726.7L632.0 726.7L633.0 726.7L633.0 726.3L634.0 726.3L634.0 726.3L635.0 726.3L635.0 726.4L636.0 726.4L636.0 726.5L637.0 726.5L637.0 726.1L638.0 726.1L638.0 726.7L639.0 726.7L639.0 726.3L640.0 726.3L640.0 726.6L641.0 726.6L641.0 726.6L642.0 726.6L642.0 726.5L643.0 726.5L643.0 726.0L644.0 726.0L644.0 726.4L645.0 726.4L645.0 726.1L646.0 726.1L646.0 726.5L647.0 726.5L647.0 726.1L648.0 726.1L648.0 726.7L649.0 726.7L649.0 726.4L650.0 726.4L650.0 726.6L651.0 726.6L651.0 726.7L652.0 726.7L652.0 726.3L653.0 726.3L653.0 726.6L654.0 726.6L654.0 726.2L655.0 726.2L655.0 726.7L656.0 726.7L656.0 726.2L657.0 726.2L657.0 726.7L658.0 726.7L658.0 726.3L659.0 726.3L659.0 726.0L660.0 726.0L660.0 726.4L661.0 726.4L661.0 726.6L662.0 726.6L662.0 726.5L663.0 726.5L663.0 726.1L664.0 726.1L664.0 726.5L665.0 726.5L665.0 726.5L666.0 726.5L666.0 726.5L667.0 726.5L667.0 726.3L668.0 726.3L668.0 726.4L669.0 726.4L669.0 726.3L670.0 726.3L670.0 726.2L671.0 726.2L671.0 721.7L672.0 721.7L672.0 726.4L673.0 726.4L673.0 726.0L674.0 726.0L674.0 726.2L675.0 726.2L675.0 726.4L676.0 726.4L676.0 726.7L677.0 726.7L677.0 726.2L678.0 726.2L678.0 726.7L679.0 726.7L679.0 726.7L680.0 726.7L680.0 726.3L681.0 726.3L681.0 726.6L682.0 726.6L682.0 726.4L683.0 726.4L683.0 726.5L684.0 726.5L684.0 726.0L685.0 726.0L685.0 726.4L686.0 726.4L686.0 726.2L687.0 726.2L687.0 726.1L688.0 726.1L688.0 726.1L689.0 726.1L689.0 726.1L690.0 726.1L690.0 726.1L691.0 726.1L691.0 726.0L692.0 726.0L692.0 726.4L693.0 726.4L693.0 726.2L694.0 726.2L694.0 726.5L695.0 726.5L695.0 726.2L696.0 726.2L696.0 726.5L697.0 726.5L697.0 726.6L698.0 726.6L698.0 726.6L699.0 726.6L699.0 726.8L700.0 726.8L700.0 726.7L701.0 726.7L701.0 726.2L702.0 726.2L702.0 726.8L703.0 726.8L703.0 726.3L704.0 726.3L704.0 726.8L705.0 726.8L705.0 726.7L706.0 726.7L706.0 726.6L707.0 726.6L707.0 726.3L708.0 726.3L708.0 726.7L709.0 726.7L709.0 726.7L710.0 726.7L710.0 726.6L711.0 726.6L711.0 726.1L712.0 726.1L712.0 726.6L713.0 726.6L713.0 726.1L714.0 726.1L714.0 726.4L715.0 726.4L715.0 726.4L716.0 726.4L716.0 726.8L717.0 726.8L717.0 726.2L718.0 726.2L718.0 726.4L719.0 726.4L719.0 726.6L720.0 726.6L720.0 726.3L721.0 726.3L721.0 726.8L722.0 726.8L722.0 726.5L723.0 726.5L723.0 726.2L724.0 726.2L724.0 726.7L725.0 726.7L725.0 726.5L726.0 726.5L726.0 726.1L727.0 726.1L727.0 726.3L728.0 726.3L728.0 726.6L729.0 726.6L729.0 726.7L730.0 726.7L730.0 726.8L731.0 726.8L731.0 726.1L732.0 726.1L732.0 726.7L733.0 726.7L733.0 726.2L734.0 726.2L734.0 726.4L735.0 726.4L735.0 726.0L736.0 726.0L736.0 726.1L737.0 726.1L737.0 726.2L738.0 726.2L738.0 726.1L739.0 726.1L739.0 726.1L740.0 726.1L740.0 726.4L741.0 726.4L741.0 726.7L742.0 726.7L742.0 726.6L743.0 726.6L743.0 726.7L744.0 726.7L744.0 726.4L745.0 726.4L745.0 726.5L746.0 726.5L746.0 726.7L747.0 726.7L747.0 726.4L748.0 726.4L748.0 726.1L749.0 726.1L749.0 726.8L750.0 726.8L750.0 726.2L751.0 726.2L751.0 726.3L752.0 726.3L752.0 726.8L753.0 726.8L753.0 726.2L754.0 726.2L754.0 726.3L755.0 726.3L755.0 726.5L756.0 726.5L756.0 726.6L757.0 726.6L757.0 726.5L758.0 726.5L758.0 726.6L759.0 726.6L759.0 726.2L760.0 726.2L760.0 726.0L761.0 726.0L761.0 726.2L762.0 726.2L762.0 726.1L763.0 726.1L763.0 726.7L764.0 726.7L764.0 726.3L765.0 726.3L765.0 726.7L766.0 726.7L766.0 726.1L767.0 726.1L767.0 726.7L768.0 726.7L768.0 726.7L769.0 726.7L769.0 726.5L770.0 726.5L770.0 726.1L771.0 726.1L771.0 726.4L772.0 726.4L772.0 726.2L773.0 726.2L773.0 726.5L774.0 726.5L774.0 722.2L775.0 722.2L775.0 726.2L776.0 726.2L776.0 726.2L777.0 726.2L777.0 722.5L778.0 722.5L778.0 726.5L779.0 726.5L779.0 726.7L780.0 726.7L780.0 726.4L781.0 726.4L781.0 726.1L782.0 726.1L782.0 726.7L783.0 726.7L783.0 726.1L784.0 726.1L784.0 726.5L785.0 726.5L785.0 726.7L786.0 726.7L786.0 726.0L787.0 726.0L787.0 726.2L788.0 726.2L788.0 726.6L789.0 726.6L789.0 726.3L790.0 726.3L790.0 726.7L791.0 726.7L791.0 726.3L792.0 726.3L792.0 726.5L793.0 726.5L793.0 726.5L794.0 726.5L794.0 726.7L795.0 726.7L795.0 726.7L796.0 726.7L796.0 726.4L797.0 726.4L797.0 726.4L798.0 726.4L798.0 726.1L799.0 726.1L799.0 726.1L800.0 726.1L799 726.8 Z" fill="#6c98d1"/><path d="M243 753.6L243.0 751.8L244.0 751.8L244.0 751.4L245.0 751.4L245.0 751.4L246.0 751.4L246.0 752.5L247.0 752.5L247.0 752.7L248.0 752.7L248.0 752.0L249.0 752.0L249.0 752.2L250.0 752.2L250.0 751.1L251.0 751.1L251.0 751.3L252.0 751.3L252.0 751.5L253.0 751.5L253.0 750.1L254.0 750.1L254.0 748.4L255.0 748.4L255.0 750.1L256.0 750.1L256.0 751.8L257.0 751.8L257.0 752.4L258.0 752.4L258.0 750.5L259.0 750.5L259.0 752.6L260.0 752.6L260.0 751.0L261.0 751.0L261.0 752.6L262.0 752.6L262.0 748.1L263.0 748.1L263.0 746.2L264.0 746.2L264.0 748.1L265.0 748.1L265.0 745.2L266.0 745.2L266.0 741.0L267.0 741.0L267.0 745.2L268.0 745.2L268.0 742.1L269.0 742.1L269.0 737.9L270.0 737.9L270.0 742.1L271.0 742.1L271.0 744.9L272.0 744.9L272.0 744.9L273.0 744.9L273.0 752.5L274.0 752.5L274.0 751.9L275.0 751.9L275.0 752.5L276.0 752.5L276.0 752.1L277.0 752.1L277.0 751.5L278.0 751.5L278.0 752.4L279.0 752.4L279.0 751.3L280.0 751.3L280.0 752.7L281.0 752.7L281.0 752.4L282.0 752.4L282.0 751.0L283.0 751.0L283.0 751.9L284.0 751.9L284.0 751.9L285.0 751.9L285.0 751.5L286.0 751.5L286.0 751.8L287.0 751.8L287.0 752.0L288.0 752.0L288.0 752.7L289.0 752.7L289.0 751.2L290.0 751.2L290.0 750.5L291.0 750.5L291.0 750.7L292.0 750.7L292.0 751.4L293.0 751.4L293.0 752.0L294.0 752.0L294.0 752.0L295.0 752.0L295.0 751.3L296.0 751.3L296.0 750.5L297.0 750.5L297.0 752.5L298.0 752.5L298.0 752.3L299.0 752.3L299.0 752.0L300.0 752.0L300.0 751.7L301.0 751.7L301.0 751.1L302.0 751.1L302.0 751.7L303.0 751.7L303.0 752.7L304.0 752.7L304.0 751.0L305.0 751.0L305.0 742.5L306.0 742.5L306.0 742.2L307.0 742.2L307.0 745.2L308.0 745.2L308.0 744.6L309.0 744.6L309.0 739.4L310.0 739.4L310.0 738.3L311.0 738.3L311.0 740.3L312.0 740.3L312.0 736.3L313.0 736.3L313.0 737.4L314.0 737.4L314.0 735.9L315.0 735.9L315.0 737.8L316.0 737.8L316.0 737.1L317.0 737.1L317.0 736.9L318.0 736.9L318.0 736.1L319.0 736.1L319.0 737.8L320.0 737.8L320.0 736.6L321.0 736.6L321.0 737.3L322.0 737.3L322.0 737.1L323.0 737.1L323.0 736.6L324.0 736.6L324.0 735.1L325.0 735.1L325.0 736.5L326.0 736.5L326.0 735.1L327.0 735.1L327.0 737.5L328.0 737.5L328.0 735.2L329.0 735.2L329.0 736.9L330.0 736.9L330.0 737.4L331.0 737.4L331.0 735.8L332.0 735.8L332.0 735.3L333.0 735.3L333.0 737.9L334.0 737.9L334.0 737.2L335.0 737.2L335.0 735.7L336.0 735.7L336.0 737.0L337.0 737.0L337.0 737.3L338.0 737.3L338.0 738.1L339.0 738.1L339.0 738.0L340.0 738.0L340.0 736.4L341.0 736.4L341.0 735.4L342.0 735.4L342.0 735.4L343.0 735.4L343.0 736.9L344.0 736.9L344.0 738.4L345.0 738.4L345.0 737.5L346.0 737.5L346.0 736.2L347.0 736.2L347.0 736.1L348.0 736.1L348.0 736.8L349.0 736.8L349.0 738.0L350.0 738.0L350.0 737.2L351.0 737.2L351.0 737.4L352.0 737.4L352.0 737.0L353.0 737.0L353.0 738.1L354.0 738.1L354.0 736.2L355.0 736.2L355.0 736.4L356.0 736.4L356.0 738.6L357.0 738.6L357.0 738.3L358.0 738.3L358.0 736.6L359.0 736.6L359.0 738.4L360.0 738.4L360.0 736.5L361.0 736.5L361.0 737.8L362.0 737.8L362.0 737.3L363.0 737.3L363.0 737.4L364.0 737.4L364.0 738.8L365.0 738.8L365.0 738.7L366.0 738.7L366.0 738.8L367.0 738.8L367.0 737.6L368.0 737.6L368.0 737.6L369.0 737.6L369.0 739.4L370.0 739.4L370.0 737.2L371.0 737.2L371.0 738.6L372.0 738.6L372.0 739.2L373.0 739.2L373.0 738.7L374.0 738.7L374.0 737.1L375.0 737.1L375.0 738.4L376.0 738.4L376.0 738.3L377.0 738.3L377.0 737.5L378.0 737.5L378.0 737.4L379.0 737.4L379.0 738.0L380.0 738.0L380.0 739.1L381.0 739.1L381.0 738.7L382.0 738.7L382.0 737.8L383.0 737.8L383.0 738.1L384.0 738.1L384.0 738.8L385.0 738.8L385.0 739.5L386.0 739.5L386.0 739.5L387.0 739.5L387.0 738.4L388.0 738.4L388.0 739.0L389.0 739.0L389.0 740.6L390.0 740.6L390.0 738.6L391.0 738.6L391.0 738.1L392.0 738.1L392.0 738.4L393.0 738.4L393.0 738.1L394.0 738.1L394.0 738.1L395.0 738.1L395.0 739.3L396.0 739.3L396.0 738.6L397.0 738.6L397.0 739.8L398.0 739.8L398.0 740.6L399.0 740.6L399.0 739.9L400.0 739.9L400.0 740.1L401.0 740.1L401.0 738.3L402.0 738.3L402.0 739.0L403.0 739.0L403.0 739.5L404.0 739.5L404.0 739.3L405.0 739.3L405.0 740.8L406.0 740.8L406.0 739.6L407.0 739.6L407.0 739.2L408.0 739.2L408.0 740.1L409.0 740.1L409.0 740.6L410.0 740.6L410.0 740.1L411.0 740.1L411.0 741.8L412.0 741.8L412.0 744.2L413.0 744.2L413.0 749.3L414.0 749.3L414.0 752.2L415.0 752.2L415.0 751.0L416.0 751.0L416.0 751.1L417.0 751.1L417.0 746.6L418.0 746.6L418.0 751.5L419.0 751.5L419.0 751.1L420.0 751.1L420.0 751.9L421.0 751.9L421.0 747.2L422.0 747.2L422.0 751.8L423.0 751.8L423.0 751.5L424.0 751.5L424.0 750.6L425.0 750.6L425.0 751.0L426.0 751.0L426.0 751.5L427.0 751.5L427.0 750.7L428.0 750.7L428.0 751.5L429.0 751.5L429.0 750.7L430.0 750.7L430.0 751.3L431.0 751.3L431.0 751.6L432.0 751.6L432.0 751.1L433.0 751.1L433.0 751.3L434.0 751.3L434.0 751.7L435.0 751.7L435.0 751.8L436.0 751.8L436.0 751.7L437.0 751.7L437.0 752.1L438.0 752.1L438.0 751.3L439.0 751.3L439.0 752.3L440.0 752.3L440.0 751.8L441.0 751.8L441.0 751.2L442.0 751.2L442.0 750.7L443.0 750.7L443.0 751.8L444.0 751.8L444.0 751.1L445.0 751.1L445.0 751.2L446.0 751.2L446.0 751.6L447.0 751.6L447.0 751.9L448.0 751.9L448.0 751.6L449.0 751.6L449.0 751.6L450.0 751.6L450.0 752.1L451.0 752.1L451.0 751.9L452.0 751.9L452.0 745.3L453.0 745.3L453.0 750.7L454.0 750.7L454.0 751.7L455.0 751.7L455.0 751.8L456.0 751.8L456.0 750.7L457.0 750.7L457.0 752.0L458.0 752.0L458.0 752.4L459.0 752.4L459.0 752.4L460.0 752.4L460.0 752.1L461.0 752.1L461.0 751.8L462.0 751.8L462.0 752.0L463.0 752.0L463.0 750.7L464.0 750.7L464.0 752.2L465.0 752.2L465.0 751.3L466.0 751.3L466.0 751.3L467.0 751.3L467.0 750.8L468.0 750.8L468.0 751.1L469.0 751.1L469.0 751.1L470.0 751.1L470.0 751.6L471.0 751.6L471.0 751.0L472.0 751.0L472.0 750.6L473.0 750.6L473.0 750.7L474.0 750.7L474.0 750.5L475.0 750.5L475.0 751.5L476.0 751.5L476.0 751.2L477.0 751.2L477.0 750.7L478.0 750.7L478.0 752.3L479.0 752.3L479.0 748.6L480.0 748.6L480.0 751.9L481.0 751.9L481.0 751.0L482.0 751.0L482.0 750.5L483.0 750.5L483.0 750.9L484.0 750.9L484.0 752.3L485.0 752.3L485.0 750.5L486.0 750.5L486.0 752.0L487.0 752.0L487.0 751.6L488.0 751.6L488.0 751.8L489.0 751.8L489.0 752.2L490.0 752.2L490.0 750.5L491.0 750.5L491.0 750.9L492.0 750.9L492.0 751.7L493.0 751.7L493.0 750.6L494.0 750.6L494.0 747.7L495.0 747.7L495.0 751.4L496.0 751.4L496.0 750.7L497.0 750.7L497.0 751.7L498.0 751.7L498.0 750.7L499.0 750.7L499.0 751.4L500.0 751.4L500.0 751.2L501.0 751.2L501.0 751.7L502.0 751.7L502.0 751.6L503.0 751.6L503.0 752.1L504.0 752.1L504.0 750.5L505.0 750.5L505.0 751.9L506.0 751.9L506.0 752.2L507.0 752.2L507.0 751.1L508.0 751.1L508.0 751.3L509.0 751.3L509.0 751.2L510.0 751.2L510.0 751.8L511.0 751.8L511.0 750.4L512.0 750.4L512.0 751.4L513.0 751.4L513.0 752.1L514.0 752.1L514.0 752.0L515.0 752.0L515.0 751.7L516.0 751.7L516.0 750.5L517.0 750.5L517.0 751.7L518.0 751.7L518.0 751.6L519.0 751.6L519.0 745.9L520.0 745.9L520.0 748.8L521.0 748.8L521.0 748.0L522.0 748.0L522.0 748.4L523.0 748.4L523.0 748.9L524.0 748.9L524.0 748.6L525.0 748.6L525.0 749.6L526.0 749.6L526.0 749.3L527.0 749.3L527.0 749.6L528.0 749.6L528.0 749.8L529.0 749.8L529.0 750.0L530.0 750.0L530.0 750.1L531.0 750.1L531.0 749.6L532.0 749.6L532.0 749.8L533.0 749.8L533.0 749.8L534.0 749.8L534.0 749.6L535.0 749.6L535.0 749.8L536.0 749.8L536.0 750.1L537.0 750.1L537.0 749.2L538.0 749.2L538.0 748.9L539.0 748.9L539.0 749.9L540.0 749.9L540.0 749.7L541.0 749.7L541.0 750.0L542.0 750.0L542.0 750.4L543.0 750.4L543.0 750.6L544.0 750.6L544.0 750.8L545.0 750.8L545.0 750.2L546.0 750.2L546.0 750.9L547.0 750.9L547.0 750.7L548.0 750.7L548.0 751.8L549.0 751.8L549.0 751.2L550.0 751.2L550.0 751.8L551.0 751.8L551.0 752.3L552.0 752.3L552.0 751.7L553.0 751.7L553.0 751.6L554.0 751.6L554.0 751.8L555.0 751.8L555.0 752.1L556.0 752.1L556.0 751.8L557.0 751.8L557.0 750.8L558.0 750.8L558.0 745.1L559.0 745.1L559.0 750.7L560.0 750.7L560.0 750.8L561.0 750.8L561.0 750.0L562.0 750.0L562.0 749.3L563.0 749.3L563.0 749.5L564.0 749.5L564.0 749.0L565.0 749.0L565.0 744.2L566.0 744.2L566.0 749.2L567.0 749.2L567.0 748.7L568.0 748.7L568.0 749.5L569.0 749.5L569.0 749.1L570.0 749.1L570.0 749.2L571.0 749.2L571.0 749.2L572.0 749.2L572.0 749.9L573.0 749.9L573.0 750.3L574.0 750.3L574.0 750.3L575.0 750.3L575.0 750.2L576.0 750.2L576.0 750.1L577.0 750.1L577.0 749.5L578.0 749.5L578.0 749.0L579.0 749.0L579.0 748.7L580.0 748.7L580.0 749.2L581.0 749.2L581.0 749.1L582.0 749.1L582.0 748.4L583.0 748.4L583.0 748.1L584.0 748.1L584.0 748.6L585.0 748.6L585.0 748.4L586.0 748.4L586.0 748.9L587.0 748.9L587.0 748.6L588.0 748.6L588.0 748.5L589.0 748.5L589.0 748.9L590.0 748.9L590.0 748.9L591.0 748.9L591.0 748.7L592.0 748.7L592.0 749.8L593.0 749.8L593.0 750.2L594.0 750.2L594.0 750.8L595.0 750.8L595.0 750.1L596.0 750.1L596.0 750.7L597.0 750.7L597.0 751.6L598.0 751.6L598.0 751.9L599.0 751.9L599.0 751.5L600.0 751.5L600.0 751.3L601.0 751.3L601.0 751.2L602.0 751.2L602.0 750.9L603.0 750.9L603.0 751.9L604.0 751.9L604.0 750.7L605.0 750.7L605.0 751.0L606.0 751.0L606.0 751.2L607.0 751.2L607.0 751.2L608.0 751.2L608.0 750.1L609.0 750.1L609.0 750.4L610.0 750.4L610.0 750.4L611.0 750.4L611.0 750.1L612.0 750.1L612.0 750.0L613.0 750.0L613.0 750.3L614.0 750.3L614.0 750.5L615.0 750.5L615.0 751.0L616.0 751.0L616.0 750.8L617.0 750.8L617.0 750.7L618.0 750.7L618.0 750.3L619.0 750.3L619.0 750.9L620.0 750.9L620.0 751.1L621.0 751.1L621.0 750.4L622.0 750.4L622.0 750.6L623.0 750.6L623.0 751.1L624.0 751.1L624.0 750.8L625.0 750.8L625.0 750.0L626.0 750.0L626.0 750.2L627.0 750.2L627.0 749.5L628.0 749.5L628.0 749.6L629.0 749.6L629.0 748.4L630.0 748.4L630.0 748.4L631.0 748.4L631.0 748.8L632.0 748.8L632.0 748.2L633.0 748.2L633.0 748.5L634.0 748.5L634.0 748.0L635.0 748.0L635.0 747.6L636.0 747.6L636.0 748.7L637.0 748.7L637.0 748.6L638.0 748.6L638.0 748.1L639.0 748.1L639.0 748.9L640.0 748.9L640.0 748.7L641.0 748.7L641.0 749.7L642.0 749.7L642.0 749.1L643.0 749.1L643.0 750.3L644.0 750.3L644.0 750.6L645.0 750.6L645.0 750.6L646.0 750.6L646.0 750.6L647.0 750.6L647.0 749.8L648.0 749.8L648.0 750.2L649.0 750.2L649.0 750.6L650.0 750.6L650.0 749.8L651.0 749.8L651.0 750.6L652.0 750.6L652.0 749.4L653.0 749.4L653.0 750.4L654.0 750.4L654.0 749.4L655.0 749.4L655.0 749.6L656.0 749.6L656.0 749.7L657.0 749.7L657.0 749.9L658.0 749.9L658.0 749.7L659.0 749.7L659.0 749.7L660.0 749.7L660.0 750.0L661.0 750.0L661.0 750.2L662.0 750.2L662.0 751.3L663.0 751.3L663.0 750.8L664.0 750.8L664.0 751.2L665.0 751.2L665.0 752.3L666.0 752.3L666.0 752.4L667.0 752.4L667.0 751.4L668.0 751.4L668.0 751.5L669.0 751.5L669.0 752.0L670.0 752.0L670.0 751.5L671.0 751.5L671.0 752.0L672.0 752.0L672.0 751.7L673.0 751.7L673.0 750.7L674.0 750.7L674.0 750.2L675.0 750.2L675.0 750.5L676.0 750.5L676.0 750.5L677.0 750.5L677.0 749.9L678.0 749.9L678.0 749.6L679.0 749.6L679.0 749.6L680.0 749.6L680.0 749.5L681.0 749.5L681.0 748.8L682.0 748.8L682.0 749.5L683.0 749.5L683.0 749.1L684.0 749.1L684.0 749.1L685.0 749.1L685.0 749.1L686.0 749.1L686.0 749.7L687.0 749.7L687.0 748.8L688.0 748.8L688.0 748.8L689.0 748.8L689.0 749.2L690.0 749.2L690.0 750.0L691.0 750.0L691.0 749.4L692.0 749.4L692.0 750.0L693.0 750.0L693.0 749.5L694.0 749.5L694.0 749.8L695.0 749.8L695.0 749.2L696.0 749.2L696.0 749.7L697.0 749.7L697.0 749.2L698.0 749.2L698.0 749.3L699.0 749.3L699.0 748.8L700.0 748.8L700.0 749.0L701.0 749.0L701.0 748.7L702.0 748.7L702.0 749.2L703.0 749.2L703.0 749.2L704.0 749.2L704.0 748.5L705.0 748.5L705.0 748.5L706.0 748.5L706.0 749.4L707.0 749.4L707.0 750.1L708.0 750.1L708.0 750.5L709.0 750.5L709.0 750.1L710.0 750.1L710.0 751.1L711.0 751.1L711.0 750.4L712.0 750.4L712.0 751.1L713.0 751.1L713.0 751.5L714.0 751.5L714.0 751.5L715.0 751.5L715.0 751.9L716.0 751.9L716.0 751.7L717.0 751.7L717.0 751.4L718.0 751.4L718.0 751.4L719.0 751.4L719.0 751.5L720.0 751.5L720.0 751.1L721.0 751.1L721.0 751.6L722.0 751.6L722.0 750.8L723.0 750.8L723.0 750.6L724.0 750.6L724.0 750.6L725.0 750.6L725.0 750.2L726.0 750.2L726.0 750.3L727.0 750.3L727.0 749.9L728.0 749.9L728.0 749.5L729.0 749.5L729.0 749.9L730.0 749.9L730.0 743.8L731.0 743.8L731.0 750.7L732.0 750.7L732.0 750.0L733.0 750.0L733.0 750.2L734.0 750.2L734.0 750.6L735.0 750.6L735.0 750.6L736.0 750.6L736.0 744.7L737.0 744.7L737.0 750.3L738.0 750.3L738.0 750.4L739.0 750.4L739.0 750.7L740.0 750.7L740.0 749.6L741.0 749.6L741.0 749.4L742.0 749.4L742.0 749.7L743.0 749.7L743.0 749.8L744.0 749.8L744.0 748.6L745.0 748.6L745.0 749.1L746.0 749.1L746.0 747.9L747.0 747.9L747.0 748.0L748.0 748.0L748.0 748.4L749.0 748.4L749.0 747.8L750.0 747.8L750.0 748.3L751.0 748.3L751.0 748.4L752.0 748.4L752.0 748.3L753.0 748.3L753.0 748.0L754.0 748.0L754.0 748.5L755.0 748.5L755.0 749.4L756.0 749.4L756.0 749.3L757.0 749.3L757.0 749.7L758.0 749.7L758.0 750.0L759.0 750.0L759.0 750.1L760.0 750.1L760.0 750.8L761.0 750.8L761.0 750.8L762.0 750.8L762.0 751.1L763.0 751.1L763.0 745.9L764.0 745.9L764.0 750.7L765.0 750.7L765.0 750.3L766.0 750.3L766.0 750.0L767.0 750.0L767.0 750.5L768.0 750.5L768.0 750.6L769.0 750.6L769.0 750.9L770.0 750.9L770.0 749.8L771.0 749.8L771.0 750.1L772.0 750.1L772.0 750.0L773.0 750.0L773.0 749.9L774.0 749.9L774.0 750.2L775.0 750.2L775.0 750.1L776.0 750.1L776.0 751.0L777.0 751.0L777.0 751.0L778.0 751.0L778.0 750.7L779.0 750.7L779.0 751.7L780.0 751.7L780.0 751.6L781.0 751.6L781.0 751.7L782.0 751.7L782.0 751.3L783.0 751.3L783.0 751.4L784.0 751.4L784.0 752.2L785.0 752.2L785.0 752.0L786.0 752.0L786.0 751.6L787.0 751.6L787.0 751.0L788.0 751.0L788.0 751.4L789.0 751.4L789.0 751.0L790.0 751.0L790.0 750.0L791.0 750.0L791.0 749.9L792.0 749.9L792.0 749.2L793.0 749.2L793.0 749.2L794.0 749.2L794.0 749.3L795.0 749.3L795.0 748.6L796.0 748.6L796.0 748.9L797.0 748.9L797.0 748.1L798.0 748.1L798.0 748.9L799.0 748.9L799.0 748.1L800.0 748.1L799 753.6 Z" fill="#6c98d1"/></svg><div class="a" style="left:242.7px;top:726.3px;width:556.5px;height:1.7px;background:#6e9ad3"></div><div class="a" style="left:520px;top:724.8px;width:279.2px;height:1.6px;background:#6e9ad3"></div><div class="a" style="left:242.7px;top:721.8px;width:556.5px;height:2px;background:#aeb0b3"></div><div class="a" style="left:242.7px;top:723.8px;width:556.5px;height:1px;background:#222a38"></div><div class="a" style="left:520px;top:701px;width:1px;height:53px;background:#2a3242"></div><div class="a" style="left:521px;top:701px;width:1px;height:53px;background:#8c949e"></div><svg class="a" style="left:548.5px;top:718.6px" width="8" height="9.5" viewBox="-0.5 -0.5 8 9"><path d="M3.5 0 L7 2.3 V5.7 L3.5 8 L0 5.7 V2.3 Z" fill="#b2b2b2" stroke="#181818" stroke-width="1"/></svg><div class="a" style="left:252px;top:704px;width:11.8px;height:11px;background:#6a6a6a;border:1px solid #b0b0b0"></div><div class="t" style="left:254.3px;top:704.6px;font-size:10px;font-style:italic;color:#1e1e1e;font-family:'Liberation Serif'">fx</div><div class="a" style="left:531.5px;top:704px;width:11.8px;height:11px;background:#f2c200;border:1px solid #cfc8a8"></div><div class="t" style="left:533.8px;top:704.6px;font-size:10px;font-style:italic;color:#3a2a00;font-family:'Liberation Serif'">fx</div><svg class="a" style="left:243px;top:701px" width="5" height="5"><path d="M0 0 H5 L0 5 Z" fill="#dcdcdc"/></svg><svg class="a" style="left:521.5px;top:701px" width="5" height="5"><path d="M0 0 H5 L0 5 Z" fill="#dcdcdc"/></svg><div class="a" style="left:442px;top:755px;width:78.2px;height:49.3px;background:#1b6a4a"></div><svg class="a" style="left:0;top:0" width="823" height="886"><path d="M443 775.8L443.0 772.4L444.0 772.4L444.0 771.7L445.0 771.7L445.0 763.7L446.0 763.7L446.0 763.7L447.0 763.7L447.0 771.6L448.0 771.6L448.0 771.8L449.0 771.8L449.0 772.4L450.0 772.4L450.0 773.2L451.0 773.2L451.0 769.2L452.0 769.2L452.0 764.0L453.0 764.0L453.0 771.8L454.0 771.8L454.0 771.4L455.0 771.4L455.0 763.7L456.0 763.7L456.0 773.0L457.0 773.0L457.0 772.2L458.0 772.2L458.0 764.5L459.0 764.5L459.0 765.5L460.0 765.5L460.0 771.4L461.0 771.4L461.0 772.8L462.0 772.8L462.0 771.8L463.0 771.8L463.0 773.2L464.0 773.2L464.0 771.5L465.0 771.5L465.0 767.1L466.0 767.1L466.0 764.2L467.0 764.2L467.0 772.6L468.0 772.6L468.0 765.0L469.0 765.0L469.0 773.3L470.0 773.3L470.0 767.0L471.0 767.0L471.0 767.5L472.0 767.5L472.0 772.3L473.0 772.3L473.0 768.3L474.0 768.3L474.0 771.6L475.0 771.6L475.0 767.1L476.0 767.1L476.0 773.0L477.0 773.0L477.0 772.3L478.0 772.3L478.0 772.7L479.0 772.7L479.0 764.4L480.0 764.4L480.0 763.8L481.0 763.8L481.0 771.8L482.0 771.8L482.0 766.3L483.0 766.3L483.0 772.2L484.0 772.2L484.0 772.0L485.0 772.0L485.0 768.7L486.0 768.7L486.0 773.3L487.0 773.3L487.0 771.5L488.0 771.5L488.0 771.4L489.0 771.4L489.0 764.4L490.0 764.4L490.0 773.0L491.0 773.0L491.0 771.4L492.0 771.4L492.0 773.2L493.0 773.2L493.0 768.7L494.0 768.7L494.0 772.9L495.0 772.9L495.0 772.5L496.0 772.5L496.0 766.1L497.0 766.1L497.0 769.1L498.0 769.1L498.0 772.8L499.0 772.8L499.0 763.8L500.0 763.8L500.0 767.4L501.0 767.4L501.0 771.5L502.0 771.5L502.0 772.3L503.0 772.3L503.0 767.8L504.0 767.8L504.0 764.3L505.0 764.3L505.0 764.0L506.0 764.0L506.0 767.4L507.0 767.4L507.0 768.6L508.0 768.6L508.0 768.7L509.0 768.7L509.0 766.0L510.0 766.0L510.0 766.0L511.0 766.0L511.0 766.0L512.0 766.0L512.0 775.5L513.0 775.5L513.0 775.6L514.0 775.6L514.0 775.6L515.0 775.6L515.0 775.6L516.0 775.6L516.0 775.7L517.0 775.7L517.0 775.7L518.0 775.7L518.0 775.7L519.0 775.7L519.0 775.8L520.0 775.8L520.0 775.8L521.0 775.8L520 775.8 Z" fill="#2fd69a"/><path d="M443 803.4L443.0 798.1L444.0 798.1L444.0 792.1L445.0 792.1L445.0 790.2L446.0 790.2L446.0 798.9L447.0 798.9L447.0 797.6L448.0 797.6L448.0 797.0L449.0 797.0L449.0 791.4L450.0 791.4L450.0 788.2L451.0 788.2L451.0 797.8L452.0 797.8L452.0 797.4L453.0 797.4L453.0 788.0L454.0 788.0L454.0 793.2L455.0 793.2L455.0 797.8L456.0 797.8L456.0 799.1L457.0 799.1L457.0 791.5L458.0 791.5L458.0 797.3L459.0 797.3L459.0 796.7L460.0 796.7L460.0 791.4L461.0 791.4L461.0 787.9L462.0 787.9L462.0 797.0L463.0 797.0L463.0 798.5L464.0 798.5L464.0 797.5L465.0 797.5L465.0 796.8L466.0 796.8L466.0 793.2L467.0 793.2L467.0 798.0L468.0 798.0L468.0 798.7L469.0 798.7L469.0 788.5L470.0 788.5L470.0 791.8L471.0 791.8L471.0 797.6L472.0 797.6L472.0 792.7L473.0 792.7L473.0 797.8L474.0 797.8L474.0 787.5L475.0 787.5L475.0 791.1L476.0 791.1L476.0 798.9L477.0 798.9L477.0 789.2L478.0 789.2L478.0 788.4L479.0 788.4L479.0 788.6L480.0 788.6L480.0 796.5L481.0 796.5L481.0 797.2L482.0 797.2L482.0 791.3L483.0 791.3L483.0 796.7L484.0 796.7L484.0 789.8L485.0 789.8L485.0 796.7L486.0 796.7L486.0 788.5L487.0 788.5L487.0 791.5L488.0 791.5L488.0 798.9L489.0 798.9L489.0 791.6L490.0 791.6L490.0 799.4L491.0 799.4L491.0 797.3L492.0 797.3L492.0 792.2L493.0 792.2L493.0 798.7L494.0 798.7L494.0 792.5L495.0 792.5L495.0 787.3L496.0 787.3L496.0 797.6L497.0 797.6L497.0 787.1L498.0 787.1L498.0 790.3L499.0 790.3L499.0 791.6L500.0 791.6L500.0 790.1L501.0 790.1L501.0 797.5L502.0 797.5L502.0 790.4L503.0 790.4L503.0 797.7L504.0 797.7L504.0 796.5L505.0 796.5L505.0 791.6L506.0 791.6L506.0 789.3L507.0 789.3L507.0 797.0L508.0 797.0L508.0 798.2L509.0 798.2L509.0 797.6L510.0 797.6L510.0 797.4L511.0 797.4L511.0 788.3L512.0 788.3L512.0 799.0L513.0 799.0L513.0 799.5L514.0 799.5L514.0 800.1L515.0 800.1L515.0 800.6L516.0 800.6L516.0 801.2L517.0 801.2L517.0 801.7L518.0 801.7L518.0 802.3L519.0 802.3L519.0 802.8L520.0 802.8L520.0 803.4L521.0 803.4L520 803.4 Z" fill="#2fd69a"/></svg><div class="a" style="left:442px;top:775.5px;width:78.2px;height:1.6px;background:#c4d0ca"></div><div class="a" style="left:442px;top:777.1px;width:78.2px;height:1.4px;background:#1a2f26"></div><div class="a" style="left:442px;top:778.6px;width:78.2px;height:1.8px;background:#2fd69a"></div><div class="a" style="left:452.2px;top:758.4px;width:11.8px;height:11px;background:#6a6a6a;border:1px solid #b0b0b0"></div><div class="t" style="left:454.5px;top:759.0px;font-size:10px;font-style:italic;color:#1e1e1e;font-family:'Liberation Serif'">fx</div><svg class="a" style="left:442.2px;top:755px" width="5" height="5"><path d="M0 0 H5 L0 5 Z" fill="#dcdcdc"/></svg><svg class="a" style="left:515.2px;top:755px" width="5" height="5"><path d="M0 0 H5 V5 Z" fill="#dcdcdc"/></svg><div class="a" style="left:242.7px;top:805px;width:518.3px;height:49.3px;background:#1b6a4a"></div><svg class="a" style="left:0;top:0" width="823" height="886"><path d="M243 825.5L243.0 824.6L244.0 824.6L244.0 824.0L245.0 824.0L245.0 823.0L246.0 823.0L246.0 822.0L247.0 822.0L247.0 822.9L248.0 822.9L248.0 822.6L249.0 822.6L249.0 822.0L250.0 822.0L250.0 820.5L251.0 820.5L251.0 821.5L252.0 821.5L252.0 819.8L253.0 819.8L253.0 819.6L254.0 819.6L254.0 820.4L255.0 820.4L255.0 818.9L256.0 818.9L256.0 819.1L257.0 819.1L257.0 819.2L258.0 819.2L258.0 817.8L259.0 817.8L259.0 819.8L260.0 819.8L260.0 820.0L261.0 820.0L261.0 817.9L262.0 817.9L262.0 819.1L263.0 819.1L263.0 819.5L264.0 819.5L264.0 819.2L265.0 819.2L265.0 819.1L266.0 819.1L266.0 817.8L267.0 817.8L267.0 819.4L268.0 819.4L268.0 819.4L269.0 819.4L269.0 818.5L270.0 818.5L270.0 818.6L271.0 818.6L271.0 817.7L272.0 817.7L272.0 817.9L273.0 817.9L273.0 819.0L274.0 819.0L274.0 819.3L275.0 819.3L275.0 817.9L276.0 817.9L276.0 817.5L277.0 817.5L277.0 819.6L278.0 819.6L278.0 818.0L279.0 818.0L279.0 817.7L280.0 817.7L280.0 818.2L281.0 818.2L281.0 819.1L282.0 819.1L282.0 817.8L283.0 817.8L283.0 817.9L284.0 817.9L284.0 819.1L285.0 819.1L285.0 818.1L286.0 818.1L286.0 819.0L287.0 819.0L287.0 819.4L288.0 819.4L288.0 818.7L289.0 818.7L289.0 818.7L290.0 818.7L290.0 818.5L291.0 818.5L291.0 818.0L292.0 818.0L292.0 817.5L293.0 817.5L293.0 817.2L294.0 817.2L294.0 817.2L295.0 817.2L295.0 817.1L296.0 817.1L296.0 808.9L297.0 808.9L297.0 811.1L298.0 811.1L298.0 812.6L299.0 812.6L299.0 812.7L300.0 812.7L300.0 813.8L301.0 813.8L301.0 814.3L302.0 814.3L302.0 816.3L303.0 816.3L303.0 816.6L304.0 816.6L304.0 815.5L305.0 815.5L305.0 816.6L306.0 816.6L306.0 816.8L307.0 816.8L307.0 818.4L308.0 818.4L308.0 818.0L309.0 818.0L309.0 817.1L310.0 817.1L310.0 817.8L311.0 817.8L311.0 817.2L312.0 817.2L312.0 819.1L313.0 819.1L313.0 818.7L314.0 818.7L314.0 818.0L315.0 818.0L315.0 818.9L316.0 818.9L316.0 818.2L317.0 818.2L317.0 818.7L318.0 818.7L318.0 819.7L319.0 819.7L319.0 819.8L320.0 819.8L320.0 817.9L321.0 817.9L321.0 819.8L322.0 819.8L322.0 819.7L323.0 819.7L323.0 819.4L324.0 819.4L324.0 818.6L325.0 818.6L325.0 818.3L326.0 818.3L326.0 819.1L327.0 819.1L327.0 819.0L328.0 819.0L328.0 818.4L329.0 818.4L329.0 819.5L330.0 819.5L330.0 819.3L331.0 819.3L331.0 818.8L332.0 818.8L332.0 818.7L333.0 818.7L333.0 820.0L334.0 820.0L334.0 819.9L335.0 819.9L335.0 819.8L336.0 819.8L336.0 818.5L337.0 818.5L337.0 818.6L338.0 818.6L338.0 818.0L339.0 818.0L339.0 818.4L340.0 818.4L340.0 819.5L341.0 819.5L341.0 818.4L342.0 818.4L342.0 817.9L343.0 817.9L343.0 819.3L344.0 819.3L344.0 820.0L345.0 820.0L345.0 819.2L346.0 819.2L346.0 819.4L347.0 819.4L347.0 819.6L348.0 819.6L348.0 819.9L349.0 819.9L349.0 819.7L350.0 819.7L350.0 818.0L351.0 818.0L351.0 819.8L352.0 819.8L352.0 818.6L353.0 818.6L353.0 819.5L354.0 819.5L354.0 819.5L355.0 819.5L355.0 818.1L356.0 818.1L356.0 819.2L357.0 819.2L357.0 819.5L358.0 819.5L358.0 818.9L359.0 818.9L359.0 818.3L360.0 818.3L360.0 818.7L361.0 818.7L361.0 817.9L362.0 817.9L362.0 818.9L363.0 818.9L363.0 818.6L364.0 818.6L364.0 818.2L365.0 818.2L365.0 818.8L366.0 818.8L366.0 818.2L367.0 818.2L367.0 813.6L368.0 813.6L368.0 814.3L369.0 814.3L369.0 815.1L370.0 815.1L370.0 814.2L371.0 814.2L371.0 814.8L372.0 814.8L372.0 814.9L373.0 814.9L373.0 815.8L374.0 815.8L374.0 816.4L375.0 816.4L375.0 817.6L376.0 817.6L376.0 816.3L377.0 816.3L377.0 818.1L378.0 818.1L378.0 817.6L379.0 817.6L379.0 818.4L380.0 818.4L380.0 818.0L381.0 818.0L381.0 818.2L382.0 818.2L382.0 818.1L383.0 818.1L383.0 817.5L384.0 817.5L384.0 817.9L385.0 817.9L385.0 818.6L386.0 818.6L386.0 817.5L387.0 817.5L387.0 817.6L388.0 817.6L388.0 817.5L389.0 817.5L389.0 819.2L390.0 819.2L390.0 818.0L391.0 818.0L391.0 817.3L392.0 817.3L392.0 818.8L393.0 818.8L393.0 818.9L394.0 818.9L394.0 817.5L395.0 817.5L395.0 818.5L396.0 818.5L396.0 818.5L397.0 818.5L397.0 817.5L398.0 817.5L398.0 818.5L399.0 818.5L399.0 818.9L400.0 818.9L400.0 818.8L401.0 818.8L401.0 818.6L402.0 818.6L402.0 817.8L403.0 817.8L403.0 818.5L404.0 818.5L404.0 817.6L405.0 817.6L405.0 819.1L406.0 819.1L406.0 818.7L407.0 818.7L407.0 813.7L408.0 813.7L408.0 814.4L409.0 814.4L409.0 814.9L410.0 814.9L410.0 814.4L411.0 814.4L411.0 816.2L412.0 816.2L412.0 816.8L413.0 816.8L413.0 817.4L414.0 817.4L414.0 816.6L415.0 816.6L415.0 817.2L416.0 817.2L416.0 817.0L417.0 817.0L417.0 818.2L418.0 818.2L418.0 818.3L419.0 818.3L419.0 817.6L420.0 817.6L420.0 816.9L421.0 816.9L421.0 817.9L422.0 817.9L422.0 816.7L423.0 816.7L423.0 817.4L424.0 817.4L424.0 817.9L425.0 817.9L425.0 817.1L426.0 817.1L426.0 818.3L427.0 818.3L427.0 817.5L428.0 817.5L428.0 817.0L429.0 817.0L429.0 817.7L430.0 817.7L430.0 818.2L431.0 818.2L431.0 818.7L432.0 818.7L432.0 817.6L433.0 817.6L433.0 818.5L434.0 818.5L434.0 818.1L435.0 818.1L435.0 817.7L436.0 817.7L436.0 816.8L437.0 816.8L437.0 813.1L438.0 813.1L438.0 813.8L439.0 813.8L439.0 813.6L440.0 813.6L440.0 815.3L441.0 815.3L441.0 815.5L442.0 815.5L442.0 815.2L443.0 815.2L443.0 815.8L444.0 815.8L444.0 816.8L445.0 816.8L445.0 816.6L446.0 816.6L446.0 815.9L447.0 815.9L447.0 817.3L448.0 817.3L448.0 816.4L449.0 816.4L449.0 817.9L450.0 817.9L450.0 816.0L451.0 816.0L451.0 816.7L452.0 816.7L452.0 817.6L453.0 817.6L453.0 816.2L454.0 816.2L454.0 816.6L455.0 816.6L455.0 818.3L456.0 818.3L456.0 817.9L457.0 817.9L457.0 817.4L458.0 817.4L458.0 816.3L459.0 816.3L459.0 818.2L460.0 818.2L460.0 813.5L461.0 813.5L461.0 812.9L462.0 812.9L462.0 814.2L463.0 814.2L463.0 814.0L464.0 814.0L464.0 814.3L465.0 814.3L465.0 814.9L466.0 814.9L466.0 816.0L467.0 816.0L467.0 816.5L468.0 816.5L468.0 815.1L469.0 815.1L469.0 816.1L470.0 816.1L470.0 816.2L471.0 816.2L471.0 816.4L472.0 816.4L472.0 816.1L473.0 816.1L473.0 815.7L474.0 815.7L474.0 816.0L475.0 816.0L475.0 816.3L476.0 816.3L476.0 817.2L477.0 817.2L477.0 817.6L478.0 817.6L478.0 817.9L479.0 817.9L479.0 816.2L480.0 816.2L480.0 818.0L481.0 818.0L481.0 816.9L482.0 816.9L482.0 816.2L483.0 816.2L483.0 817.5L484.0 817.5L484.0 817.4L485.0 817.4L485.0 817.3L486.0 817.3L486.0 816.1L487.0 816.1L487.0 816.7L488.0 816.7L488.0 816.4L489.0 816.4L489.0 818.1L490.0 818.1L490.0 811.5L491.0 811.5L491.0 812.1L492.0 812.1L492.0 813.0L493.0 813.0L493.0 812.7L494.0 812.7L494.0 813.4L495.0 813.4L495.0 813.4L496.0 813.4L496.0 814.2L497.0 814.2L497.0 814.2L498.0 814.2L498.0 815.5L499.0 815.5L499.0 815.5L500.0 815.5L500.0 815.1L501.0 815.1L501.0 816.0L502.0 816.0L502.0 816.8L503.0 816.8L503.0 815.9L504.0 815.9L504.0 815.4L505.0 815.4L505.0 815.4L506.0 815.4L506.0 817.1L507.0 817.1L507.0 816.6L508.0 816.6L508.0 816.9L509.0 816.9L509.0 816.7L510.0 816.7L510.0 815.3L511.0 815.3L511.0 816.5L512.0 816.5L512.0 816.8L513.0 816.8L513.0 816.8L514.0 816.8L514.0 816.4L515.0 816.4L515.0 815.9L516.0 815.9L516.0 816.6L517.0 816.6L517.0 816.9L518.0 816.9L518.0 816.8L519.0 816.8L519.0 816.7L520.0 816.7L520.0 815.3L521.0 815.3L521.0 816.8L522.0 816.8L522.0 815.5L523.0 815.5L523.0 816.9L524.0 816.9L524.0 815.4L525.0 815.4L525.0 816.5L526.0 816.5L526.0 815.3L527.0 815.3L527.0 816.1L528.0 816.1L528.0 816.8L529.0 816.8L529.0 816.7L530.0 816.7L530.0 815.1L531.0 815.1L531.0 815.7L532.0 815.7L532.0 815.8L533.0 815.8L533.0 812.8L534.0 812.8L534.0 812.1L535.0 812.1L535.0 813.0L536.0 813.0L536.0 814.3L537.0 814.3L537.0 813.4L538.0 813.4L538.0 814.3L539.0 814.3L539.0 813.3L540.0 813.3L540.0 814.1L541.0 814.1L541.0 813.8L542.0 813.8L542.0 815.3L543.0 815.3L543.0 814.1L544.0 814.1L544.0 814.4L545.0 814.4L545.0 813.9L546.0 813.9L546.0 813.9L547.0 813.9L547.0 814.7L548.0 814.7L548.0 814.6L549.0 814.6L549.0 814.2L550.0 814.2L550.0 815.3L551.0 815.3L551.0 814.7L552.0 814.7L552.0 814.1L553.0 814.1L553.0 814.5L554.0 814.5L554.0 814.6L555.0 814.6L555.0 813.9L556.0 813.9L556.0 813.6L557.0 813.6L557.0 815.2L558.0 815.2L558.0 815.6L559.0 815.6L559.0 811.8L560.0 811.8L560.0 812.8L561.0 812.8L561.0 811.3L562.0 811.3L562.0 812.7L563.0 812.7L563.0 812.8L564.0 812.8L564.0 812.4L565.0 812.4L565.0 812.5L566.0 812.5L566.0 814.2L567.0 814.2L567.0 813.6L568.0 813.6L568.0 814.3L569.0 814.3L569.0 813.8L570.0 813.8L570.0 814.5L571.0 814.5L571.0 812.9L572.0 812.9L572.0 814.1L573.0 814.1L573.0 814.0L574.0 814.0L574.0 812.9L575.0 812.9L575.0 813.1L576.0 813.1L576.0 814.2L577.0 814.2L577.0 813.8L578.0 813.8L578.0 813.4L579.0 813.4L579.0 814.4L580.0 814.4L580.0 814.5L581.0 814.5L581.0 812.9L582.0 812.9L582.0 814.4L583.0 814.4L583.0 813.2L584.0 813.2L584.0 813.1L585.0 813.1L585.0 813.3L586.0 813.3L586.0 813.8L587.0 813.8L587.0 812.6L588.0 812.6L588.0 812.7L589.0 812.7L589.0 814.3L590.0 814.3L590.0 812.4L591.0 812.4L591.0 813.0L592.0 813.0L592.0 813.7L593.0 813.7L593.0 813.9L594.0 813.9L594.0 814.1L595.0 814.1L595.0 812.5L596.0 812.5L596.0 812.3L597.0 812.3L597.0 813.4L598.0 813.4L598.0 813.7L599.0 813.7L599.0 813.9L600.0 813.9L600.0 813.2L601.0 813.2L601.0 813.4L602.0 813.4L602.0 813.9L603.0 813.9L603.0 813.3L604.0 813.3L604.0 812.1L605.0 812.1L605.0 813.8L606.0 813.8L606.0 813.0L607.0 813.0L607.0 812.7L608.0 812.7L608.0 813.4L609.0 813.4L609.0 813.7L610.0 813.7L610.0 813.6L611.0 813.6L611.0 813.4L612.0 813.4L612.0 811.5L613.0 811.5L613.0 811.7L614.0 811.7L614.0 812.0L615.0 812.0L615.0 811.6L616.0 811.6L616.0 812.8L617.0 812.8L617.0 812.9L618.0 812.9L618.0 811.5L619.0 811.5L619.0 809.8L620.0 809.8L620.0 809.1L621.0 809.1L621.0 810.6L622.0 810.6L622.0 810.8L623.0 810.8L623.0 810.3L624.0 810.3L624.0 810.1L625.0 810.1L625.0 811.9L626.0 811.9L626.0 811.8L627.0 811.8L627.0 812.4L628.0 812.4L628.0 811.3L629.0 811.3L629.0 810.5L630.0 810.5L630.0 811.4L631.0 811.4L631.0 812.3L632.0 812.3L632.0 811.1L633.0 811.1L633.0 811.2L634.0 811.2L634.0 812.4L635.0 812.4L635.0 810.7L636.0 810.7L636.0 811.2L637.0 811.2L637.0 811.6L638.0 811.6L638.0 811.9L639.0 811.9L639.0 812.3L640.0 812.3L640.0 811.6L641.0 811.6L641.0 811.8L642.0 811.8L642.0 812.0L643.0 812.0L643.0 811.1L644.0 811.1L644.0 811.0L645.0 811.0L645.0 810.4L646.0 810.4L646.0 810.3L647.0 810.3L647.0 811.4L648.0 811.4L648.0 810.8L649.0 810.8L649.0 810.3L650.0 810.3L650.0 810.1L651.0 810.1L651.0 810.0L652.0 810.0L652.0 809.2L653.0 809.2L653.0 811.4L654.0 811.4L654.0 810.6L655.0 810.6L655.0 810.9L656.0 810.9L656.0 809.9L657.0 809.9L657.0 809.7L658.0 809.7L658.0 810.7L659.0 810.7L659.0 811.6L660.0 811.6L660.0 810.5L661.0 810.5L661.0 810.5L662.0 810.5L662.0 810.3L663.0 810.3L663.0 810.1L664.0 810.1L664.0 810.7L665.0 810.7L665.0 810.5L666.0 810.5L666.0 810.0L667.0 810.0L667.0 811.6L668.0 811.6L668.0 811.1L669.0 811.1L669.0 810.1L670.0 810.1L670.0 809.4L671.0 809.4L671.0 809.5L672.0 809.5L672.0 810.9L673.0 810.9L673.0 809.4L674.0 809.4L674.0 810.9L675.0 810.9L675.0 810.4L676.0 810.4L676.0 811.1L677.0 811.1L677.0 810.0L678.0 810.0L678.0 810.5L679.0 810.5L679.0 809.8L680.0 809.8L680.0 809.2L681.0 809.2L681.0 811.8L682.0 811.8L682.0 811.5L683.0 811.5L683.0 812.4L684.0 812.4L684.0 813.9L685.0 813.9L685.0 815.2L686.0 815.2L686.0 814.0L687.0 814.0L687.0 815.4L688.0 815.4L688.0 816.3L689.0 816.3L689.0 818.3L690.0 818.3L690.0 817.3L691.0 817.3L691.0 819.2L692.0 819.2L692.0 819.9L693.0 819.9L693.0 820.5L694.0 820.5L694.0 809.6L695.0 809.6L695.0 808.5L696.0 808.5L696.0 809.6L697.0 809.6L697.0 814.0L698.0 814.0L698.0 814.4L699.0 814.4L699.0 814.9L700.0 814.9L700.0 815.3L701.0 815.3L701.0 815.7L702.0 815.7L702.0 816.1L703.0 816.1L703.0 816.6L704.0 816.6L704.0 817.0L705.0 817.0L705.0 817.4L706.0 817.4L706.0 817.8L707.0 817.8L707.0 818.3L708.0 818.3L708.0 818.7L709.0 818.7L709.0 819.1L710.0 819.1L710.0 819.5L711.0 819.5L711.0 820.0L712.0 820.0L712.0 820.4L713.0 820.4L713.0 820.8L714.0 820.8L714.0 821.2L715.0 821.2L715.0 821.7L716.0 821.7L716.0 822.1L717.0 822.1L717.0 822.5L718.0 822.5L718.0 822.9L719.0 822.9L719.0 823.4L720.0 823.4L720.0 823.8L721.0 823.8L721.0 824.2L722.0 824.2L722.0 824.6L723.0 824.6L723.0 825.1L724.0 825.1L724.0 825.5L725.0 825.5L725.0 825.5L726.0 825.5L726.0 825.5L727.0 825.5L727.0 825.5L728.0 825.5L728.0 825.5L729.0 825.5L729.0 825.5L730.0 825.5L730.0 825.5L731.0 825.5L731.0 825.5L732.0 825.5L732.0 825.5L733.0 825.5L733.0 825.5L734.0 825.5L734.0 825.5L735.0 825.5L735.0 825.5L736.0 825.5L736.0 825.5L737.0 825.5L737.0 825.5L738.0 825.5L738.0 825.5L739.0 825.5L739.0 825.5L740.0 825.5L740.0 825.5L741.0 825.5L741.0 825.5L742.0 825.5L742.0 825.5L743.0 825.5L743.0 825.5L744.0 825.5L744.0 825.5L745.0 825.5L745.0 825.5L746.0 825.5L746.0 825.5L747.0 825.5L747.0 825.5L748.0 825.5L748.0 825.5L749.0 825.5L749.0 825.5L750.0 825.5L750.0 825.5L751.0 825.5L751.0 825.5L752.0 825.5L752.0 825.5L753.0 825.5L753.0 825.5L754.0 825.5L754.0 825.5L755.0 825.5L755.0 825.5L756.0 825.5L756.0 825.5L757.0 825.5L757.0 825.5L758.0 825.5L758.0 825.5L759.0 825.5L759.0 825.5L760.0 825.5L760.0 825.5L761.0 825.5L761.0 825.5L762.0 825.5L761 825.5 Z" fill="#2fd69a"/><path d="M243 853.8L243.0 849.6L244.0 849.6L244.0 848.8L245.0 848.8L245.0 848.2L246.0 848.2L246.0 846.4L247.0 846.4L247.0 846.8L248.0 846.8L248.0 845.9L249.0 845.9L249.0 846.8L250.0 846.8L250.0 845.4L251.0 845.4L251.0 844.2L252.0 844.2L252.0 844.5L253.0 844.5L253.0 843.1L254.0 843.1L254.0 842.7L255.0 842.7L255.0 843.0L256.0 843.0L256.0 843.8L257.0 843.8L257.0 842.1L258.0 842.1L258.0 843.5L259.0 843.5L259.0 843.7L260.0 843.7L260.0 842.1L261.0 842.1L261.0 841.8L262.0 841.8L262.0 841.8L263.0 841.8L263.0 841.5L264.0 841.5L264.0 843.1L265.0 843.1L265.0 843.4L266.0 843.4L266.0 843.3L267.0 843.3L267.0 841.4L268.0 841.4L268.0 843.2L269.0 843.2L269.0 843.1L270.0 843.1L270.0 843.4L271.0 843.4L271.0 843.3L272.0 843.3L272.0 843.3L273.0 843.3L273.0 842.6L274.0 842.6L274.0 843.0L275.0 843.0L275.0 842.6L276.0 842.6L276.0 841.2L277.0 841.2L277.0 842.9L278.0 842.9L278.0 841.4L279.0 841.4L279.0 841.6L280.0 841.6L280.0 841.9L281.0 841.9L281.0 841.9L282.0 841.9L282.0 841.4L283.0 841.4L283.0 841.8L284.0 841.8L284.0 842.5L285.0 842.5L285.0 842.3L286.0 842.3L286.0 842.5L287.0 842.5L287.0 842.1L288.0 842.1L288.0 840.8L289.0 840.8L289.0 842.0L290.0 842.0L290.0 842.7L291.0 842.7L291.0 841.8L292.0 841.8L292.0 841.1L293.0 841.1L293.0 841.8L294.0 841.8L294.0 841.2L295.0 841.2L295.0 842.6L296.0 842.6L296.0 831.1L297.0 831.1L297.0 831.4L298.0 831.4L298.0 834.4L299.0 834.4L299.0 835.2L300.0 835.2L300.0 836.2L301.0 836.2L301.0 837.7L302.0 837.7L302.0 838.9L303.0 838.9L303.0 839.8L304.0 839.8L304.0 838.3L305.0 838.3L305.0 839.5L306.0 839.5L306.0 839.3L307.0 839.3L307.0 840.8L308.0 840.8L308.0 840.1L309.0 840.1L309.0 840.6L310.0 840.6L310.0 841.3L311.0 841.3L311.0 841.8L312.0 841.8L312.0 842.0L313.0 842.0L313.0 842.7L314.0 842.7L314.0 842.5L315.0 842.5L315.0 841.9L316.0 841.9L316.0 843.1L317.0 843.1L317.0 841.8L318.0 841.8L318.0 842.6L319.0 842.6L319.0 842.4L320.0 842.4L320.0 842.0L321.0 842.0L321.0 842.4L322.0 842.4L322.0 843.5L323.0 843.5L323.0 843.3L324.0 843.3L324.0 843.9L325.0 843.9L325.0 843.8L326.0 843.8L326.0 841.8L327.0 841.8L327.0 842.6L328.0 842.6L328.0 841.7L329.0 841.7L329.0 842.2L330.0 842.2L330.0 843.2L331.0 843.2L331.0 841.7L332.0 841.7L332.0 841.8L333.0 841.8L333.0 842.8L334.0 842.8L334.0 843.7L335.0 843.7L335.0 843.1L336.0 843.1L336.0 843.5L337.0 843.5L337.0 843.0L338.0 843.0L338.0 843.6L339.0 843.6L339.0 842.2L340.0 842.2L340.0 841.6L341.0 841.6L341.0 843.3L342.0 843.3L342.0 842.0L343.0 842.0L343.0 842.4L344.0 842.4L344.0 842.7L345.0 842.7L345.0 841.7L346.0 841.7L346.0 842.9L347.0 842.9L347.0 841.9L348.0 841.9L348.0 843.6L349.0 843.6L349.0 841.5L350.0 841.5L350.0 843.2L351.0 843.2L351.0 843.6L352.0 843.6L352.0 841.7L353.0 841.7L353.0 842.0L354.0 842.0L354.0 842.1L355.0 842.1L355.0 841.9L356.0 841.9L356.0 842.7L357.0 842.7L357.0 843.3L358.0 843.3L358.0 842.8L359.0 842.8L359.0 841.4L360.0 841.4L360.0 841.3L361.0 841.3L361.0 842.9L362.0 842.9L362.0 842.5L363.0 842.5L363.0 842.4L364.0 842.4L364.0 841.4L365.0 841.4L365.0 843.4L366.0 843.4L366.0 841.5L367.0 841.5L367.0 836.0L368.0 836.0L368.0 835.4L369.0 835.4L369.0 837.2L370.0 837.2L370.0 838.2L371.0 838.2L371.0 837.1L372.0 837.1L372.0 838.5L373.0 838.5L373.0 838.0L374.0 838.0L374.0 838.7L375.0 838.7L375.0 839.3L376.0 839.3L376.0 841.1L377.0 841.1L377.0 840.2L378.0 840.2L378.0 839.6L379.0 839.6L379.0 840.8L380.0 840.8L380.0 842.0L381.0 842.0L381.0 841.8L382.0 841.8L382.0 840.2L383.0 840.2L383.0 840.3L384.0 840.3L384.0 842.0L385.0 842.0L385.0 841.9L386.0 841.9L386.0 841.1L387.0 841.1L387.0 841.6L388.0 841.6L388.0 842.3L389.0 842.3L389.0 840.6L390.0 840.6L390.0 841.4L391.0 841.4L391.0 842.0L392.0 842.0L392.0 842.8L393.0 842.8L393.0 841.7L394.0 841.7L394.0 841.2L395.0 841.2L395.0 842.4L396.0 842.4L396.0 842.6L397.0 842.6L397.0 841.2L398.0 841.2L398.0 840.8L399.0 840.8L399.0 842.0L400.0 842.0L400.0 841.7L401.0 841.7L401.0 841.4L402.0 841.4L402.0 841.6L403.0 841.6L403.0 842.5L404.0 842.5L404.0 842.1L405.0 842.1L405.0 842.3L406.0 842.3L406.0 842.3L407.0 842.3L407.0 837.0L408.0 837.0L408.0 836.8L409.0 836.8L409.0 837.9L410.0 837.9L410.0 837.1L411.0 837.1L411.0 838.8L412.0 838.8L412.0 837.8L413.0 837.8L413.0 838.5L414.0 838.5L414.0 840.0L415.0 840.0L415.0 840.6L416.0 840.6L416.0 839.9L417.0 839.9L417.0 840.3L418.0 840.3L418.0 840.3L419.0 840.3L419.0 841.4L420.0 841.4L420.0 840.6L421.0 840.6L421.0 840.2L422.0 840.2L422.0 840.9L423.0 840.9L423.0 841.4L424.0 841.4L424.0 840.0L425.0 840.0L425.0 841.4L426.0 841.4L426.0 839.9L427.0 839.9L427.0 840.6L428.0 840.6L428.0 842.2L429.0 842.2L429.0 841.2L430.0 841.2L430.0 841.9L431.0 841.9L431.0 840.5L432.0 840.5L432.0 841.3L433.0 841.3L433.0 842.0L434.0 842.0L434.0 840.1L435.0 840.1L435.0 840.4L436.0 840.4L436.0 840.9L437.0 840.9L437.0 835.3L438.0 835.3L438.0 836.8L439.0 836.8L439.0 835.6L440.0 835.6L440.0 837.7L441.0 837.7L441.0 837.7L442.0 837.7L442.0 838.3L443.0 838.3L443.0 838.7L444.0 838.7L444.0 840.0L445.0 840.0L445.0 838.4L446.0 838.4L446.0 839.5L447.0 839.5L447.0 839.9L448.0 839.9L448.0 839.1L449.0 839.1L449.0 839.2L450.0 839.2L450.0 839.7L451.0 839.7L451.0 839.3L452.0 839.3L452.0 840.7L453.0 840.7L453.0 841.3L454.0 841.3L454.0 840.8L455.0 840.8L455.0 840.3L456.0 840.3L456.0 839.9L457.0 839.9L457.0 840.0L458.0 840.0L458.0 840.3L459.0 840.3L459.0 840.4L460.0 840.4L460.0 833.8L461.0 833.8L461.0 834.0L462.0 834.0L462.0 836.1L463.0 836.1L463.0 835.8L464.0 835.8L464.0 837.1L465.0 837.1L465.0 838.1L466.0 838.1L466.0 837.4L467.0 837.4L467.0 837.3L468.0 837.3L468.0 838.9L469.0 838.9L469.0 838.4L470.0 838.4L470.0 838.7L471.0 838.7L471.0 838.8L472.0 838.8L472.0 838.6L473.0 838.6L473.0 839.1L474.0 839.1L474.0 840.6L475.0 840.6L475.0 839.5L476.0 839.5L476.0 840.2L477.0 840.2L477.0 840.2L478.0 840.2L478.0 839.6L479.0 839.6L479.0 840.8L480.0 840.8L480.0 839.8L481.0 839.8L481.0 839.2L482.0 839.2L482.0 841.1L483.0 841.1L483.0 839.4L484.0 839.4L484.0 839.8L485.0 839.8L485.0 840.4L486.0 840.4L486.0 839.7L487.0 839.7L487.0 841.2L488.0 841.2L488.0 841.0L489.0 841.0L489.0 839.1L490.0 839.1L490.0 833.2L491.0 833.2L491.0 834.2L492.0 834.2L492.0 835.3L493.0 835.3L493.0 835.4L494.0 835.4L494.0 835.9L495.0 835.9L495.0 835.5L496.0 835.5L496.0 837.8L497.0 837.8L497.0 837.2L498.0 837.2L498.0 838.0L499.0 838.0L499.0 838.1L500.0 838.1L500.0 837.5L501.0 837.5L501.0 839.5L502.0 839.5L502.0 838.0L503.0 838.0L503.0 838.4L504.0 838.4L504.0 839.5L505.0 839.5L505.0 839.9L506.0 839.9L506.0 838.6L507.0 838.6L507.0 838.4L508.0 838.4L508.0 839.5L509.0 839.5L509.0 840.0L510.0 840.0L510.0 839.1L511.0 839.1L511.0 838.8L512.0 838.8L512.0 839.5L513.0 839.5L513.0 839.4L514.0 839.4L514.0 840.0L515.0 840.0L515.0 839.9L516.0 839.9L516.0 839.7L517.0 839.7L517.0 838.5L518.0 838.5L518.0 839.9L519.0 839.9L519.0 839.7L520.0 839.7L520.0 839.0L521.0 839.0L521.0 839.6L522.0 839.6L522.0 839.4L523.0 839.4L523.0 838.3L524.0 838.3L524.0 839.4L525.0 839.4L525.0 838.6L526.0 838.6L526.0 839.6L527.0 839.6L527.0 838.6L528.0 838.6L528.0 838.1L529.0 838.1L529.0 838.6L530.0 838.6L530.0 839.2L531.0 839.2L531.0 839.5L532.0 839.5L532.0 838.9L533.0 838.9L533.0 834.3L534.0 834.3L534.0 835.0L535.0 835.0L535.0 834.9L536.0 834.9L536.0 835.2L537.0 835.2L537.0 836.6L538.0 836.6L538.0 835.6L539.0 835.6L539.0 835.2L540.0 835.2L540.0 836.0L541.0 836.0L541.0 836.7L542.0 836.7L542.0 836.0L543.0 836.0L543.0 835.9L544.0 835.9L544.0 836.0L545.0 836.0L545.0 836.1L546.0 836.1L546.0 836.5L547.0 836.5L547.0 836.2L548.0 836.2L548.0 836.6L549.0 836.6L549.0 837.5L550.0 837.5L550.0 838.0L551.0 838.0L551.0 837.2L552.0 837.2L552.0 836.7L553.0 836.7L553.0 837.6L554.0 837.6L554.0 837.4L555.0 837.4L555.0 838.0L556.0 838.0L556.0 838.0L557.0 838.0L557.0 837.5L558.0 837.5L558.0 836.2L559.0 836.2L559.0 834.4L560.0 834.4L560.0 834.3L561.0 834.3L561.0 834.2L562.0 834.2L562.0 833.3L563.0 833.3L563.0 835.3L564.0 835.3L564.0 836.0L565.0 836.0L565.0 836.2L566.0 836.2L566.0 835.7L567.0 835.7L567.0 836.6L568.0 836.6L568.0 835.2L569.0 835.2L569.0 836.7L570.0 836.7L570.0 836.4L571.0 836.4L571.0 836.7L572.0 836.7L572.0 836.3L573.0 836.3L573.0 836.8L574.0 836.8L574.0 836.6L575.0 836.6L575.0 836.5L576.0 836.5L576.0 836.4L577.0 836.4L577.0 835.5L578.0 835.5L578.0 836.1L579.0 836.1L579.0 836.4L580.0 836.4L580.0 836.8L581.0 836.8L581.0 834.9L582.0 834.9L582.0 834.9L583.0 834.9L583.0 834.6L584.0 834.6L584.0 835.1L585.0 835.1L585.0 835.6L586.0 835.6L586.0 835.8L587.0 835.8L587.0 836.0L588.0 836.0L588.0 835.4L589.0 835.4L589.0 835.4L590.0 835.4L590.0 834.2L591.0 834.2L591.0 835.8L592.0 835.8L592.0 834.7L593.0 834.7L593.0 834.6L594.0 834.6L594.0 834.7L595.0 834.7L595.0 834.7L596.0 834.7L596.0 836.0L597.0 836.0L597.0 835.7L598.0 835.7L598.0 834.8L599.0 834.8L599.0 834.6L600.0 834.6L600.0 833.7L601.0 833.7L601.0 834.1L602.0 834.1L602.0 835.3L603.0 835.3L603.0 835.4L604.0 835.4L604.0 834.0L605.0 834.0L605.0 835.6L606.0 835.6L606.0 833.6L607.0 833.6L607.0 835.4L608.0 835.4L608.0 834.2L609.0 834.2L609.0 833.6L610.0 833.6L610.0 835.2L611.0 835.2L611.0 835.1L612.0 835.1L612.0 833.9L613.0 833.9L613.0 833.7L614.0 833.7L614.0 835.2L615.0 835.2L615.0 834.1L616.0 834.1L616.0 833.4L617.0 833.4L617.0 833.4L618.0 833.4L618.0 834.2L619.0 834.2L619.0 831.9L620.0 831.9L620.0 830.6L621.0 830.6L621.0 831.2L622.0 831.2L622.0 831.8L623.0 831.8L623.0 831.7L624.0 831.7L624.0 831.9L625.0 831.9L625.0 832.4L626.0 832.4L626.0 832.4L627.0 832.4L627.0 832.5L628.0 832.5L628.0 832.1L629.0 832.1L629.0 832.1L630.0 832.1L630.0 833.9L631.0 833.9L631.0 832.2L632.0 832.2L632.0 833.5L633.0 833.5L633.0 833.1L634.0 833.1L634.0 833.5L635.0 833.5L635.0 833.3L636.0 833.3L636.0 833.1L637.0 833.1L637.0 833.0L638.0 833.0L638.0 833.7L639.0 833.7L639.0 833.3L640.0 833.3L640.0 832.9L641.0 832.9L641.0 833.0L642.0 833.0L642.0 832.7L643.0 832.7L643.0 833.7L644.0 833.7L644.0 832.6L645.0 832.6L645.0 831.8L646.0 831.8L646.0 832.1L647.0 832.1L647.0 832.4L648.0 832.4L648.0 831.9L649.0 831.9L649.0 831.1L650.0 831.1L650.0 831.6L651.0 831.6L651.0 830.8L652.0 830.8L652.0 831.8L653.0 831.8L653.0 831.9L654.0 831.9L654.0 830.9L655.0 830.9L655.0 831.6L656.0 831.6L656.0 832.4L657.0 832.4L657.0 832.3L658.0 832.3L658.0 831.2L659.0 831.2L659.0 831.4L660.0 831.4L660.0 830.9L661.0 830.9L661.0 831.2L662.0 831.2L662.0 832.2L663.0 832.2L663.0 831.3L664.0 831.3L664.0 830.9L665.0 830.9L665.0 830.8L666.0 830.8L666.0 830.7L667.0 830.7L667.0 832.4L668.0 832.4L668.0 832.1L669.0 832.1L669.0 832.3L670.0 832.3L670.0 830.8L671.0 830.8L671.0 831.0L672.0 831.0L672.0 831.3L673.0 831.3L673.0 832.0L674.0 832.0L674.0 831.5L675.0 831.5L675.0 830.9L676.0 830.9L676.0 832.3L677.0 832.3L677.0 830.3L678.0 830.3L678.0 830.7L679.0 830.7L679.0 830.2L680.0 830.2L680.0 830.1L681.0 830.1L681.0 832.1L682.0 832.1L682.0 833.7L683.0 833.7L683.0 834.5L684.0 834.5L684.0 835.4L685.0 835.4L685.0 836.2L686.0 836.2L686.0 837.9L687.0 837.9L687.0 839.0L688.0 839.0L688.0 839.5L689.0 839.5L689.0 840.1L690.0 840.1L690.0 842.7L691.0 842.7L691.0 841.8L692.0 841.8L692.0 843.4L693.0 843.4L693.0 844.8L694.0 844.8L694.0 830.1L695.0 830.1L695.0 829.5L696.0 829.5L696.0 830.3L697.0 830.3L697.0 836.8L698.0 836.8L698.0 837.2L699.0 837.2L699.0 837.6L700.0 837.6L700.0 838.0L701.0 838.0L701.0 838.5L702.0 838.5L702.0 838.9L703.0 838.9L703.0 839.3L704.0 839.3L704.0 839.7L705.0 839.7L705.0 840.1L706.0 840.1L706.0 840.5L707.0 840.5L707.0 841.0L708.0 841.0L708.0 841.4L709.0 841.4L709.0 841.8L710.0 841.8L710.0 842.2L711.0 842.2L711.0 842.6L712.0 842.6L712.0 843.0L713.0 843.0L713.0 843.5L714.0 843.5L714.0 843.9L715.0 843.9L715.0 844.3L716.0 844.3L716.0 844.7L717.0 844.7L717.0 845.1L718.0 845.1L718.0 845.5L719.0 845.5L719.0 846.0L720.0 846.0L720.0 846.4L721.0 846.4L721.0 846.8L722.0 846.8L722.0 847.2L723.0 847.2L723.0 847.6L724.0 847.6L724.0 848.0L725.0 848.0L725.0 848.5L726.0 848.5L726.0 848.9L727.0 848.9L727.0 849.3L728.0 849.3L728.0 849.7L729.0 849.7L729.0 850.1L730.0 850.1L730.0 850.5L731.0 850.5L731.0 851.0L732.0 851.0L732.0 851.4L733.0 851.4L733.0 851.8L734.0 851.8L734.0 852.2L735.0 852.2L735.0 852.6L736.0 852.6L736.0 852.8L737.0 852.8L737.0 852.8L738.0 852.8L738.0 852.8L739.0 852.8L739.0 852.8L740.0 852.8L740.0 852.8L741.0 852.8L741.0 852.8L742.0 852.8L742.0 852.8L743.0 852.8L743.0 852.8L744.0 852.8L744.0 852.8L745.0 852.8L745.0 852.8L746.0 852.8L746.0 852.8L747.0 852.8L747.0 852.8L748.0 852.8L748.0 852.8L749.0 852.8L749.0 852.8L750.0 852.8L750.0 852.8L751.0 852.8L751.0 852.8L752.0 852.8L752.0 852.8L753.0 852.8L753.0 852.8L754.0 852.8L754.0 852.8L755.0 852.8L755.0 852.8L756.0 852.8L756.0 852.8L757.0 852.8L757.0 852.8L758.0 852.8L758.0 852.8L759.0 852.8L759.0 852.8L760.0 852.8L760.0 852.8L761.0 852.8L761.0 852.8L762.0 852.8L761 853.8 Z" fill="#2fd69a"/></svg><div class="a" style="left:242.7px;top:825px;width:518.3px;height:1.8px;background:#c0c8c4"></div><div class="a" style="left:242.7px;top:826.8px;width:518.3px;height:1.4px;background:#18302a"></div><div class="a" style="left:242.7px;top:828.2px;width:518.3px;height:1.9px;background:#2fd69a"></div><div class="a" style="left:252px;top:808.5px;width:11.8px;height:11px;background:#6a6a6a;border:1px solid #b0b0b0"></div><div class="t" style="left:254.3px;top:809.1px;font-size:10px;font-style:italic;color:#1e1e1e;font-family:'Liberation Serif'">fx</div><svg class="a" style="left:243px;top:805px" width="5" height="5"><path d="M0 0 H5 L0 5 Z" fill="#dcdcdc"/></svg>
<div class="a" style="left:241.7px;top:521px;width:1.5px;height:342px;background:#2d8ceb"></div>
<div class="a" style="left:5px;top:863px;width:818px;height:23px;background:#232323"></div>
<div class="a" style="left:608px;top:863.6px;width:215px;height:11.5px;background:#1e1e1e"></div>
<div class="a" style="left:24px;top:863.6px;width:584px;height:11.5px;background:#333333"></div>
<svg class="a" style="left:17.9px;top:863.6px" width="12" height="12" viewBox="-6 -6 12 12"><circle cx="0" cy="0" r="4" fill="#2a2a2a" stroke="#b0b0b0" stroke-width="1.8"/></svg>
<svg class="a" style="left:601.8px;top:863.6px" width="12" height="12" viewBox="-6 -6 12 12"><circle cx="0" cy="0" r="4" fill="#2a2a2a" stroke="#b0b0b0" stroke-width="1.8"/></svg></body></html>
